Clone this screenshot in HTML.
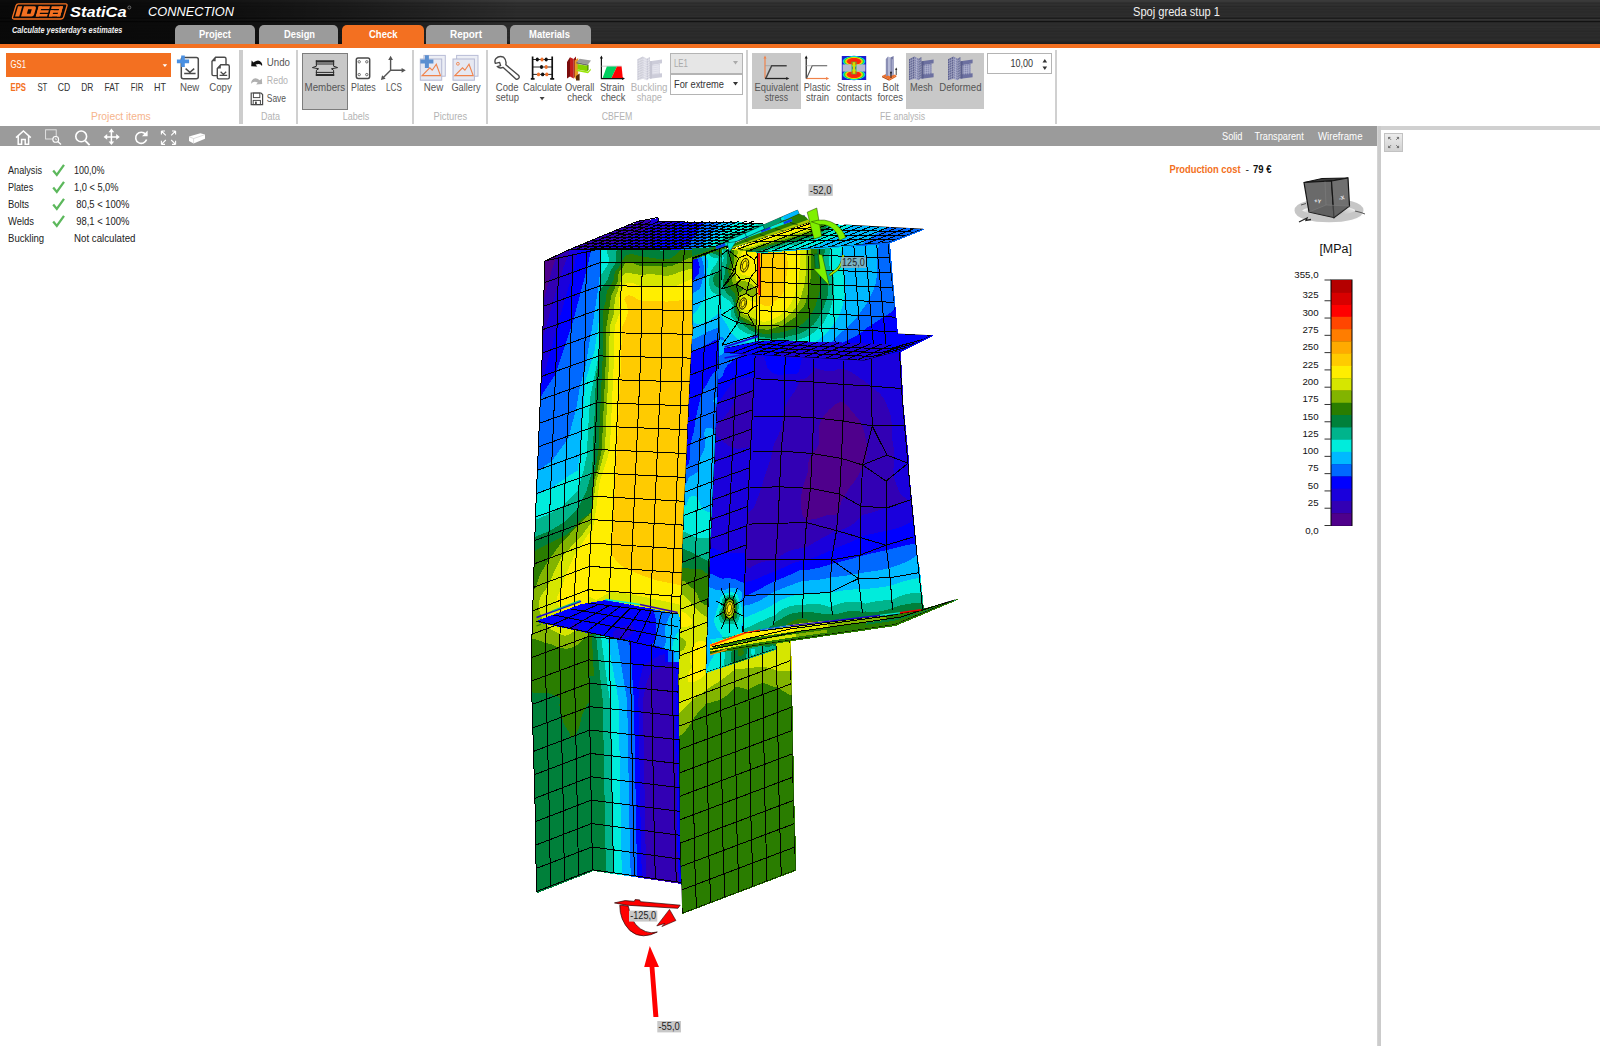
<!DOCTYPE html>
<html><head><meta charset="utf-8"><title>IDEA StatiCa Connection</title>
<style>
*{margin:0;padding:0;box-sizing:border-box}
html,body{width:1600px;height:1046px;overflow:hidden;background:#fff;font-family:"Liberation Sans",sans-serif;}
#app{position:relative;width:1600px;height:1046px;overflow:hidden;background:#fff}
.abs{position:absolute}
#hdr{left:0;top:0;width:1600px;height:44px;background:#161616;overflow:hidden}
#obar{left:0;top:44px;width:1600px;height:4px;background:#f37021}
.tab{position:absolute;top:25px;height:19px;background:#9b9b9b;border-radius:5px 5px 0 0;}
.tab.on{background:#f37021;height:23px}
#ribbon{left:0;top:48px;width:1600px;height:78px;background:#fff}
.sep{position:absolute;top:49.5px;height:74.5px;width:1.8px;background:#d0d0d0}
.sepw{position:absolute;top:49.5px;height:74.5px;width:3.8px;background:#cdcdcd}
.btnon{position:absolute;background:#c8c8c8}
#tbar{left:0;top:126px;width:1376.5px;height:20px;background:#9b9b9b}
#split{left:1376.5px;top:126px;width:4.5px;height:920px;background:linear-gradient(90deg,#d8d8d8,#cbcbcb 40%,#cbcbcb)}
#rtop{left:1381px;top:126px;width:219px;height:4px;background:#d0d0d0}
svg{position:absolute;left:0;top:0;overflow:visible}
text{font-family:"Liberation Sans",sans-serif}
</style></head><body><div id="app">
<div id="hdr" class="abs" style="background:linear-gradient(180deg,#3a3a3a 0px,#3a3a3a 1px,#383838 1px,#383838 2px,#303030 2px,#303030 3px,#2c2c2c 3px,#2c2c2c 4px,#303030 4px,#303030 5px,#2e2e2e 5px,#2e2e2e 6px,#282828 6px,#282828 7px,#2e2e2e 7px,#2e2e2e 8px,#2c2c2c 8px,#2c2c2c 9px,#2a2a2a 9px,#2a2a2a 10px,#2c2c2c 10px,#2c2c2c 11px,#2a2a2a 11px,#2a2a2a 12px,#2a2a2a 12px,#2a2a2a 13px,#2c2c2c 13px,#2c2c2c 14px,#2c2c2c 14px,#2c2c2c 15px,#2a2a2a 15px,#2a2a2a 16px,#2e2e2e 16px,#2e2e2e 17px,#242424 17px,#242424 18px,#1c1c1c 18px,#1c1c1c 19px,#343434 19px,#343434 20px,#2c2c2c 20px,#2c2c2c 21px,#121212 21px,#121212 22px,#262626 22px,#262626 23px,#2c2c2c 23px,#2c2c2c 24px,#2c2c2c 24px,#2c2c2c 25px,#2a2a2a 25px,#2a2a2a 26px,#2c2c2c 26px,#2c2c2c 27px,#2e2e2e 27px,#2e2e2e 28px,#2a2a2a 28px,#2a2a2a 29px,#2c2c2c 29px,#2c2c2c 30px,#2a2a2a 30px,#2a2a2a 31px,#282828 31px,#282828 32px,#2c2c2c 32px,#2c2c2c 33px,#2a2a2a 33px,#2a2a2a 34px,#2a2a2a 34px,#2a2a2a 35px,#2c2c2c 35px,#2c2c2c 36px,#2a2a2a 36px,#2a2a2a 37px,#282828 37px,#282828 38px,#2a2a2a 38px,#2a2a2a 39px,#2c2c2c 39px,#2c2c2c 40px,#2a2a2a 40px,#2a2a2a 41px,#262626 41px,#262626 42px,#222222 42px,#222222 43px,#202020 43px,#202020 44px)"></div>
<div class="abs" style="left:0;top:0;width:520px;height:44px;background:linear-gradient(90deg,rgba(0,0,0,.8) 0,rgba(0,0,0,.75) 35%,rgba(0,0,0,.45) 65%,rgba(0,0,0,0) 100%)"></div>
<div id="obar" class="abs"></div>
<div class="tab" style="left:175px;width:80px"></div>
<div class="tab" style="left:259px;width:79px"></div>
<div class="tab on" style="left:342px;width:82px"></div>
<div class="tab" style="left:426px;width:81px"></div>
<div class="tab" style="left:510px;width:80.5px"></div>
<div id="ribbon" class="abs"></div>
<div id="tbar" class="abs"></div>
<div id="split" class="abs"></div>
<div id="rtop" class="abs"></div>
<div class="sepw" style="left:239.3px"></div>
<div class="sep" style="left:296px"></div>
<div class="sep" style="left:412px"></div>
<div class="sep" style="left:486px"></div>
<div class="sep" style="left:746px"></div>
<div class="sep" style="left:1055.2px"></div>
<div class="btnon" style="left:302px;top:53px;width:46px;height:57px;border:1px solid #7d7d7d"></div>
<div class="btnon" style="left:752px;top:53px;width:49px;height:56px"></div>
<div class="btnon" style="left:906px;top:53px;width:78px;height:56px"></div>
<div class="abs" style="left:6px;top:53px;width:165px;height:24px;background:#f37021"></div>
<div class="abs" style="left:670px;top:53px;width:73px;height:21px;background:#e6e6e6;border:1px solid #b4b4b4"></div>
<div class="abs" style="left:670px;top:74px;width:73px;height:21px;background:#fff;border:1px solid #b4b4b4"></div>
<div class="abs" style="left:987px;top:53px;width:65px;height:21px;background:#fff;border:1px solid #b4b4b4"></div>
<div class="abs" style="left:1384px;top:133px;width:19px;height:19px;background:linear-gradient(180deg,#ececec,#d2d2d2);border:1px solid #c2c2c2"></div>
<svg width="1600" height="1046" viewBox="0 0 1600 1046">
<g id="logo">
<path d="M18.5 3.8 H65.5 Q67.5 3.8 67 5.8 L63.6 17 Q63 19 61 19 H14 Q12 19 12.6 17 L16 5.8 Q16.6 3.8 18.5 3.8Z" fill="none" stroke="#f37021" stroke-width="1.3"/>
<g transform="translate(0,0) skewX(-16)" fill="#f37021">
<rect x="19.80" y="6.3" width="4.2" height="10.3"/>
<path d="M25.80 6.3 h10.5 q2 0 2 2 v6.3 q0 2 -2 2 h-10.5z M30.80 9.2 v4.5 h3.6 v-4.5z" fill-rule="evenodd"/>
<rect x="40.50" y="6.3" width="11.3" height="2.6"/>
<rect x="40.50" y="10.2" width="11.3" height="2.5"/>
<rect x="40.50" y="14.0" width="11.3" height="2.6"/>
<rect x="40.50" y="6.3" width="3.2" height="10.3"/>
<rect x="53.60" y="6.3" width="11.3" height="2.6"/>
<rect x="53.60" y="10.2" width="11.3" height="2.5"/>
<rect x="53.60" y="14.0" width="11.3" height="2.6"/>
<rect x="61.70" y="6.3" width="3.2" height="10.3"/>
<rect x="53.60" y="10.2" width="3.2" height="6.4"/>
</g></g>
<text x="70.0" y="17.4" font-size="15.5" fill="#fff" font-weight="bold" font-style="italic" textLength="56.5" lengthAdjust="spacingAndGlyphs" >StatiCa</text>
<circle cx="129.3" cy="7.5" r="1.5" fill="none" stroke="#bbb" stroke-width=".5"/>
<text x="148.0" y="16.2" font-size="13.2" fill="#fff" font-weight="normal" font-style="italic" textLength="86.0" lengthAdjust="spacingAndGlyphs" >CONNECTION</text>
<text x="12.0" y="32.6" font-size="8.3" fill="#f2f2f2" font-weight="bold" font-style="italic" textLength="110.4" lengthAdjust="spacingAndGlyphs" >Calculate yesterday's estimates</text>
<text x="1133.0" y="16.0" font-size="12" fill="#f0f0f0" font-weight="normal" font-style="normal" textLength="87.0" lengthAdjust="spacingAndGlyphs" >Spoj greda stup 1</text>
<text x="199.0" y="38.3" font-size="11.3" fill="#fff" font-weight="bold" font-style="normal" textLength="32.0" lengthAdjust="spacingAndGlyphs" >Project</text>
<text x="284.0" y="38.3" font-size="11.3" fill="#fff" font-weight="bold" font-style="normal" textLength="31.0" lengthAdjust="spacingAndGlyphs" >Design</text>
<text x="369.0" y="38.3" font-size="11.3" fill="#fff" font-weight="bold" font-style="normal" textLength="28.5" lengthAdjust="spacingAndGlyphs" >Check</text>
<text x="450.0" y="38.3" font-size="11.3" fill="#fff" font-weight="bold" font-style="normal" textLength="32.0" lengthAdjust="spacingAndGlyphs" >Report</text>
<text x="529.0" y="38.3" font-size="11.3" fill="#fff" font-weight="bold" font-style="normal" textLength="41.0" lengthAdjust="spacingAndGlyphs" >Materials</text>
<text x="10.6" y="68.2" font-size="11.5" fill="#fff" font-weight="normal" font-style="normal" textLength="15.4" lengthAdjust="spacingAndGlyphs" >GS1</text>
<path d="M162.6 64.3 h4.6 l-2.3 2.6z" fill="#fff"/>
<text x="10.6" y="90.6" font-size="11.5" fill="#f37021" font-weight="bold" font-style="normal" textLength="15.4" lengthAdjust="spacingAndGlyphs" >EPS</text>
<text x="37.4" y="90.6" font-size="11.5" fill="#333" font-weight="normal" font-style="normal" textLength="10.0" lengthAdjust="spacingAndGlyphs" >ST</text>
<text x="57.7" y="90.6" font-size="11.5" fill="#333" font-weight="normal" font-style="normal" textLength="12.5" lengthAdjust="spacingAndGlyphs" >CD</text>
<text x="81.2" y="90.6" font-size="11.5" fill="#333" font-weight="normal" font-style="normal" textLength="12.2" lengthAdjust="spacingAndGlyphs" >DR</text>
<text x="104.5" y="90.6" font-size="11.5" fill="#333" font-weight="normal" font-style="normal" textLength="14.9" lengthAdjust="spacingAndGlyphs" >FAT</text>
<text x="130.8" y="90.6" font-size="11.5" fill="#333" font-weight="normal" font-style="normal" textLength="12.5" lengthAdjust="spacingAndGlyphs" >FIR</text>
<text x="154.0" y="90.6" font-size="11.5" fill="#333" font-weight="normal" font-style="normal" textLength="12.0" lengthAdjust="spacingAndGlyphs" >HT</text>
<text x="91.0" y="119.5" font-size="11.5" fill="#f6b48c" font-weight="normal" font-style="normal" textLength="59.8" lengthAdjust="spacingAndGlyphs" >Project items</text>
<text x="180.0" y="90.6" font-size="11.5" fill="#555" font-weight="normal" font-style="normal" textLength="19.3" lengthAdjust="spacingAndGlyphs" >New</text>
<text x="209.3" y="90.6" font-size="11.5" fill="#555" font-weight="normal" font-style="normal" textLength="22.5" lengthAdjust="spacingAndGlyphs" >Copy</text>
<text x="266.8" y="66.3" font-size="11.5" fill="#555" font-weight="normal" font-style="normal" textLength="23.2" lengthAdjust="spacingAndGlyphs" >Undo</text>
<text x="266.8" y="84.0" font-size="11.5" fill="#b3b3b3" font-weight="normal" font-style="normal" textLength="21.2" lengthAdjust="spacingAndGlyphs" >Redo</text>
<text x="266.8" y="101.7" font-size="11.5" fill="#555" font-weight="normal" font-style="normal" textLength="19.2" lengthAdjust="spacingAndGlyphs" >Save</text>
<text x="261.0" y="119.5" font-size="11.5" fill="#b3b3b3" font-weight="normal" font-style="normal" textLength="19.0" lengthAdjust="spacingAndGlyphs" >Data</text>
<text x="304.6" y="90.6" font-size="11.5" fill="#555" font-weight="normal" font-style="normal" textLength="40.6" lengthAdjust="spacingAndGlyphs" >Members</text>
<text x="351.0" y="90.6" font-size="11.5" fill="#555" font-weight="normal" font-style="normal" textLength="24.8" lengthAdjust="spacingAndGlyphs" >Plates</text>
<text x="386.0" y="90.6" font-size="11.5" fill="#555" font-weight="normal" font-style="normal" textLength="15.8" lengthAdjust="spacingAndGlyphs" >LCS</text>
<text x="342.8" y="119.5" font-size="11.5" fill="#b3b3b3" font-weight="normal" font-style="normal" textLength="26.5" lengthAdjust="spacingAndGlyphs" >Labels</text>
<text x="423.8" y="90.6" font-size="11.5" fill="#555" font-weight="normal" font-style="normal" textLength="19.5" lengthAdjust="spacingAndGlyphs" >New</text>
<text x="451.4" y="90.6" font-size="11.5" fill="#555" font-weight="normal" font-style="normal" textLength="29.3" lengthAdjust="spacingAndGlyphs" >Gallery</text>
<text x="433.6" y="119.5" font-size="11.5" fill="#b3b3b3" font-weight="normal" font-style="normal" textLength="33.6" lengthAdjust="spacingAndGlyphs" >Pictures</text>
<text x="495.8" y="90.6" font-size="11.5" fill="#555" font-weight="normal" font-style="normal" textLength="22.7" lengthAdjust="spacingAndGlyphs" >Code</text>
<text x="495.8" y="100.9" font-size="11.5" fill="#555" font-weight="normal" font-style="normal" textLength="23.2" lengthAdjust="spacingAndGlyphs" >setup</text>
<text x="523.0" y="90.6" font-size="11.5" fill="#555" font-weight="normal" font-style="normal" textLength="39.0" lengthAdjust="spacingAndGlyphs" >Calculate</text>
<path d="M539.6 97 h5 l-2.5 3.2z" fill="#444"/>
<text x="565.0" y="90.6" font-size="11.5" fill="#555" font-weight="normal" font-style="normal" textLength="29.4" lengthAdjust="spacingAndGlyphs" >Overall</text>
<text x="567.3" y="100.9" font-size="11.5" fill="#555" font-weight="normal" font-style="normal" textLength="24.7" lengthAdjust="spacingAndGlyphs" >check</text>
<text x="600.0" y="90.6" font-size="11.5" fill="#555" font-weight="normal" font-style="normal" textLength="24.5" lengthAdjust="spacingAndGlyphs" >Strain</text>
<text x="601.0" y="100.9" font-size="11.5" fill="#555" font-weight="normal" font-style="normal" textLength="24.3" lengthAdjust="spacingAndGlyphs" >check</text>
<text x="630.7" y="90.6" font-size="11.5" fill="#b3b3b3" font-weight="normal" font-style="normal" textLength="36.8" lengthAdjust="spacingAndGlyphs" >Buckling</text>
<text x="636.7" y="100.9" font-size="11.5" fill="#b3b3b3" font-weight="normal" font-style="normal" textLength="25.3" lengthAdjust="spacingAndGlyphs" >shape</text>
<text x="601.7" y="119.5" font-size="11.5" fill="#b3b3b3" font-weight="normal" font-style="normal" textLength="30.6" lengthAdjust="spacingAndGlyphs" >CBFEM</text>
<text x="674.0" y="67.3" font-size="11.5" fill="#aaa" font-weight="normal" font-style="normal" textLength="14.0" lengthAdjust="spacingAndGlyphs" >LE1</text>
<path d="M733 61 h5 l-2.5 3.4z" fill="#aaa"/>
<text x="674.0" y="88.3" font-size="11.5" fill="#333" font-weight="normal" font-style="normal" textLength="50.0" lengthAdjust="spacingAndGlyphs" >For extreme</text>
<path d="M733 82 h5 l-2.5 3.4z" fill="#333"/>
<text x="754.6" y="90.6" font-size="11.5" fill="#555" font-weight="normal" font-style="normal" textLength="43.8" lengthAdjust="spacingAndGlyphs" >Equivalent</text>
<text x="764.8" y="100.9" font-size="11.5" fill="#555" font-weight="normal" font-style="normal" textLength="23.2" lengthAdjust="spacingAndGlyphs" >stress</text>
<text x="803.8" y="90.6" font-size="11.5" fill="#555" font-weight="normal" font-style="normal" textLength="26.8" lengthAdjust="spacingAndGlyphs" >Plastic</text>
<text x="806.0" y="100.9" font-size="11.5" fill="#555" font-weight="normal" font-style="normal" textLength="23.0" lengthAdjust="spacingAndGlyphs" >strain</text>
<text x="837.0" y="90.6" font-size="11.5" fill="#555" font-weight="normal" font-style="normal" textLength="34.2" lengthAdjust="spacingAndGlyphs" >Stress in</text>
<text x="836.3" y="100.9" font-size="11.5" fill="#555" font-weight="normal" font-style="normal" textLength="35.7" lengthAdjust="spacingAndGlyphs" >contacts</text>
<text x="882.6" y="90.6" font-size="11.5" fill="#555" font-weight="normal" font-style="normal" textLength="16.3" lengthAdjust="spacingAndGlyphs" >Bolt</text>
<text x="877.4" y="100.9" font-size="11.5" fill="#555" font-weight="normal" font-style="normal" textLength="25.6" lengthAdjust="spacingAndGlyphs" >forces</text>
<text x="910.0" y="90.6" font-size="11.5" fill="#555" font-weight="normal" font-style="normal" textLength="22.8" lengthAdjust="spacingAndGlyphs" >Mesh</text>
<text x="939.3" y="90.6" font-size="11.5" fill="#555" font-weight="normal" font-style="normal" textLength="42.2" lengthAdjust="spacingAndGlyphs" >Deformed</text>
<text x="880.0" y="119.5" font-size="11.5" fill="#b3b3b3" font-weight="normal" font-style="normal" textLength="45.0" lengthAdjust="spacingAndGlyphs" >FE analysis</text>
<text x="1010.5" y="67.3" font-size="11.5" fill="#333" font-weight="normal" font-style="normal" textLength="22.5" lengthAdjust="spacingAndGlyphs" >10,00</text>
<path d="M1042.5 62.5 h4.6 l-2.3 -3.4z M1042.5 66.5 h4.6 l-2.3 3.4z" fill="#333"/>
<text x="1222.0" y="139.8" font-size="10.8" fill="#fff" font-weight="normal" font-style="normal" textLength="20.5" lengthAdjust="spacingAndGlyphs" >Solid</text>
<text x="1254.5" y="139.8" font-size="10.8" fill="#fff" font-weight="normal" font-style="normal" textLength="49.3" lengthAdjust="spacingAndGlyphs" >Transparent</text>
<text x="1318.0" y="139.8" font-size="10.8" fill="#fff" font-weight="normal" font-style="normal" textLength="44.5" lengthAdjust="spacingAndGlyphs" >Wireframe</text>
<text x="8.0" y="173.8" font-size="10.6" fill="#222" font-weight="normal" font-style="normal" textLength="34.0" lengthAdjust="spacingAndGlyphs" >Analysis</text>
<text x="74.0" y="173.8" font-size="10.6" fill="#222" font-weight="normal" font-style="normal" textLength="30.5" lengthAdjust="spacingAndGlyphs" >100,0%</text>
<path d="M53.2 170.6 l3.6 4.3 l7.2 -10" fill="none" stroke="#5cb85c" stroke-width="2.3"/>
<text x="8.0" y="190.8" font-size="10.6" fill="#222" font-weight="normal" font-style="normal" textLength="25.2" lengthAdjust="spacingAndGlyphs" >Plates</text>
<text x="74.0" y="190.8" font-size="10.6" fill="#222" font-weight="normal" font-style="normal" textLength="44.5" lengthAdjust="spacingAndGlyphs" >1,0 &lt; 5,0%</text>
<path d="M53.2 187.6 l3.6 4.3 l7.2 -10" fill="none" stroke="#5cb85c" stroke-width="2.3"/>
<text x="8.0" y="207.8" font-size="10.6" fill="#222" font-weight="normal" font-style="normal" textLength="21.0" lengthAdjust="spacingAndGlyphs" >Bolts</text>
<text x="76.2" y="207.8" font-size="10.6" fill="#222" font-weight="normal" font-style="normal" textLength="53.3" lengthAdjust="spacingAndGlyphs" >80,5 &lt; 100%</text>
<path d="M53.2 204.6 l3.6 4.3 l7.2 -10" fill="none" stroke="#5cb85c" stroke-width="2.3"/>
<text x="8.0" y="224.8" font-size="10.6" fill="#222" font-weight="normal" font-style="normal" textLength="26.0" lengthAdjust="spacingAndGlyphs" >Welds</text>
<text x="76.2" y="224.8" font-size="10.6" fill="#222" font-weight="normal" font-style="normal" textLength="53.3" lengthAdjust="spacingAndGlyphs" >98,1 &lt; 100%</text>
<path d="M53.2 221.6 l3.6 4.3 l7.2 -10" fill="none" stroke="#5cb85c" stroke-width="2.3"/>
<text x="8.0" y="241.8" font-size="10.6" fill="#222" font-weight="normal" font-style="normal" textLength="36.2" lengthAdjust="spacingAndGlyphs" >Buckling</text>
<text x="74.0" y="241.8" font-size="10.6" fill="#222" font-weight="normal" font-style="normal" textLength="61.5" lengthAdjust="spacingAndGlyphs" >Not calculated</text>
<text x="1169.4" y="173.0" font-size="10.8" fill="#f37021" font-weight="bold" font-style="normal" textLength="71.2" lengthAdjust="spacingAndGlyphs" >Production cost</text>
<text x="1245.5" y="173.0" font-size="10.8" fill="#222" font-weight="normal" font-style="normal" textLength="3.5" lengthAdjust="spacingAndGlyphs" >-</text>
<text x="1253.0" y="173.0" font-size="10.8" fill="#111" font-weight="bold" font-style="normal" textLength="18.5" lengthAdjust="spacingAndGlyphs" >79 €</text>
<rect x="181.3" y="57.6" width="17" height="21.2" rx="2" fill="#fff" stroke="#4a4a4a" stroke-width="1.5"/>
<path d="M184.2 73.4H195.6M185.6 68.6L189.9 72.3L194.2 68.6" stroke="#4a4a4a" stroke-width="1.5" fill="none"/>
<path d="M176.9 61.4H189.1M183 55.6V67.1" stroke="#4a90e2" stroke-width="3.6" fill="none"/>
<path d="M215.6 57.2H224.4Q226 57.2 226 58.8V74.2Q226 75.6 224.4 75.6H213.4Q212 75.6 212 74.2V61.2Z" fill="#fff" stroke="#4a4a4a" stroke-width="1.4"/><path d="M215.6 57.2V61.2H212Z" fill="#4a4a4a"/>
<path d="M220.8 64.8H227.8Q229.3 64.8 229.3 66.3V77.5Q229.3 78.9 227.8 78.9H218.7Q217.3 78.9 217.3 77.5V68.5Z" fill="#fff" stroke="#4a4a4a" stroke-width="1.4"/><path d="M220.8 64.8V68.5H217.3Z" fill="#4a4a4a"/>
<path d="M219.6 75.4H227.2M220.6 71.8L223.4 74.4L226.2 71.8" stroke="#4a4a4a" stroke-width="1.3" fill="none"/>
<path d="M251.2 66.2L251.6 60.6L253.6 62.4Q258.5 58.6 261.4 62.4Q262.6 64.2 262 66Q260.4 62.8 255.6 64.6L257.3 66.6Z" fill="#111"/>
<path d="M262.2 84L261.8 78.4L259.8 80.2Q254.9 76.4 252 80.2Q250.8 82 251.4 83.8Q253 80.6 257.8 82.4L256.1 84.4Z" fill="#b0b0b0"/>
<path d="M251.2 93H261L262.6 94.6V104.6H251.2Z" fill="#fff" stroke="#4a4a4a" stroke-width="1.2"/><rect x="253.4" y="93" width="6.4" height="4.6" fill="none" stroke="#4a4a4a" stroke-width="1"/><rect x="253.2" y="100.4" width="7.2" height="4.2" fill="none" stroke="#4a4a4a" stroke-width="1"/><rect x="255" y="101.6" width="1.8" height="3" fill="#4a4a4a"/>
<path d="M315.8 61.3H334.2M315.8 75H334.2" stroke="#2a2a2a" stroke-width="2.2"/><path d="M315.8 64H334.2M315.8 72.4H334.2" stroke="#2a2a2a" stroke-width="1"/>
<path d="M316.4 60.4V66.2L312.4 67.6L318.6 68.8L316.4 70.2V76M333.6 60.4V66.2L337.6 67.6L331.4 68.8L333.6 70.2V76" stroke="#2a2a2a" stroke-width="1" fill="none"/>
<rect x="356.3" y="58" width="13.4" height="20.4" rx="1.8" fill="none" stroke="#4a4a4a" stroke-width="1.5"/>
<circle cx="359.2" cy="61.8" r="1.2" fill="none" stroke="#4a4a4a" stroke-width=".8"/>
<circle cx="366.8" cy="61.8" r="1.2" fill="none" stroke="#4a4a4a" stroke-width=".8"/>
<circle cx="359.2" cy="74.6" r="1.2" fill="none" stroke="#4a4a4a" stroke-width=".8"/>
<circle cx="366.8" cy="74.6" r="1.2" fill="none" stroke="#4a4a4a" stroke-width=".8"/>
<path d="M390.6 70.2V58.5M390.6 70.2H403M390.6 70.2L382.6 78.2" stroke="#555" stroke-width="1.4" fill="none"/><path d="M390.6 55.8L388.2 60H393ZM405.8 70.3L401.6 67.9V72.7ZM380.9 79.9L382.1 75.2L385.6 78.7Z" fill="#555"/>
<rect x="423.90000000000003" y="55.4" width="21.4" height="20.8" fill="#eceef5" stroke="#b9bdd6" stroke-width="1"/>
<rect x="420.3" y="59" width="21.4" height="21.2" fill="#e6e8f2" stroke="#b4b8d2" stroke-width="1"/>
<path d="M422.1 75.6L429.8 67.8L432.2 70.2L436.3 64.2L440.5 75.6Z" fill="none" stroke="#f0824a" stroke-width="1.1"/>
<rect x="456.6" y="55.4" width="21.4" height="20.8" fill="#eceef5" stroke="#b9bdd6" stroke-width="1"/>
<rect x="453" y="59" width="21.4" height="21.2" fill="#e6e8f2" stroke="#b4b8d2" stroke-width="1"/>
<path d="M454.8 75.6L462.5 67.8L464.9 70.2L469 64.2L473.2 75.6Z" fill="none" stroke="#f0824a" stroke-width="1.1"/>
<circle cx="457.9" cy="63.8" r="1.4" fill="none" stroke="#f0824a" stroke-width=".9"/>
<path d="M420.4 61.6H433.4M426.9 55.2V68" stroke="#5b8fd0" stroke-width="4" fill="none"/>
<path d="M503.6 57.2Q499 55.4 496 58.4Q494.2 60.6 495.4 63.4L499.6 62.4L500.6 65.6L497.2 66.6Q499.6 68.8 503.2 67.4L515.6 78.8Q517.6 80 518.8 78.2Q519.8 76.6 518.4 75.2L505.8 64.8Q506.8 60 503.6 57.2Z" fill="#fff" stroke="#4a4a4a" stroke-width="1.4" stroke-linejoin="round"/>
<path d="M532.6 56.4V78.8M552.2 56.4V78.8M530.8 78.9H534.6M550.2 78.9H554.2" stroke="#111" stroke-width="1.7" fill="none"/><path d="M532.6 59.5H552.2M532.6 67H552.2M532.6 74.4H552.2" stroke="#111" stroke-width=".9"/>
<ellipse cx="537.3" cy="59.5" rx="1.6" ry="1.9" fill="#111"/>
<ellipse cx="542" cy="59.5" rx="1.6" ry="1.9" fill="#f0702a"/>
<ellipse cx="546.2" cy="59.5" rx="1.6" ry="1.9" fill="#111"/>
<ellipse cx="541.5" cy="67" rx="1.6" ry="1.9" fill="#111"/>
<ellipse cx="546.2" cy="67" rx="1.6" ry="1.9" fill="#f0702a"/>
<ellipse cx="538.5" cy="74.4" rx="1.6" ry="1.9" fill="#f0702a"/>
<ellipse cx="542.6" cy="74.4" rx="1.6" ry="1.9" fill="#111"/>
<ellipse cx="546.8" cy="74.4" rx="1.6" ry="1.9" fill="#f0702a"/>
<polygon points="567,62 570,57.2 570,76.6 567,78.6" fill="#7a0c0c"/><polygon points="570,57.2 573.6,59 573.6,78.4 570,76.6" fill="#c41c1c"/><polygon points="573.6,59 576,56.6 576,75.6 573.6,78.4" fill="#8e1010"/>
<polygon points="574.6,60.4 578.2,58 578.2,80 574.6,78.2" fill="#e89a28"/><polygon points="576,76 579.6,73.6 579.6,80.6 576,80.6" fill="#5a2a08"/>
<polygon points="576.4,62 579.6,58.8 591,60.6 588,64.4" fill="#9c9c9c"/><polygon points="576.4,62 588,64.4 588,66 576.4,63.6" fill="#6e6e6e"/><polygon points="577.6,64 587,65.8 587,71.2 577.6,69.4" fill="#86d200"/><polygon points="576.4,69.4 588,71.6 591,68.6 590.6,70.4 588,73.2 576.4,71" fill="#9ae60a"/><polygon points="587,65.8 588.6,64.4 588.6,70 587,71.2" fill="#5ea000"/>
<path d="M601.4 57V78.6H623.6" stroke="#111" stroke-width="1.2" fill="none"/><path d="M601.4 55.4L599.9 58.4H602.9ZM625 78.6L622 77.1V80.1Z" fill="#111"/><path d="M601.4 66.2H621.6" stroke="#bbb" stroke-width=".8"/>
<polygon points="602.6,78 606.8,66.6 616.9,66.6 611.5,78" fill="#00d060"/><polygon points="611.5,78 616.9,66.6 621.6,66.6 622.8,78" fill="#ff0000"/>
<g opacity="0.95"><polygon points="637.4,59.2 642.8,56.6 642.8,78.80000000000001 637.4,80.2" fill="#c2c2d0"/><polygon points="642.8,56.6 647.0,58.800000000000004 647.0,80.2 642.8,78.80000000000001" fill="#d4d4e0"/><polygon points="647.0,58.800000000000004 649.8,57.0 649.8,77.80000000000001 647.0,80.2" fill="#c2c2d0"/><polygon points="649.8,61.2 662.0,59.400000000000006 662.0,63.2 649.8,65.4" fill="#cacad8"/><polygon points="652.0,65.0 660.0,63.800000000000004 660.0,74.0 652.0,74.80000000000001" fill="#d4d4e0"/><polygon points="649.8,74.6 662.0,73.2 662.0,77.2 649.8,78.80000000000001" fill="#cacad8"/><polygon points="649.8,61.2 652.0,61.2 652.0,78.2 649.8,78.80000000000001" fill="#c2c2d0"/><path d="M637.4 61.4L642.8 59.0L647.0 61.0L649.8 59.4M637.4 63.8L642.8 61.4L647.0 63.4L649.8 61.8M637.4 66.2L642.8 63.8L647.0 65.8L649.8 64.2M637.4 68.60000000000001L642.8 66.2L647.0 68.2L649.8 66.60000000000001M637.4 71.0L642.8 68.6L647.0 70.6L649.8 69.0M637.4 73.4L642.8 71.0L647.0 73.0L649.8 71.4M637.4 75.80000000000001L642.8 73.4L647.0 75.4L649.8 73.80000000000001M637.4 78.2L642.8 75.8L647.0 77.8L649.8 76.2M637.4 80.60000000000001L642.8 78.2L647.0 80.2L649.8 78.60000000000001M654.0 64.64999999999999V74.5M656.0 64.5V74.39999999999999M658.0 64.35V74.3M652.0 67.0L660.0 65.80000000000001M652.0 69.0L660.0 67.80000000000001M652.0 71.0L660.0 69.80000000000001M652.0 73.0L660.0 71.80000000000001M639.1999999999999 58.400000000000006V79.80000000000001M641.0 57.5V79.30000000000001M644.9 57.7V79.5M648.4 57.900000000000006V79.0" stroke="#f4f4f8" stroke-width=".45" fill="none"/></g>
<g opacity="1"><polygon points="909,59.2 914.4,56.6 914.4,78.80000000000001 909,80.2" fill="#5a5e8c"/><polygon points="914.4,56.6 918.6,58.800000000000004 918.6,80.2 914.4,78.80000000000001" fill="#8286b0"/><polygon points="918.6,58.800000000000004 921.4,57.0 921.4,77.80000000000001 918.6,80.2" fill="#5a5e8c"/><polygon points="921.4,61.2 933.6,59.400000000000006 933.6,63.2 921.4,65.4" fill="#6c70a0"/><polygon points="923.6,65.0 931.6,63.800000000000004 931.6,74.0 923.6,74.80000000000001" fill="#8286b0"/><polygon points="921.4,74.6 933.6,73.2 933.6,77.2 921.4,78.80000000000001" fill="#6c70a0"/><polygon points="921.4,61.2 923.6,61.2 923.6,78.2 921.4,78.80000000000001" fill="#5a5e8c"/><path d="M909 61.4L914.4 59.0L918.6 61.0L921.4 59.4M909 63.8L914.4 61.4L918.6 63.4L921.4 61.8M909 66.2L914.4 63.8L918.6 65.8L921.4 64.2M909 68.60000000000001L914.4 66.2L918.6 68.2L921.4 66.60000000000001M909 71.0L914.4 68.6L918.6 70.6L921.4 69.0M909 73.4L914.4 71.0L918.6 73.0L921.4 71.4M909 75.80000000000001L914.4 73.4L918.6 75.4L921.4 73.80000000000001M909 78.2L914.4 75.8L918.6 77.8L921.4 76.2M909 80.60000000000001L914.4 78.2L918.6 80.2L921.4 78.60000000000001M925.6 64.64999999999999V74.5M927.6 64.5V74.39999999999999M929.6 64.35V74.3M923.6 67.0L931.6 65.80000000000001M923.6 69.0L931.6 67.80000000000001M923.6 71.0L931.6 69.80000000000001M923.6 73.0L931.6 71.80000000000001M910.8 58.400000000000006V79.80000000000001M912.6 57.5V79.30000000000001M916.5 57.7V79.5M920 57.900000000000006V79.0" stroke="#c8cae0" stroke-width=".45" fill="none"/></g>
<g opacity="1"><polygon points="948,59.2 953.4,56.6 953.4,78.80000000000001 948,80.2" fill="#5a5e8c"/><polygon points="953.4,56.6 957.6,58.800000000000004 957.6,80.2 953.4,78.80000000000001" fill="#8286b0"/><polygon points="957.6,58.800000000000004 960.4,57.0 960.4,77.80000000000001 957.6,80.2" fill="#5a5e8c"/><polygon points="960.4,61.2 972.6,59.400000000000006 972.6,63.2 960.4,65.4" fill="#6c70a0"/><polygon points="962.6,65.0 970.6,63.800000000000004 970.6,74.0 962.6,74.80000000000001" fill="#8286b0"/><polygon points="960.4,74.6 972.6,73.2 972.6,77.2 960.4,78.80000000000001" fill="#6c70a0"/><polygon points="960.4,61.2 962.6,61.2 962.6,78.2 960.4,78.80000000000001" fill="#5a5e8c"/><path d="M948 61.4L953.4 59.0L957.6 61.0L960.4 59.4M948 63.8L953.4 61.4L957.6 63.4L960.4 61.8M948 66.2L953.4 63.8L957.6 65.8L960.4 64.2M948 68.60000000000001L953.4 66.2L957.6 68.2L960.4 66.60000000000001M948 71.0L953.4 68.6L957.6 70.6L960.4 69.0M948 73.4L953.4 71.0L957.6 73.0L960.4 71.4M948 75.80000000000001L953.4 73.4L957.6 75.4L960.4 73.80000000000001M948 78.2L953.4 75.8L957.6 77.8L960.4 76.2M948 80.60000000000001L953.4 78.2L957.6 80.2L960.4 78.60000000000001M964.6 64.64999999999999V74.5M966.6 64.5V74.39999999999999M968.6 64.35V74.3M962.6 67.0L970.6 65.80000000000001M962.6 69.0L970.6 67.80000000000001M962.6 71.0L970.6 69.80000000000001M962.6 73.0L970.6 71.80000000000001M949.8 58.400000000000006V79.80000000000001M951.6 57.5V79.30000000000001M955.5 57.7V79.5M959 57.900000000000006V79.0" stroke="#c8cae0" stroke-width=".45" fill="none"/></g>
<path d="M765 78.5V57.4" stroke="#f0824a" stroke-width="1.2"/><path d="M765 55.6L763.5 58.6H766.5Z" fill="#f0824a"/><path d="M765 78.5H787.6" stroke="#222" stroke-width="1.3"/><path d="M789.4 78.5L786.2 76.9V80.1Z" fill="#222"/><path d="M765 65.7H771" stroke="#999" stroke-width=".7"/><path d="M765.7 78.5L771.7 65.7H786.7" stroke="#444" stroke-width="1.5" fill="none"/>
<path d="M806.2 78.5V57.4" stroke="#111" stroke-width="1.1"/><path d="M806.2 55.6L804.7 58.6H807.7Z" fill="#111"/><path d="M806.2 78.5H827.4" stroke="#f0824a" stroke-width="1.2"/><path d="M829.2 78.5L826 76.9V80.1Z" fill="#f0824a"/><path d="M806.2 65.7H812" stroke="#aaa" stroke-width=".7"/><path d="M806.5 78.5L812.2 65.7H827.2" stroke="#555" stroke-width="1.1" fill="none"/>
<defs><radialGradient id="blob"><stop offset="0" stop-color="#ff1a0a"/><stop offset=".55" stop-color="#ff2a0a"/><stop offset=".68" stop-color="#ffe000"/><stop offset=".8" stop-color="#30d830"/><stop offset=".9" stop-color="#00d8e8"/><stop offset="1" stop-color="#1c1cd0"/></radialGradient></defs>
<rect x="841.8" y="56" width="24.4" height="24" fill="#1c1cd0"/><ellipse cx="854" cy="61.4" rx="11.8" ry="5.6" fill="url(#blob)"/><ellipse cx="854" cy="74.6" rx="11.8" ry="5.6" fill="url(#blob)"/>
<rect x="842.6" y="64.4" width="9.4" height="7.2" fill="#b4b8d0"/><rect x="856" y="64.4" width="9.4" height="7.2" fill="#b4b8d0"/><rect x="852.6" y="62" width="2.8" height="12" fill="#d2e000"/><rect x="851.8" y="62" width="4.4" height="12" fill="none" stroke="#40c840" stroke-width=".6"/>
<polygon points="882,76 889.2,72.4 896.4,75.6 889.2,79.6" fill="#f0702a"/><polygon points="882,76 889.2,79.6 889.2,80.8 882,77.2" fill="#b84a10"/><polygon points="889.2,79.6 896.4,75.6 896.4,76.8 889.2,80.8" fill="#d85c18"/>
<polygon points="885.8,59 888,56.4 888,75.6 885.8,76.4" fill="#8a8eb4"/><polygon points="888,56.4 890.4,57.6 890.4,76.4 888,75.6" fill="#b6bad6"/><polygon points="890.4,57.6 893.6,56 893.6,74.6 890.4,76.4" fill="#7478a4"/><polygon points="891.6,58.8 894,60 894,75 891.6,75.6" fill="#a4a8c8"/>
<path d="M891 78V72.4M896.2 75V69" stroke="#111" stroke-width=".8"/><path d="M891 71L889.9 73.2H892.1ZM896.2 67.6L895.1 69.8H897.3Z" fill="#111"/>
<path d="M16 137.6L23.4 131L30.8 137.6M18.2 136V144.2H21.6V139.4H25.2V144.2H28.6V136" fill="none" stroke="#fff" stroke-width="1.5" stroke-linejoin="miter"/>
<rect x="45.6" y="129.8" width="10.6" height="9.2" fill="none" stroke="#e8e8e8" stroke-width=".9"/><circle cx="55.7" cy="139.4" r="2.9" fill="#9a9a9a" stroke="#fff" stroke-width="1.1"/><path d="M57.8 141.6L61 144.4" stroke="#fff" stroke-width="1.3"/><path d="M55.7 137.8V139.6H57.2" stroke="#fff" stroke-width=".6" fill="none"/>
<circle cx="81.2" cy="136.4" r="5.4" fill="none" stroke="#fff" stroke-width="1.6"/><path d="M85.2 140.6L89.6 145.2" stroke="#fff" stroke-width="1.8"/>
<path d="M111.4 130.6V143.2M105.4 136.9H117.8" stroke="#fff" stroke-width="1.5"/><path d="M111.4 128.6L108.6 132.2H114.2ZM111.4 145L108.6 141.6H114.2ZM103.6 136.9L107.2 134.1V139.7ZM119.8 136.9L116.2 134.1V139.7Z" fill="#fff"/>
<path d="M145.6 134.2A5.6 5.6 0 1 0 146.6 139.6" fill="none" stroke="#fff" stroke-width="1.6"/><path d="M147.6 130.6V136.2H142Z" fill="#fff"/>
<path d="M161.4 131H165M161.4 131V134.6M161.4 131L165.8 135.4M175.6 131H172M175.6 131V134.6M175.6 131L171.2 135.4M161.4 144.4H165M161.4 144.4V140.8M161.4 144.4L165.8 140M175.6 144.4H172M175.6 144.4V140.8M175.6 144.4L171.2 140" stroke="#fff" stroke-width="1.1" fill="none"/>
<polygon points="189,136.6 200.4,133.2 205,134.6 205,138.8 193.6,143.4 189,141" fill="#fff"/><path d="M189 136.6L193.6 138.6V143.4M193.6 138.6L205 134.6" stroke="#c4c4c4" stroke-width=".6" fill="none"/>
<path d="M1388.6 137.4H1390.4M1388.6 137.4V139.2M1388.6 137.4L1391 139.8M1398.6 137.4H1396.8M1398.6 137.4V139.2M1398.6 137.4L1396.2 139.8M1388.6 147.6H1390.4M1388.6 147.6V145.8M1388.6 147.6L1391 145.2M1398.6 147.6H1396.8M1398.6 147.6V145.8M1398.6 147.6L1396.2 145.2" stroke="#555" stroke-width=".8" fill="none"/>
<g shape-rendering="crispEdges">
<path fill="#4f008c" d="M544 293h1v4h-1zM544 290h2v3h-2zM544 286h3v4h-3zM544 282h4v4h-4zM544 279h5v3h-5zM544 275h6v4h-6zM544 272h7v3h-7zM545 271h6v1h-6zM545 268h7v3h-7zM545 265h8v3h-8zM545 262h9v3h-9zM545 261h10v1h-10zM547 260h8v1h-8zM549 259h6v1h-6zM551 258h5v1h-5zM553 257h3v1h-3zM555 256h1v1h-1z"/>
<path fill="#3200b4" d="M543 332h1v3h-1zM543 328h2v4h-2zM543 325h3v3h-3zM543 321h4v4h-4zM543 318h5v3h-5zM544 314h5v4h-5zM544 311h6v3h-6zM544 307h7v4h-7zM544 304h8v3h-8zM544 300h9v4h-9zM544 297h10v3h-10zM545 293h10v4h-10zM546 290h10v3h-10zM547 287h10v3h-10zM547 286h11v1h-11zM548 283h10v3h-10zM548 282h11v1h-11zM549 280h10v2h-10zM549 279h11v1h-11zM550 277h10v2h-10zM550 275h11v2h-11zM551 273h10v2h-10zM551 271h11v2h-11zM552 270h10v1h-10zM552 268h11v2h-11zM553 267h10v1h-10zM553 265h11v2h-11zM554 262h11v3h-11zM555 260h11v2h-11zM555 259h12v1h-12zM556 257h11v2h-11zM556 256h12v1h-12zM557 255h11v1h-11zM559 254h10v1h-10zM561 253h8v1h-8zM563 252h6v1h-6zM565 251h5v1h-5zM567 250h3v1h-3zM569 249h16v1h-16zM572 248h16v1h-16zM574 247h16v1h-16zM577 246h16v1h-16zM579 245h17v1h-17zM582 244h18v1h-18zM584 243h32v1h-32zM587 242h33v1h-33zM589 241h33v1h-33zM592 240h32v1h-32zM594 239h32v1h-32zM597 238h30v1h-30zM599 237h30v1h-30zM602 236h29v1h-29zM604 235h29v1h-29zM606 234h29v1h-29zM609 233h29v1h-29zM611 232h29v1h-29zM614 231h28v1h-28zM616 230h28v1h-28zM619 229h26v1h-26zM621 228h25v1h-25zM624 227h23v1h-23zM626 226h22v1h-22zM629 225h19v1h-19zM631 224h18v1h-18zM634 223h16v1h-16zM636 222h14v1h-14zM640 221h11v1h-11zM643 697h30v35h-30zM643 732h31v3h-31zM644 692h29v5h-29zM644 735h30v25h-30zM644 760h33v29h-33zM645 220h6v1h-6zM645 686h28v6h-28zM645 789h32v55h-32zM646 683h27v3h-27zM646 844h31v8h-31zM646 852h32v21h-32zM646 873h33v6h-33zM647 680h26v3h-26zM648 678h25v2h-25zM649 675h24v3h-24zM650 674h23v1h-23zM651 673h22v1h-22zM651 879h28v1h-28zM652 672h21v1h-21zM653 670h20v2h-20zM656 669h17v1h-17zM658 880h21v1h-21zM659 668h14v1h-14zM661 667h12v1h-12zM664 666h9v1h-9zM665 881h14v1h-14zM667 665h6v1h-6zM671 882h8v1h-8zM678 883h1v1h-1z"/>
<path fill="#1a00dc" d="M541 380h1v4h-1zM541 377h2v3h-2zM541 373h3v4h-3zM541 369h4v4h-4zM541 366h5v3h-5zM541 365h6v1h-6zM542 362h5v3h-5zM542 358h6v4h-6zM542 355h7v3h-7zM542 351h8v4h-8zM542 348h9v3h-9zM542 344h10v4h-10zM542 342h11v2h-11zM543 340h10v2h-10zM543 337h11v3h-11zM543 335h12v2h-12zM544 333h11v2h-11zM544 332h12v1h-12zM545 329h11v3h-11zM545 328h12v1h-12zM546 326h11v2h-11zM546 325h12v1h-12zM547 322h11v3h-11zM547 321h12v1h-12zM548 319h11v2h-11zM548 318h12v1h-12zM549 315h11v3h-11zM549 314h12v1h-12zM550 312h11v2h-11zM550 311h12v1h-12zM551 308h11v3h-11zM551 307h12v1h-12zM552 305h11v2h-11zM552 304h12v1h-12zM553 301h11v3h-11zM553 300h12v1h-12zM554 298h11v2h-11zM554 297h12v1h-12zM555 294h11v3h-11zM555 293h12v1h-12zM556 291h11v2h-11zM556 290h12v1h-12zM557 287h11v3h-11zM558 284h11v3h-11zM558 283h12v1h-12zM559 280h11v3h-11zM560 277h11v3h-11zM561 273h11v4h-11zM562 270h11v3h-11zM563 269h10v1h-10zM563 267h11v2h-11zM564 265h10v2h-10zM565 264h9v1h-9zM565 262h10v2h-10zM566 260h9v2h-9zM567 259h8v1h-8zM567 257h9v2h-9zM568 256h8v1h-8zM568 255h9v1h-9zM569 252h8v3h-8zM570 250h8v2h-8zM585 249h62v1h-62zM588 248h60v1h-60zM590 247h60v1h-60zM593 246h58v1h-58zM596 245h56v1h-56zM600 244h53v1h-53zM616 243h38v1h-38zM620 242h35v1h-35zM622 241h35v1h-35zM624 240h34v1h-34zM626 239h33v1h-33zM627 238h33v1h-33zM629 237h32v1h-32zM631 236h31v1h-31zM633 235h30v1h-30zM635 234h30v1h-30zM638 698h5v9h-5zM638 233h28v1h-28zM639 697h4v1h-4zM639 707h4v28h-4zM639 692h5v5h-5zM639 735h5v27h-5zM639 686h6v6h-6zM639 683h7v3h-7zM639 681h8v2h-8zM640 762h4v27h-4zM640 789h5v28h-5zM640 680h7v1h-7zM640 678h8v2h-8zM640 677h9v1h-9zM640 232h27v1h-27zM641 817h4v27h-4zM641 844h5v20h-5zM641 675h8v2h-8zM641 674h9v1h-9zM641 673h10v1h-10zM642 864h4v14h-4zM642 672h10v1h-10zM642 670h11v2h-11zM642 669h14v1h-14zM642 231h26v1h-26zM643 668h16v1h-16zM643 667h18v1h-18zM643 666h21v1h-21zM643 665h24v1h-24zM644 878h2v1h-2zM644 230h25v1h-25zM645 229h25v1h-25zM645 664h31v1h-31zM646 228h25v1h-25zM646 663h30v1h-30zM647 227h25v1h-25zM648 226h25v1h-25zM648 225h26v1h-26zM648 662h28v1h-28zM649 224h26v1h-26zM650 661h15v1h-15zM650 223h26v1h-26zM650 222h27v1h-27zM651 219h8v2h-8zM651 221h9v1h-9zM651 660h14v1h-14zM653 659h12v1h-12zM654 658h11v1h-11zM656 218h3v1h-3zM656 657h9v1h-9zM658 656h7v1h-7zM659 655h6v1h-6zM663 654h2v1h-2zM673 665h3v67h-3zM674 732h2v20h-2zM674 752h3v8h-3z"/>
<path fill="#0000ff" d="M540 396h1v2h-1zM540 394h2v2h-2zM540 392h3v2h-3zM540 391h4v1h-4zM540 389h5v2h-5zM541 388h5v1h-5zM541 386h6v2h-6zM541 385h7v1h-7zM541 384h8v1h-8zM542 383h7v1h-7zM542 382h8v1h-8zM542 380h9v2h-9zM543 379h9v1h-9zM543 377h10v2h-10zM544 376h10v1h-10zM544 374h11v2h-11zM544 373h12v1h-12zM545 371h11v2h-11zM545 369h12v2h-12zM546 368h11v1h-11zM546 366h12v2h-12zM547 365h11v1h-11zM547 362h12v3h-12zM548 359h12v3h-12zM548 358h13v1h-13zM549 356h12v2h-12zM549 355h13v1h-13zM550 353h12v2h-12zM550 351h13v2h-13zM551 350h12v1h-12zM551 348h13v2h-13zM552 347h12v1h-12zM552 344h13v3h-13zM553 341h13v3h-13zM553 340h14v1h-14zM554 338h13v2h-13zM554 337h14v1h-14zM555 335h13v2h-13zM555 333h14v2h-14zM556 332h13v1h-13zM556 329h14v3h-14zM557 326h14v3h-14zM558 323h14v3h-14zM558 322h15v1h-15zM559 320h14v2h-14zM559 319h15v1h-15zM560 316h14v3h-14zM560 315h15v1h-15zM561 312h14v3h-14zM562 308h14v4h-14zM563 305h14v3h-14zM564 304h13v1h-13zM564 301h14v3h-14zM565 298h14v3h-14zM566 297h13v1h-13zM566 294h14v3h-14zM567 293h13v1h-13zM567 291h14v2h-14zM568 289h13v2h-13zM568 287h14v2h-14zM569 285h13v2h-13zM569 284h14v1h-14zM570 282h13v2h-13zM570 280h14v2h-14zM571 278h13v2h-13zM571 277h14v1h-14zM572 274h13v3h-13zM572 273h14v1h-14zM573 270h13v3h-13zM573 269h14v1h-14zM574 266h13v3h-13zM574 264h14v2h-14zM575 262h13v2h-13zM575 259h14v3h-14zM576 257h13v2h-13zM576 256h14v1h-14zM577 253h13v3h-13zM577 252h14v1h-14zM578 250h13v2h-13zM623 613h30v1h-30zM623 614h38v1h-38zM624 615h44v1h-44zM624 616h45v3h-45zM625 619h44v5h-44zM626 624h43v5h-43zM627 629h42v4h-42zM628 633h41v5h-41zM629 638h40v7h-40zM630 648h38v6h-38zM630 645h39v3h-39zM631 663h15v1h-15zM631 662h17v1h-17zM631 661h19v1h-19zM631 660h20v1h-20zM631 659h22v1h-22zM631 658h23v1h-23zM631 657h25v1h-25zM631 656h27v1h-27zM631 655h28v1h-28zM631 654h32v1h-32zM632 677h8v3h-8zM632 673h9v4h-9zM632 669h10v4h-10zM632 665h11v4h-11zM632 664h13v1h-13zM633 681h6v14h-6zM633 680h7v1h-7zM634 698h4v9h-4zM634 695h5v3h-5zM634 707h5v28h-5zM635 735h4v27h-4zM635 762h5v27h-5zM636 789h4v28h-4zM636 817h5v27h-5zM637 844h4v20h-4zM637 864h5v13h-5zM638 877h4v1h-4zM647 249h34v1h-34zM648 248h35v1h-35zM650 247h34v1h-34zM651 246h35v1h-35zM652 245h36v1h-36zM653 244h36v1h-36zM654 243h36v1h-36zM655 242h36v1h-36zM657 241h34v1h-34zM658 240h34v1h-34zM659 239h33v1h-33zM660 238h33v1h-33zM661 237h32v1h-32zM662 236h32v1h-32zM663 235h32v1h-32zM665 654h3v8h-3zM665 234h30v1h-30zM666 233h30v1h-30zM667 232h30v1h-30zM668 231h29v1h-29zM669 230h29v1h-29zM670 229h29v1h-29zM671 228h28v1h-28zM672 227h28v1h-28zM673 226h28v1h-28zM674 225h27v1h-27zM675 224h27v1h-27zM676 662h4v90h-4zM676 223h27v1h-27zM677 752h3v25h-3zM677 777h4v75h-4zM677 222h26v1h-26zM678 852h3v20h-3zM678 872h4v1h-4zM679 873h3v11h-3z"/>
<path fill="#0069ff" d="M537 470h2v1h-2zM537 469h3v1h-3zM537 468h4v1h-4zM537 467h6v1h-6zM537 466h7v1h-7zM537 465h8v1h-8zM537 464h10v1h-10zM537 463h11v1h-11zM537 462h13v1h-13zM537 461h14v1h-14zM537 460h15v1h-15zM537 459h16v1h-16zM538 457h16v2h-16zM538 456h17v1h-17zM538 455h18v1h-18zM538 453h19v2h-19zM538 452h20v1h-20zM538 450h21v2h-21zM538 449h22v1h-22zM538 448h23v1h-23zM538 446h24v2h-24zM538 445h25v1h-25zM538 444h26v1h-26zM538 442h27v2h-27zM538 441h28v1h-28zM538 439h29v2h-29zM538 438h30v1h-30zM538 435h31v3h-31zM539 434h30v1h-30zM539 430h31v4h-31zM539 426h32v4h-32zM539 422h33v4h-33zM539 419h34v3h-34zM539 415h35v4h-35zM539 412h36v3h-36zM540 411h35v1h-35zM540 407h36v4h-36zM540 401h37v6h-37zM540 398h38v3h-38zM541 396h37v2h-37zM542 395h36v1h-36zM542 394h37v1h-37zM543 392h36v2h-36zM544 391h35v1h-35zM545 389h34v2h-34zM546 388h34v1h-34zM547 386h33v2h-33zM548 385h32v1h-32zM549 384h31v1h-31zM549 383h32v1h-32zM550 382h31v1h-31zM551 381h30v1h-30zM551 380h31v1h-31zM552 379h30v1h-30zM553 377h29v2h-29zM554 376h29v1h-29zM555 374h28v2h-28zM556 373h27v1h-27zM556 371h28v2h-28zM557 369h27v2h-27zM557 368h28v1h-28zM558 366h27v2h-27zM558 365h28v1h-28zM559 362h27v3h-27zM560 360h26v2h-26zM560 359h27v1h-27zM561 356h26v3h-26zM562 354h25v2h-25zM562 353h26v1h-26zM563 350h25v3h-25zM564 348h24v2h-24zM564 347h25v1h-25zM565 344h24v3h-24zM566 342h23v2h-23zM566 341h24v1h-24zM567 338h23v3h-23zM568 336h22v2h-22zM568 335h23v1h-23zM569 332h22v3h-22zM570 331h21v1h-21zM570 329h22v2h-22zM571 326h21v3h-21zM572 325h20v1h-20zM572 323h21v2h-21zM573 320h20v3h-20zM574 319h19v1h-19zM574 316h20v3h-20zM575 312h19v4h-19zM576 308h19v4h-19zM577 306h18v2h-18zM577 304h19v2h-19zM578 301h18v3h-18zM579 299h17v2h-17zM579 297h18v2h-18zM580 293h17v4h-17zM581 289h17v4h-17zM582 287h16v2h-16zM582 285h17v2h-17zM583 282h16v3h-16zM584 278h15v4h-15zM585 277h14v1h-14zM585 274h15v3h-15zM586 270h14v4h-14zM587 266h13v4h-13zM588 262h12v4h-12zM589 257h11v5h-11zM590 256h10v1h-10zM590 253h11v3h-11zM591 250h10v3h-10zM611 613h12v2h-12zM612 615h12v4h-12zM613 619h12v5h-12zM614 624h12v5h-12zM615 629h12v4h-12zM616 633h12v5h-12zM617 638h12v5h-12zM618 643h11v2h-11zM618 645h12v4h-12zM619 649h11v5h-11zM619 654h12v1h-12zM620 655h11v6h-11zM621 661h10v3h-10zM621 664h11v3h-11zM622 667h10v6h-10zM623 673h9v6h-9zM624 679h8v1h-8zM624 680h9v5h-9zM625 685h8v6h-8zM626 691h7v4h-7zM626 695h8v2h-8zM627 697h7v21h-7zM628 718h6v17h-6zM628 735h7v38h-7zM629 773h6v16h-6zM629 789h7v39h-7zM630 828h6v16h-6zM630 844h7v24h-7zM631 868h6v9h-6zM668 653h6v9h-6zM668 648h7v5h-7zM669 620h6v28h-6zM669 616h7v4h-7zM681 249h17v1h-17zM683 248h16v1h-16zM684 247h16v1h-16zM686 246h15v1h-15zM688 245h14v1h-14zM689 244h13v1h-13zM690 243h13v1h-13zM691 241h13v2h-13zM692 240h13v1h-13zM692 239h14v1h-14zM693 238h14v1h-14zM693 237h15v1h-15zM694 236h14v1h-14zM695 235h14v1h-14zM695 234h15v1h-15zM696 233h15v1h-15zM697 232h15v1h-15zM697 231h16v1h-16zM698 230h16v1h-16zM699 229h16v1h-16zM699 228h17v1h-17zM700 227h17v1h-17zM701 226h16v1h-16zM701 225h17v1h-17zM702 224h17v1h-17zM703 223h17v1h-17zM703 222h18v1h-18z"/>
<path fill="#00b9ff" d="M536 494h2v1h-2zM536 493h4v1h-4zM536 492h6v1h-6zM536 491h8v1h-8zM536 490h10v1h-10zM536 489h12v1h-12zM536 488h14v1h-14zM536 487h16v1h-16zM536 486h18v1h-18zM536 485h19v1h-19zM536 484h20v1h-20zM536 483h22v1h-22zM536 482h23v1h-23zM537 481h24v1h-24zM537 480h25v1h-25zM537 479h27v1h-27zM537 478h28v1h-28zM537 477h29v1h-29zM537 476h31v1h-31zM537 475h32v1h-32zM537 474h34v1h-34zM537 473h36v1h-36zM537 472h37v1h-37zM537 471h39v1h-39zM539 470h39v1h-39zM540 469h38v1h-38zM541 468h37v1h-37zM543 467h35v1h-35zM544 466h34v1h-34zM545 465h33v1h-33zM547 464h31v1h-31zM548 463h31v1h-31zM550 462h29v1h-29zM551 461h28v1h-28zM552 460h27v1h-27zM553 459h26v1h-26zM554 458h25v1h-25zM554 457h26v1h-26zM555 456h25v1h-25zM556 455h24v1h-24zM557 453h23v2h-23zM558 452h22v1h-22zM559 450h21v2h-21zM560 449h20v1h-20zM561 448h19v1h-19zM562 446h18v2h-18zM563 445h17v1h-17zM564 444h16v1h-16zM565 443h15v1h-15zM565 442h16v1h-16zM566 441h15v1h-15zM567 439h14v2h-14zM568 438h13v1h-13zM569 434h12v4h-12zM570 430h11v4h-11zM571 427h10v3h-10zM571 426h11v1h-11zM572 422h10v4h-10zM573 419h9v3h-9zM574 415h8v4h-8zM575 411h8v4h-8zM576 407h7v4h-7zM577 404h6v3h-6zM577 401h7v3h-7zM578 395h6v6h-6zM579 392h5v3h-5zM579 389h6v3h-6zM580 384h5v5h-5zM581 381h4v3h-4zM582 377h4v4h-4zM583 374h4v3h-4zM583 373h5v1h-5zM584 371h4v2h-4zM584 369h5v2h-5zM585 367h4v2h-4zM585 366h5v1h-5zM586 364h4v2h-4zM586 361h5v3h-5zM586 360h6v1h-6zM587 357h5v3h-5zM587 354h6v3h-6zM588 351h6v3h-6zM588 348h7v3h-7zM589 344h6v4h-6zM589 342h7v2h-7zM590 337h6v5h-6zM590 336h7v1h-7zM591 331h6v5h-6zM592 330h5v1h-5zM592 325h6v5h-6zM593 323h5v2h-5zM593 319h6v4h-6zM594 316h5v3h-5zM594 312h6v4h-6zM595 306h5v6h-5zM596 299h4v7h-4zM597 293h3v6h-3zM598 287h2v6h-2zM599 277h1v10h-1zM603 613h8v2h-8zM604 615h8v4h-8zM604 619h9v2h-9zM605 621h8v3h-8zM605 624h9v3h-9zM606 627h8v2h-8zM606 629h9v3h-9zM607 632h8v1h-8zM607 633h9v5h-9zM608 638h9v5h-9zM609 643h9v6h-9zM610 649h9v6h-9zM611 655h9v6h-9zM612 661h9v5h-9zM613 666h8v1h-8zM613 667h9v5h-9zM614 672h8v1h-8zM614 673h9v5h-9zM615 678h8v1h-8zM615 679h9v4h-9zM616 683h8v2h-8zM616 685h9v4h-9zM617 689h8v2h-8zM617 691h9v4h-9zM618 695h8v2h-8zM618 697h9v3h-9zM619 700h8v18h-8zM619 718h9v33h-9zM620 751h8v22h-8zM620 773h9v33h-9zM621 806h8v22h-8zM621 828h9v32h-9zM622 860h8v8h-8zM622 868h9v7h-9zM624 875h7v1h-7zM674 656h6v6h-6zM674 653h7v3h-7zM675 620h6v33h-6zM676 617h5v3h-5zM680 613h1v4h-1zM698 249h9v1h-9zM699 248h9v1h-9zM700 247h8v1h-8zM701 246h8v1h-8zM702 245h8v1h-8zM702 244h9v1h-9zM703 243h8v1h-8zM704 242h8v1h-8zM704 241h9v1h-9zM705 240h9v1h-9zM706 239h10v1h-10zM707 238h10v1h-10zM708 237h10v1h-10zM708 236h11v1h-11zM709 235h11v1h-11zM710 234h10v1h-10zM711 233h10v1h-10zM712 232h10v1h-10zM713 231h10v1h-10zM714 230h11v1h-11zM715 229h11v1h-11zM716 228h11v1h-11zM717 227h11v1h-11zM717 226h13v1h-13zM718 225h13v1h-13zM719 224h14v1h-14zM720 223h16v1h-16zM721 222h17v1h-17z"/>
<path fill="#00ecdc" d="M535 519h1v1h-1zM535 518h4v1h-4zM535 517h6v1h-6zM535 516h8v1h-8zM535 515h11v1h-11zM535 514h13v1h-13zM535 513h15v1h-15zM535 512h17v1h-17zM535 511h18v1h-18zM535 510h20v1h-20zM535 509h22v1h-22zM535 508h23v1h-23zM535 507h25v1h-25zM535 506h27v1h-27zM536 505h27v1h-27zM536 504h28v1h-28zM536 503h29v1h-29zM536 502h30v1h-30zM536 501h31v1h-31zM536 500h32v1h-32zM536 499h33v1h-33zM536 498h34v1h-34zM536 497h35v1h-35zM536 496h36v1h-36zM536 495h37v1h-37zM538 494h36v1h-36zM540 493h35v1h-35zM542 492h34v1h-34zM544 491h33v1h-33zM546 490h32v1h-32zM548 489h30v1h-30zM550 488h29v1h-29zM552 487h27v1h-27zM554 486h25v1h-25zM555 485h24v1h-24zM556 484h24v1h-24zM558 483h22v1h-22zM559 482h21v1h-21zM561 481h19v1h-19zM562 480h19v1h-19zM564 479h17v1h-17zM565 478h16v1h-16zM566 477h16v1h-16zM568 476h14v1h-14zM569 475h13v1h-13zM571 474h11v1h-11zM573 473h10v1h-10zM574 472h9v1h-9zM576 471h7v1h-7zM578 466h6v5h-6zM578 464h7v2h-7zM579 461h6v3h-6zM579 458h7v3h-7zM580 457h6v1h-6zM580 443h7v14h-7zM581 441h6v2h-6zM581 427h7v14h-7zM582 423h6v4h-6zM582 415h7v8h-7zM583 408h6v7h-6zM583 404h7v4h-7zM584 396h6v8h-6zM584 392h7v4h-7zM585 391h6v1h-6zM585 386h7v5h-7zM585 381h8v5h-8zM586 377h8v4h-8zM587 376h7v1h-7zM587 374h8v2h-8zM588 371h7v3h-7zM589 367h7v4h-7zM590 366h6v1h-6zM590 364h7v2h-7zM591 361h6v3h-6zM592 357h6v4h-6zM593 356h5v1h-5zM593 354h6v2h-6zM594 351h5v3h-5zM595 344h4v7h-4zM596 337h3v7h-3zM597 330h2v7h-2zM598 323h1v7h-1zM598 613h5v2h-5zM598 615h6v2h-6zM599 316h1v5h-1zM599 617h5v4h-5zM599 621h6v4h-6zM600 274h1v2h-1zM600 273h2v1h-2zM600 271h3v2h-3zM600 270h4v1h-4zM600 268h5v2h-5zM600 625h5v2h-5zM600 267h6v1h-6zM600 627h6v5h-6zM600 265h7v2h-7zM600 632h7v1h-7zM600 256h8v1h-8zM600 262h8v3h-8zM600 257h9v5h-9zM601 250h6v4h-6zM601 633h6v5h-6zM601 254h7v2h-7zM601 638h7v2h-7zM602 640h6v3h-6zM602 643h7v5h-7zM603 648h6v1h-6zM603 649h7v6h-7zM604 655h7v6h-7zM604 661h8v1h-8zM605 662h7v4h-7zM605 666h8v4h-8zM606 670h7v2h-7zM606 672h8v5h-8zM607 677h7v1h-7zM607 678h8v5h-8zM607 683h9v1h-9zM608 684h8v5h-8zM608 689h9v2h-9zM609 691h8v4h-8zM609 695h9v3h-9zM610 698h8v2h-8zM610 700h9v35h-9zM611 735h8v16h-8zM611 751h9v38h-9zM612 789h8v17h-8zM612 806h9v38h-9zM613 844h8v16h-8zM613 860h9v14h-9zM617 874h5v1h-5zM707 249h7v1h-7zM708 248h6v1h-6zM708 247h7v1h-7zM709 246h6v1h-6zM710 245h6v1h-6zM711 244h6v1h-6zM711 243h7v1h-7zM712 242h7v1h-7zM713 241h7v1h-7zM714 240h7v1h-7zM716 239h6v1h-6zM717 238h6v1h-6zM718 237h6v1h-6zM719 236h6v1h-6zM720 235h6v1h-6zM720 234h8v1h-8zM721 233h8v1h-8zM722 232h10v1h-10zM723 231h18v1h-18zM725 230h20v1h-20zM726 229h21v1h-21zM727 228h22v1h-22zM728 227h23v1h-23zM730 226h24v1h-24zM731 225h25v1h-25zM733 224h25v1h-25zM736 223h21v1h-21zM738 222h5v1h-5z"/>
<path fill="#00b48c" d="M535 536h1v1h-1zM535 535h3v1h-3zM535 534h6v1h-6zM535 533h8v1h-8zM535 532h11v1h-11zM535 531h13v1h-13zM535 530h15v1h-15zM535 529h17v1h-17zM535 528h19v1h-19zM535 527h20v1h-20zM535 526h22v1h-22zM535 525h24v1h-24zM535 524h25v1h-25zM535 523h27v1h-27zM535 522h29v1h-29zM535 521h30v1h-30zM535 520h31v1h-31zM536 519h31v1h-31zM539 518h29v1h-29zM541 517h28v1h-28zM543 516h27v1h-27zM546 515h25v1h-25zM548 514h24v1h-24zM550 513h23v1h-23zM552 512h22v1h-22zM553 511h22v1h-22zM555 510h21v1h-21zM557 509h20v1h-20zM558 508h20v1h-20zM560 507h18v1h-18zM562 506h17v1h-17zM563 505h16v1h-16zM564 504h16v1h-16zM565 503h15v1h-15zM566 502h15v1h-15zM567 501h14v1h-14zM568 500h14v1h-14zM569 499h13v1h-13zM570 498h13v1h-13zM571 497h12v1h-12zM572 496h12v1h-12zM573 495h11v1h-11zM574 494h11v1h-11zM575 493h10v1h-10zM576 492h10v1h-10zM577 491h9v1h-9zM578 489h9v2h-9zM579 487h8v2h-8zM579 485h9v2h-9zM580 484h8v1h-8zM580 481h9v3h-9zM581 480h8v1h-8zM581 478h9v2h-9zM582 477h8v1h-8zM582 474h9v3h-9zM583 473h8v1h-8zM583 471h9v2h-9zM584 466h8v5h-8zM585 462h7v4h-7zM585 461h8v1h-8zM586 457h7v4h-7zM587 441h6v16h-6zM588 436h5v5h-5zM588 423h6v13h-6zM589 416h5v7h-5zM589 408h6v8h-6zM590 396h5v12h-5zM591 391h4v5h-4zM592 388h3v3h-3zM592 386h4v2h-4zM593 381h3v5h-3zM594 461h1v5h-1zM594 376h2v5h-2zM594 613h4v4h-4zM594 617h5v3h-5zM595 373h1v3h-1zM595 438h1v6h-1zM595 371h2v2h-2zM595 620h4v5h-4zM595 625h5v5h-5zM596 369h1v2h-1zM596 415h1v7h-1zM596 366h2v2h-2zM596 368h3v1h-3zM596 630h4v3h-4zM596 633h5v7h-5zM597 365h1v1h-1zM597 391h1v9h-1zM597 361h2v4h-2zM597 640h5v8h-5zM597 648h6v2h-6zM598 356h1v5h-1zM598 369h1v9h-1zM598 650h5v5h-5zM598 655h6v5h-6zM599 323h1v27h-1zM599 660h5v2h-5zM599 662h6v8h-6zM600 288h1v2h-1zM600 287h2v1h-2zM600 285h3v2h-3zM600 284h4v1h-4zM600 283h5v1h-5zM600 281h6v2h-6zM600 670h6v7h-6zM600 280h7v1h-7zM600 677h7v3h-7zM600 277h8v3h-8zM600 276h9v1h-9zM601 680h6v4h-6zM601 684h7v5h-7zM601 274h8v2h-8zM602 689h6v2h-6zM602 691h7v7h-7zM602 273h8v1h-8zM603 271h7v2h-7zM603 698h7v37h-7zM603 735h8v5h-8zM604 270h7v1h-7zM604 740h7v49h-7zM604 789h8v6h-8zM605 269h6v1h-6zM605 268h7v1h-7zM605 795h7v49h-7zM605 844h8v6h-8zM606 267h7v1h-7zM606 850h7v23h-7zM607 266h6v1h-6zM607 265h7v1h-7zM607 251h9v3h-9zM607 250h10v1h-10zM608 263h7v2h-7zM608 254h8v3h-8zM608 262h8v1h-8zM609 257h7v5h-7zM610 873h3v1h-3zM660 250h4v1h-4zM714 248h5v2h-5zM715 246h5v2h-5zM716 245h5v1h-5zM717 244h5v1h-5zM718 243h5v1h-5zM719 242h5v1h-5zM720 241h5v1h-5zM721 240h5v1h-5zM722 239h6v1h-6zM723 238h6v1h-6zM724 237h8v1h-8zM725 236h19v1h-19zM726 235h20v1h-20zM728 234h19v1h-19zM729 233h20v1h-20zM732 232h19v1h-19zM738 237h4v1h-4zM741 231h12v1h-12zM745 230h9v1h-9zM747 229h9v1h-9zM749 228h9v1h-9zM751 227h8v1h-8zM754 226h7v1h-7zM756 225h7v1h-7zM758 224h6v1h-6z"/>
<path fill="#00803a" d="M531 692h2v1h-2zM531 693h18v1h-18zM532 694h20v1h-20zM532 695h22v1h-22zM532 696h25v1h-25zM532 697h27v1h-27zM532 704h27v2h-27zM532 700h28v4h-28zM532 706h28v6h-28zM532 698h29v2h-29zM532 712h29v4h-29zM532 716h30v1h-30zM533 717h29v2h-29zM533 719h30v4h-30zM533 723h31v2h-31zM533 725h32v2h-32zM533 727h33v1h-33zM533 728h34v2h-34zM533 730h35v1h-35zM533 731h36v2h-36zM533 733h37v4h-37zM533 737h70v3h-70zM534 740h70v47h-70zM535 550h1v1h-1zM535 549h2v1h-2zM535 548h4v1h-4zM535 547h6v1h-6zM535 546h8v1h-8zM535 545h10v1h-10zM535 544h12v1h-12zM535 543h14v1h-14zM535 542h16v1h-16zM535 541h18v1h-18zM535 540h20v1h-20zM535 539h22v1h-22zM535 538h24v1h-24zM535 537h26v1h-26zM535 787h69v8h-69zM535 795h70v39h-70zM536 536h27v1h-27zM536 880h33v1h-33zM536 879h36v1h-36zM536 878h38v1h-38zM536 877h41v1h-41zM536 876h44v1h-44zM536 875h46v1h-46zM536 874h49v1h-49zM536 873h51v1h-51zM536 872h54v1h-54zM536 871h56v1h-56zM536 834h69v16h-69zM536 850h70v21h-70zM537 892h2v1h-2zM537 891h4v1h-4zM537 890h7v1h-7zM537 889h9v1h-9zM537 888h12v1h-12zM537 887h15v1h-15zM537 886h17v1h-17zM537 885h20v1h-20zM537 884h22v1h-22zM537 883h25v1h-25zM537 882h27v1h-27zM537 881h30v1h-30zM538 535h27v1h-27zM541 534h26v1h-26zM543 533h25v1h-25zM546 532h23v1h-23zM548 531h22v1h-22zM550 530h21v1h-21zM552 529h20v1h-20zM554 528h19v1h-19zM555 527h19v1h-19zM557 526h18v1h-18zM559 525h16v1h-16zM560 524h16v1h-16zM562 523h15v1h-15zM564 522h14v1h-14zM565 521h14v1h-14zM566 520h14v1h-14zM567 519h14v1h-14zM568 518h14v1h-14zM569 517h15v1h-15zM570 516h15v1h-15zM571 515h16v1h-16zM572 514h16v1h-16zM573 513h16v1h-16zM573 736h30v1h-30zM574 512h17v1h-17zM575 511h16v1h-16zM575 735h28v1h-28zM576 510h15v1h-15zM576 733h27v2h-27zM577 509h14v1h-14zM577 731h26v2h-26zM578 507h13v2h-13zM578 729h25v2h-25zM579 506h12v1h-12zM579 505h13v1h-13zM579 726h24v3h-24zM580 503h12v2h-12zM580 722h23v4h-23zM581 501h11v2h-11zM581 717h22v5h-22zM582 499h10v2h-10zM582 714h21v3h-21zM583 497h9v2h-9zM583 712h20v2h-20zM584 496h8v1h-8zM584 495h9v1h-9zM584 710h19v2h-19zM585 493h8v2h-8zM585 708h18v2h-18zM586 491h7v2h-7zM586 706h17v2h-17zM587 487h6v4h-6zM587 704h16v2h-16zM588 484h5v3h-5zM588 703h15v1h-15zM589 481h4v3h-4zM589 480h5v1h-5zM589 676h11v4h-11zM589 680h12v9h-12zM589 689h13v7h-13zM589 701h14v2h-14zM590 477h4v3h-4zM590 696h12v2h-12zM590 698h13v3h-13zM591 473h3v4h-3zM591 613h3v7h-3zM591 620h4v10h-4zM592 462h2v4h-2zM592 469h3v4h-3zM592 466h4v3h-4zM592 630h4v10h-4zM592 640h5v9h-5zM593 461h1v1h-1zM593 438h2v6h-2zM593 456h4v5h-4zM593 649h4v1h-4zM593 448h5v8h-5zM593 650h5v10h-5zM593 436h6v2h-6zM593 444h6v4h-6zM593 660h6v7h-6zM594 416h2v6h-2zM594 426h5v10h-5zM594 667h5v3h-5zM594 422h6v4h-6zM594 670h6v6h-6zM595 415h1v1h-1zM595 463h1v3h-1zM595 391h2v9h-2zM595 461h2v2h-2zM595 404h5v11h-5zM595 388h6v3h-6zM595 400h6v4h-6zM596 373h2v5h-2zM596 438h3v6h-3zM596 382h5v6h-5zM596 378h6v4h-6zM597 369h1v4h-1zM597 415h3v7h-3zM597 871h9v1h-9zM598 391h3v9h-3zM598 365h4v3h-4zM599 361h3v4h-3zM599 368h3v10h-3zM599 321h4v2h-4zM599 350h4v11h-4zM600 310h3v11h-3zM600 323h3v27h-3zM600 305h4v5h-4zM600 302h5v3h-5zM600 294h6v8h-6zM600 290h7v4h-7zM601 289h7v1h-7zM601 288h8v1h-8zM602 287h7v1h-7zM603 286h7v1h-7zM603 285h8v1h-8zM604 872h2v1h-2zM604 284h7v1h-7zM605 283h7v1h-7zM606 282h6v1h-6zM606 281h7v1h-7zM607 280h6v1h-6zM608 277h6v3h-6zM609 274h5v3h-5zM610 271h5v3h-5zM611 270h5v1h-5zM611 269h6v1h-6zM612 268h6v1h-6zM613 266h6v2h-6zM614 265h6v1h-6zM615 264h5v1h-5zM615 263h6v1h-6zM616 262h5v1h-5zM616 260h6v2h-6zM616 259h7v1h-7zM616 257h8v2h-8zM616 256h9v1h-9zM616 255h10v1h-10zM616 254h13v1h-13zM616 253h61v1h-61zM616 252h62v1h-62zM616 251h63v1h-63zM617 250h43v1h-43zM634 254h42v1h-42zM638 255h37v1h-37zM642 256h31v1h-31zM649 257h23v1h-23zM656 258h14v1h-14zM664 250h16v1h-16zM719 248h5v2h-5zM720 247h4v1h-4zM720 246h6v1h-6zM721 245h7v1h-7zM722 244h8v1h-8zM723 243h9v1h-9zM724 242h11v1h-11zM725 241h11v1h-11zM726 240h11v1h-11zM728 239h11v1h-11zM729 238h12v1h-12zM732 237h6v1h-6z"/>
<path fill="#2a7d00" d="M531 646h25v1h-25zM531 647h28v1h-28zM531 648h33v1h-33zM531 676h58v16h-58zM531 649h62v18h-62zM531 667h63v9h-63zM532 639h4v1h-4zM532 640h7v1h-7zM532 641h10v1h-10zM532 642h12v1h-12zM532 643h16v1h-16zM532 644h20v1h-20zM532 645h22v1h-22zM533 588h2v1h-2zM533 585h3v3h-3zM533 582h4v3h-4zM533 579h5v3h-5zM533 576h6v3h-6zM533 692h56v1h-56zM534 574h6v2h-6zM534 572h7v2h-7zM534 570h8v2h-8zM534 569h9v1h-9zM534 567h10v2h-10zM534 565h11v2h-11zM534 564h12v1h-12zM534 562h13v2h-13zM534 561h14v1h-14zM534 559h15v2h-15zM534 558h16v1h-16zM534 556h17v2h-17zM534 555h18v1h-18zM534 554h19v1h-19zM534 553h20v1h-20zM535 552h19v1h-19zM535 551h20v1h-20zM536 550h20v1h-20zM537 549h19v1h-19zM539 548h18v1h-18zM541 547h17v1h-17zM543 546h16v1h-16zM545 545h14v1h-14zM547 544h13v1h-13zM549 543h12v1h-12zM549 693h40v1h-40zM551 542h11v1h-11zM552 694h37v1h-37zM553 541h10v1h-10zM554 695h35v1h-35zM555 540h9v1h-9zM557 539h8v1h-8zM557 696h33v1h-33zM559 538h7v1h-7zM559 704h28v2h-28zM559 697h31v1h-31zM560 710h24v2h-24zM560 708h25v2h-25zM560 706h26v2h-26zM560 703h28v1h-28zM560 701h29v2h-29zM560 700h30v1h-30zM561 537h6v1h-6zM561 714h21v2h-21zM561 712h22v2h-22zM561 698h29v2h-29zM562 717h19v2h-19zM562 716h20v1h-20zM563 536h5v1h-5zM563 722h17v1h-17zM563 719h18v3h-18zM564 723h16v2h-16zM565 535h4v1h-4zM565 726h14v1h-14zM565 725h15v1h-15zM566 727h13v1h-13zM567 534h3v1h-3zM567 729h11v1h-11zM567 728h12v1h-12zM568 533h2v1h-2zM568 730h10v1h-10zM568 648h24v1h-24zM569 532h2v1h-2zM569 731h8v2h-8zM570 531h2v1h-2zM570 736h3v1h-3zM570 735h5v1h-5zM570 733h6v2h-6zM571 530h2v1h-2zM572 529h2v1h-2zM572 647h20v1h-20zM573 528h2v1h-2zM574 527h2v1h-2zM575 526h2v1h-2zM575 525h3v1h-3zM575 646h17v1h-17zM576 524h3v1h-3zM576 645h16v1h-16zM577 523h3v1h-3zM578 522h3v1h-3zM578 644h14v1h-14zM579 521h3v1h-3zM579 643h13v1h-13zM580 520h3v1h-3zM580 642h12v1h-12zM581 519h3v1h-3zM581 641h11v1h-11zM582 518h3v1h-3zM582 640h10v1h-10zM583 639h9v1h-9zM584 517h2v1h-2zM585 516h2v1h-2zM585 638h7v1h-7zM587 515h2v1h-2zM587 637h5v1h-5zM588 514h1v1h-1zM588 613h3v17h-3zM588 630h4v7h-4zM589 513h1v1h-1zM591 508h1v2h-1zM591 506h2v2h-2zM592 496h1v10h-1zM593 481h1v4h-1zM594 476h1v3h-1zM594 473h2v3h-2zM595 470h2v3h-2zM595 469h3v1h-3zM596 465h2v4h-2zM596 463h3v2h-3zM597 460h2v3h-2zM597 456h3v4h-3zM598 451h3v5h-3zM598 448h4v3h-4zM599 433h3v15h-3zM599 426h4v7h-4zM600 411h3v15h-3zM600 404h4v7h-4zM601 389h3v15h-3zM601 382h4v7h-4zM602 367h3v15h-3zM602 361h4v6h-4zM603 326h3v35h-3zM603 320h4v6h-4zM603 314h5v6h-5zM603 310h6v4h-6zM604 307h5v3h-5zM604 305h6v2h-6zM605 302h5v3h-5zM606 300h4v2h-4zM606 295h5v5h-5zM606 294h6v1h-6zM607 293h5v1h-5zM607 291h6v2h-6zM607 290h7v1h-7zM608 289h6v1h-6zM609 287h6v2h-6zM610 286h5v1h-5zM611 284h5v2h-5zM612 282h5v2h-5zM613 280h5v2h-5zM614 274h4v6h-4zM615 271h4v3h-4zM616 270h4v1h-4zM617 269h4v1h-4zM618 268h4v1h-4zM619 266h4v2h-4zM620 264h4v2h-4zM621 263h4v1h-4zM621 262h7v1h-7zM622 261h60v1h-60zM622 260h62v1h-62zM623 259h63v1h-63zM624 257h25v1h-25zM624 258h32v1h-32zM625 256h17v1h-17zM626 255h12v1h-12zM629 254h5v1h-5zM631 262h49v1h-49zM634 263h44v1h-44zM636 264h39v1h-39zM639 265h34v1h-34zM663 266h4v1h-4zM670 258h18v1h-18zM672 257h19v1h-19zM673 256h20v1h-20zM675 255h18v1h-18zM676 254h17v1h-17zM677 253h16v1h-16zM678 252h15v1h-15zM679 251h14v1h-14zM680 250h13v1h-13zM724 249h1v1h-1zM724 248h3v1h-3zM724 247h4v1h-4zM726 246h3v1h-3zM728 245h3v1h-3zM730 244h2v1h-2zM732 243h1v1h-1z"/>
<path fill="#82b400" d="M532 623h13v1h-13zM532 624h14v1h-14zM532 625h15v1h-15zM532 626h16v1h-16zM532 627h17v1h-17zM532 628h18v1h-18zM532 629h19v1h-19zM532 630h21v1h-21zM532 631h23v1h-23zM532 632h25v1h-25zM532 633h27v1h-27zM532 634h29v1h-29zM532 635h32v1h-32zM532 638h53v1h-53zM532 637h55v1h-55zM532 636h56v1h-56zM533 600h6v11h-6zM533 597h7v3h-7zM533 611h7v3h-7zM533 595h8v2h-8zM533 614h8v3h-8zM533 594h9v1h-9zM533 617h9v2h-9zM533 592h10v2h-10zM533 619h10v2h-10zM533 591h11v1h-11zM533 621h11v2h-11zM533 590h12v1h-12zM533 589h13v1h-13zM535 588h11v1h-11zM536 586h11v2h-11zM536 585h12v1h-12zM536 639h47v1h-47zM537 584h11v1h-11zM537 582h12v2h-12zM538 580h12v2h-12zM538 579h13v1h-13zM539 578h12v1h-12zM539 576h13v2h-13zM539 640h43v1h-43zM540 574h13v2h-13zM541 573h12v1h-12zM541 572h13v1h-13zM542 571h12v1h-12zM542 570h13v1h-13zM542 641h39v1h-39zM543 569h12v1h-12zM544 567h12v2h-12zM544 642h36v1h-36zM545 565h12v2h-12zM546 564h12v1h-12zM547 563h11v1h-11zM547 562h12v1h-12zM548 561h11v1h-11zM548 643h31v1h-31zM549 559h11v2h-11zM550 558h11v1h-11zM551 557h10v1h-10zM551 556h11v1h-11zM552 555h11v1h-11zM552 644h26v1h-26zM553 554h11v1h-11zM554 553h11v1h-11zM554 552h12v1h-12zM554 645h22v1h-22zM555 551h12v1h-12zM556 550h12v1h-12zM556 549h13v1h-13zM556 646h19v1h-19zM557 548h13v1h-13zM558 547h12v1h-12zM559 546h12v1h-12zM559 545h13v1h-13zM559 647h13v1h-13zM560 544h13v1h-13zM561 543h13v1h-13zM562 542h13v1h-13zM563 541h13v1h-13zM564 648h4v1h-4zM564 540h13v1h-13zM565 539h13v1h-13zM566 538h13v1h-13zM566 635h22v1h-22zM567 537h13v1h-13zM568 536h13v1h-13zM569 535h13v1h-13zM569 634h19v1h-19zM570 533h13v2h-13zM571 532h13v1h-13zM571 633h17v1h-17zM572 531h13v1h-13zM572 632h16v1h-16zM573 530h12v1h-12zM574 529h12v1h-12zM574 631h14v1h-14zM575 528h12v1h-12zM576 527h12v1h-12zM576 630h12v1h-12zM577 526h11v1h-11zM577 629h11v1h-11zM578 628h10v1h-10zM578 525h11v1h-11zM579 524h11v1h-11zM580 627h8v1h-8zM580 523h11v1h-11zM581 522h10v1h-10zM582 626h6v1h-6zM582 521h10v1h-10zM583 520h9v1h-9zM584 625h4v1h-4zM584 519h8v1h-8zM585 518h7v1h-7zM586 517h6v1h-6zM587 624h1v1h-1zM587 516h5v1h-5zM589 514h3v2h-3zM590 513h2v1h-2zM591 510h1v3h-1zM593 493h1v7h-1zM593 486h2v7h-2zM593 485h3v1h-3zM594 480h2v5h-2zM594 479h3v1h-3zM595 477h2v2h-2zM595 476h3v1h-3zM596 473h2v3h-2zM597 470h2v3h-2zM598 466h2v4h-2zM598 465h3v1h-3zM599 463h2v2h-2zM599 460h3v3h-3zM600 459h2v1h-2zM600 456h3v3h-3zM601 455h2v1h-2zM601 452h3v3h-3zM601 451h4v1h-4zM602 437h3v14h-3zM602 433h4v4h-4zM603 415h3v18h-3zM603 411h4v4h-4zM604 393h3v18h-3zM604 389h4v4h-4zM605 372h3v17h-3zM605 367h4v5h-4zM606 336h3v31h-3zM606 326h4v10h-4zM607 324h3v2h-3zM607 321h4v3h-4zM607 320h5v1h-5zM608 318h4v2h-4zM608 315h5v3h-5zM608 314h6v1h-6zM609 307h5v7h-5zM610 304h4v3h-4zM610 300h5v4h-5zM611 297h4v3h-4zM611 295h5v2h-5zM612 294h4v1h-4zM612 293h5v1h-5zM613 292h4v1h-4zM613 291h5v1h-5zM614 289h4v2h-4zM615 288h3v1h-3zM615 286h4v2h-4zM616 285h3v1h-3zM616 284h4v1h-4zM617 282h3v2h-3zM618 278h3v4h-3zM618 276h4v2h-4zM618 275h5v1h-5zM618 274h6v1h-6zM619 273h6v1h-6zM619 272h59v1h-59zM619 271h62v1h-62zM620 270h65v1h-65zM621 269h67v1h-67zM622 268h70v1h-70zM623 266h40v1h-40zM623 267h70v1h-70zM624 264h12v1h-12zM624 265h15v1h-15zM625 263h9v1h-9zM628 262h3v1h-3zM632 273h44v1h-44zM638 274h8v1h-8zM655 274h18v1h-18zM662 275h7v1h-7zM667 266h26v1h-26zM673 265h20v1h-20zM675 264h18v1h-18zM678 263h15v1h-15zM680 262h13v1h-13zM682 261h11v1h-11zM684 260h9v1h-9zM686 259h7v1h-7zM688 258h5v1h-5zM691 257h2v1h-2z"/>
<path fill="#d6e600" d="M539 600h17v1h-17zM539 601h18v2h-18zM539 603h19v2h-19zM539 605h20v2h-20zM539 607h21v2h-21zM539 609h22v1h-22zM539 610h23v1h-23zM540 597h17v3h-17zM540 611h23v1h-23zM540 612h25v1h-25zM540 613h27v1h-27zM541 596h16v1h-16zM541 595h17v1h-17zM541 614h30v1h-30zM541 615h47v2h-47zM542 594h16v1h-16zM542 617h46v2h-46zM543 592h16v2h-16zM543 619h45v2h-45zM544 591h16v1h-16zM544 621h44v2h-44zM545 590h15v1h-15zM545 623h43v1h-43zM546 588h15v2h-15zM546 624h41v1h-41zM547 586h15v2h-15zM547 625h37v1h-37zM548 585h14v1h-14zM548 584h15v1h-15zM548 626h34v1h-34zM549 582h14v2h-14zM549 627h31v1h-31zM550 580h14v2h-14zM550 628h28v1h-28zM551 579h13v1h-13zM551 578h14v1h-14zM551 629h26v1h-26zM552 576h13v2h-13zM553 573h13v3h-13zM553 630h23v1h-23zM554 571h13v2h-13zM555 569h13v2h-13zM555 631h19v1h-19zM556 567h13v2h-13zM557 566h12v1h-12zM557 565h13v1h-13zM557 632h15v1h-15zM558 564h12v1h-12zM558 563h13v1h-13zM559 562h12v1h-12zM559 633h12v1h-12zM559 561h13v1h-13zM560 560h12v1h-12zM560 559h13v1h-13zM561 634h8v1h-8zM561 557h12v2h-12zM562 556h12v1h-12zM563 555h11v1h-11zM564 635h2v1h-2zM564 554h11v1h-11zM565 553h11v1h-11zM566 552h10v1h-10zM567 551h10v1h-10zM568 550h10v1h-10zM569 549h9v1h-9zM570 548h9v1h-9zM570 547h10v1h-10zM571 546h9v1h-9zM572 545h9v1h-9zM573 544h8v1h-8zM574 543h8v1h-8zM574 614h14v1h-14zM575 542h8v1h-8zM576 541h7v1h-7zM577 540h7v1h-7zM578 539h7v1h-7zM579 538h6v1h-6zM580 537h6v1h-6zM580 613h8v1h-8zM581 536h6v1h-6zM582 535h5v1h-5zM583 534h5v1h-5zM583 533h6v1h-6zM584 612h4v1h-4zM584 532h6v1h-6zM585 530h6v2h-6zM586 529h7v1h-7zM587 611h1v1h-1zM587 528h6v1h-6zM588 526h5v2h-5zM589 597h2v1h-2zM589 525h4v1h-4zM589 598h4v1h-4zM589 599h6v1h-6zM589 600h72v1h-72zM589 601h77v1h-77zM589 602h81v1h-81zM589 603h86v1h-86zM589 604h90v1h-90zM590 524h4v1h-4zM591 532h1v3h-1zM591 522h3v2h-3zM592 521h2v1h-2zM592 513h3v8h-3zM592 508h4v5h-4zM593 506h3v2h-3zM593 500h4v6h-4zM593 605h87v1h-87zM594 498h3v2h-3zM594 493h4v5h-4zM595 490h3v3h-3zM595 486h4v4h-4zM596 483h3v3h-3zM596 480h4v3h-4zM597 479h3v1h-3zM597 477h4v2h-4zM597 599h59v1h-59zM598 476h3v1h-3zM598 473h4v3h-4zM599 470h4v3h-4zM599 598h52v1h-52zM600 467h4v3h-4zM600 466h5v1h-5zM601 464h4v2h-4zM601 463h5v1h-5zM601 597h46v1h-46zM601 606h79v1h-79zM602 461h4v2h-4zM602 459h5v2h-5zM603 458h4v1h-4zM603 455h5v3h-5zM603 596h39v1h-39zM604 454h4v1h-4zM604 452h5v2h-5zM604 595h33v1h-33zM605 451h4v1h-4zM605 437h5v14h-5zM606 435h4v2h-4zM606 415h5v20h-5zM606 594h27v1h-27zM607 413h4v2h-4zM607 393h5v20h-5zM608 391h4v2h-4zM608 372h5v19h-5zM608 593h18v1h-18zM608 607h72v1h-72zM609 369h4v3h-4zM609 336h5v33h-5zM610 331h4v5h-4zM610 324h5v7h-5zM610 592h6v1h-6zM611 322h5v2h-5zM611 321h6v1h-6zM612 319h5v2h-5zM612 318h6v1h-6zM613 316h5v2h-5zM613 315h6v1h-6zM614 304h5v3h-5zM614 314h5v1h-5zM614 307h6v7h-6zM615 297h4v7h-4zM616 294h4v3h-4zM616 608h64v1h-64zM617 293h3v1h-3zM617 292h4v1h-4zM618 289h3v3h-3zM618 288h4v1h-4zM619 286h4v2h-4zM619 285h5v1h-5zM620 284h5v1h-5zM620 283h6v1h-6zM620 282h64v1h-64zM621 281h65v1h-65zM621 280h67v1h-67zM621 279h69v1h-69zM621 278h72v1h-72zM622 276h71v2h-71zM623 275h39v1h-39zM623 609h57v1h-57zM624 274h14v1h-14zM625 273h7v1h-7zM631 610h49v1h-49zM634 283h48v1h-48zM636 284h43v1h-43zM638 611h42v1h-42zM639 285h38v1h-38zM646 274h9v1h-9zM646 612h34v1h-34zM653 613h27v1h-27zM661 286h12v1h-12zM661 614h19v1h-19zM668 615h12v1h-12zM669 275h24v1h-24zM673 274h20v1h-20zM676 616h4v1h-4zM676 273h17v1h-17zM678 272h15v1h-15zM681 271h12v1h-12zM685 270h8v1h-8zM688 269h5v1h-5zM692 268h1v1h-1z"/>
<path fill="#ffee00" d="M556 600h33v1h-33zM557 597h32v3h-32zM557 601h32v2h-32zM557 596h46v1h-46zM558 603h31v2h-31zM558 595h46v1h-46zM558 594h48v1h-48zM559 605h34v1h-34zM559 606h42v1h-42zM559 593h49v1h-49zM559 592h51v1h-51zM560 607h48v1h-48zM560 608h56v1h-56zM560 590h122v2h-122zM561 609h62v1h-62zM561 588h121v2h-121zM562 610h69v1h-69zM562 585h120v3h-120zM563 611h24v1h-24zM563 582h104v1h-104zM563 583h109v1h-109zM563 584h114v1h-114zM564 579h90v1h-90zM564 580h93v1h-93zM564 581h98v1h-98zM565 612h19v1h-19zM565 576h80v1h-80zM565 577h83v1h-83zM565 578h86v1h-86zM566 573h71v1h-71zM566 574h74v1h-74zM566 575h76v1h-76zM567 613h13v1h-13zM567 571h66v1h-66zM567 572h68v1h-68zM568 569h60v1h-60zM568 570h62v1h-62zM569 566h54v1h-54zM569 567h55v1h-55zM569 568h57v1h-57zM570 564h50v1h-50zM570 565h51v1h-51zM571 614h3v1h-3zM571 562h47v1h-47zM571 563h48v1h-48zM572 560h44v1h-44zM572 561h45v1h-45zM573 557h41v1h-41zM573 558h42v2h-42zM574 555h38v1h-38zM574 556h39v1h-39zM575 554h37v1h-37zM576 552h36v2h-36zM577 551h34v1h-34zM578 549h33v2h-33zM579 548h32v1h-32zM580 546h32v2h-32zM581 544h31v2h-31zM582 543h30v1h-30zM583 541h29v2h-29zM584 540h28v1h-28zM585 538h27v2h-27zM586 537h26v1h-26zM587 535h25v2h-25zM588 534h3v1h-3zM588 611h50v1h-50zM588 612h58v1h-58zM589 533h2v1h-2zM590 532h1v1h-1zM591 597h10v1h-10zM591 530h21v2h-21zM592 532h20v3h-20zM593 598h6v1h-6zM593 525h20v5h-20zM594 521h19v4h-19zM595 599h2v1h-2zM595 513h18v8h-18zM596 512h17v1h-17zM596 506h18v6h-18zM597 498h17v8h-17zM598 495h16v3h-16zM598 490h17v5h-17zM599 483h16v7h-16zM600 479h15v4h-15zM601 477h14v2h-14zM601 476h15v1h-15zM602 473h14v3h-14zM603 470h13v3h-13zM604 467h12v3h-12zM605 464h11v3h-11zM606 461h10v3h-10zM607 458h9v3h-9zM608 456h8v2h-8zM608 454h9v2h-9zM609 451h8v3h-8zM610 436h7v15h-7zM610 435h8v1h-8zM611 415h7v20h-7zM611 413h8v2h-8zM612 394h7v19h-7zM612 391h8v3h-8zM613 374h7v17h-7zM613 369h8v5h-8zM614 345h7v24h-7zM614 331h8v14h-8zM615 326h7v5h-7zM615 324h8v2h-8zM616 322h8v2h-8zM616 592h66v1h-66zM617 320h8v2h-8zM617 319h9v1h-9zM618 317h8v2h-8zM618 316h9v1h-9zM619 299h5v1h-5zM619 297h6v2h-6zM619 300h6v2h-6zM619 302h7v2h-7zM619 304h8v3h-8zM619 314h8v2h-8zM620 296h6v1h-6zM620 307h7v1h-7zM620 295h8v1h-8zM620 308h8v6h-8zM620 293h73v2h-73zM621 289h72v4h-72zM622 288h71v1h-71zM623 286h38v1h-38zM623 287h70v1h-70zM624 285h15v1h-15zM625 284h11v1h-11zM626 283h8v1h-8zM626 593h56v1h-56zM630 295h63v1h-63zM633 594h49v1h-49zM633 296h60v1h-60zM635 297h58v1h-58zM636 298h57v1h-57zM637 595h45v1h-45zM638 299h55v1h-55zM641 300h38v1h-38zM642 596h40v1h-40zM647 597h35v1h-35zM651 598h31v1h-31zM656 599h26v1h-26zM661 600h21v1h-21zM665 301h3v1h-3zM666 601h16v1h-16zM670 602h12v1h-12zM673 286h20v1h-20zM675 603h7v1h-7zM677 285h16v1h-16zM679 604h3v1h-3zM679 284h14v1h-14zM680 609h1v4h-1zM680 605h2v4h-2zM682 283h11v1h-11zM684 282h9v1h-9zM686 281h7v1h-7zM688 280h5v1h-5zM690 279h3v1h-3z"/>
<path fill="#ffcb00" d="M611 548h72v4h-72zM612 537h71v11h-71zM612 552h71v4h-71zM612 530h72v7h-72zM613 556h70v1h-70zM613 513h71v17h-71zM613 512h72v1h-72zM614 557h69v1h-69zM614 495h71v17h-71zM615 558h68v2h-68zM615 489h70v6h-70zM615 477h71v12h-71zM616 560h67v1h-67zM616 466h70v11h-70zM616 456h71v10h-71zM617 561h66v1h-66zM617 442h70v14h-70zM617 436h71v6h-71zM618 562h65v1h-65zM618 424h70v12h-70zM618 415h71v9h-71zM619 563h64v1h-64zM619 412h70v3h-70zM619 394h71v18h-71zM620 564h63v1h-63zM620 374h71v20h-71zM621 565h62v1h-62zM621 370h70v4h-70zM621 346h71v24h-71zM621 345h72v1h-72zM622 326h71v19h-71zM623 566h60v1h-60zM623 324h70v2h-70zM624 299h14v1h-14zM624 567h59v1h-59zM624 322h69v2h-69zM625 297h10v1h-10zM625 298h11v1h-11zM625 300h16v1h-16zM625 301h40v1h-40zM625 320h68v2h-68zM626 296h7v1h-7zM626 568h57v1h-57zM626 302h67v2h-67zM626 317h67v3h-67zM627 304h66v4h-66zM627 314h66v3h-66zM628 295h2v1h-2zM628 569h55v1h-55zM628 308h65v6h-65zM630 570h53v1h-53zM633 571h50v1h-50zM635 572h48v1h-48zM637 573h46v1h-46zM640 574h43v1h-43zM642 575h41v1h-41zM645 576h38v1h-38zM648 577h35v1h-35zM651 578h32v1h-32zM654 579h29v1h-29zM657 580h26v1h-26zM662 581h21v1h-21zM667 582h16v1h-16zM668 301h25v1h-25zM672 583h11v1h-11zM677 584h6v1h-6zM679 300h14v1h-14z"/>
</g>
<path fill="none" stroke="#000" stroke-width="1.0" stroke-linejoin="round" shape-rendering="crispEdges" d="M577.2 246.3L728.3 246M584.7 243.2L732.7 243.2M592.1 240.1L737 240.5M599.6 237L741.3 237.8M607.1 233.9L745.7 235M614.5 230.8L750 232.2M622 227.7L754.3 229.5M629.4 224.6L758.7 226.8M577 249L644.2 221.5M584.4 249L651.5 221.5M591.6 249L658.8 221.5M599 249L666.1 221.5M606.2 249L673.4 221.5M613.5 249L680.7 221.5M620.9 249L688 221.5M628.1 249L695.3 221.5M635.5 249L702.6 221.5M642.8 249L709.9 221.5M650 249L717.2 221.5M657.4 249L724.5 221.5M664.6 249L731.8 221.5M672 249L739.1 221.1M679.2 249L746.4 221.1M686.5 249L753.7 221.1M693.9 249L755.4 223.4M701.1 249L755.9 226.3M708.5 249L756.4 229.1M715.8 249L756.9 231.9M723 249L757.4 234.7"/>
<path fill="none" stroke="#000" stroke-width="1.0" stroke-linejoin="round" shape-rendering="crispEdges" d="M569.8 249.4L636.9 221.5L658 217.5L658.5 221.5L763 223.5M569.8 249.4L724 248.8M544.8 261L600.6 248.8M544.2 282.8L600.4 262.4M543.6 306.2L600.1 285.8M542.9 329.6L599.7 309.2M542.3 353L599.3 332.5M541.3 376.5L598.9 355.9M540.3 399.9L597.9 379.3M539.3 423.3L596.9 402.7M538.4 446.8L595.8 426.1M537.4 470.2L594.7 449.4M536.4 493.6L593.7 472.8M535.4 517.1L592.6 496.2M534.8 540.5L591.5 519.6M534.1 563.9L590.5 543M533.4 587.4L589.5 566.3M532.7 610.8L588.4 589.7M532 634.2L588.2 613.1M531.4 657.7L588.5 636.5M531.3 681.1L588.7 659.9M532.1 704.5L589.1 683.2M532.8 728L589.5 706.6M533.5 751.4L589.9 730M534.2 774.8L590.3 753.4M534.9 798.3L590.8 776.8M535.4 821.7L591.2 800.1M535.7 845.1L591.6 823.5M536.1 868.5L592.1 846.9M536.5 891.5L592.8 869.8M544.8 261L544.2 282.8L543.6 306.2L542.9 329.6L542.3 353L541.3 376.5L540.3 399.9L539.3 423.3L538.4 446.8L537.4 470.2L536.4 493.6L535.4 517.1L534.8 540.5L534.1 563.9L533.4 587.4L532.7 610.8L532 634.2L531.4 657.7L531.3 681.1L532.1 704.5L532.8 728L533.5 751.4L534.2 774.8L534.9 798.3L535.4 821.7L535.7 845.1L536.1 868.5L536.5 891.5M558.7 257.9L558.2 277.7L557.7 301.1L557.1 324.5L556.5 347.9L555.7 371.3L554.7 394.8L553.7 418.2L552.7 441.6L551.7 465L550.7 488.4L549.7 511.9L548.9 535.3L548.2 558.7L547.4 582.1L546.7 605.5L546.1 628.9L545.6 652.4L545.7 675.8L546.3 699.2L547 722.6L547.6 746L548.3 769.5L548.9 792.9L549.3 816.3L549.7 839.7L550.1 863.1L550.6 886.1M572.7 254.9L572.3 272.6L571.8 296L571.3 319.4L570.8 342.8L570.1 366.2L569.1 389.6L568.1 413L567.1 436.4L566 459.8L565 483.2L564 506.6L563.1 530L562.3 553.4L561.4 576.9L560.6 600.3L560.1 623.7L559.9 647.1L560 670.5L560.6 693.9L561.1 717.3L561.7 740.7L562.3 764.1L562.9 787.5L563.3 810.9L563.7 834.3L564.1 857.7L564.6 880.6M586.6 251.8L586.3 267.5L585.9 290.9L585.5 314.3L585.1 337.7L584.5 361.1L583.5 384.5L582.5 407.8L581.4 431.2L580.4 454.6L579.3 478L578.3 501.4L577.3 524.8L576.4 548.2L575.5 571.6L574.5 595L574.1 618.4L574.2 641.8L574.4 665.2L574.8 688.6L575.3 712L575.8 735.3L576.3 758.7L576.8 782.1L577.2 805.5L577.7 828.9L578.1 852.3L578.7 875.2M600.6 248.8L600.4 262.4L600.1 285.8L599.7 309.2L599.3 332.5L598.9 355.9L597.9 379.3L596.9 402.7L595.8 426.1L594.7 449.4L593.7 472.8L592.6 496.2L591.5 519.6L590.5 543L589.5 566.3L588.4 589.7L588.2 613.1L588.5 636.5L588.7 659.9L589.1 683.2L589.5 706.6L589.9 730L590.3 753.4L590.8 776.8L591.2 800.1L591.6 823.5L592.1 846.9L592.8 869.8M544.8 261L569.8 249.4L600.6 248.8M600.6 248.8L692.1 248.8M600.4 262.4L692.2 262.7M600.1 285.8L692.3 286.5M599.7 309.2L692.4 310.4M599.3 332.5L692.2 334.3M598.9 355.9L690.7 358.1M597.9 379.3L689.6 382M596.9 402.7L688.5 405.8M595.8 426.1L687.4 429.7M594.7 449.4L686.3 453.5M593.7 472.8L685.2 477.4M592.6 496.2L684.2 501.3M591.5 519.6L683.1 525.1M590.5 543L682.4 549M589.5 566.3L681.7 572.8M588.4 589.7L681 596.7M588.2 613.1L680.2 620.6M588.5 636.5L679.5 644.4M588.7 659.9L678.8 668.3M589.1 683.2L678.5 692.1M589.5 706.6L678.8 716M589.9 730L679 739.8M590.3 753.4L679.2 763.7M590.8 776.8L679.5 787.6M591.2 800.1L679.7 811.4M591.6 823.5L680 835.3M592.1 846.9L680.2 859.1M592.8 869.8L681.3 882.5M621.6 248.8L621.4 262.5L621.1 286L620.7 309.4L620.3 332.9L619.9 356.4L618.9 379.9L617.9 403.4L616.8 426.9L615.7 450.4L614.7 473.9L613.6 497.4L612.5 520.8L611.5 544.3L610.5 567.8L609.4 591.3L609.2 614.8L609.5 638.3L609.7 661.8L610.1 685.3L610.5 708.8L610.9 732.3L611.3 755.8L611.8 779.3L612.2 802.8L612.6 826.3L613.1 849.8L613.8 872.8M642.4 248.8L642.2 262.5L641.9 286.1L641.5 309.7L641.1 333.3L640.7 356.9L639.7 380.5L638.7 404.1L637.6 427.7L636.5 451.3L635.5 474.9L634.4 498.5L633.3 522.1L632.3 545.7L631.3 569.3L630.2 592.9L630 616.5L630.3 640.1L630.5 663.8L630.9 687.4L631.3 711L631.7 734.6L632.1 758.2L632.6 781.8L633 805.5L633.4 829.1L633.9 852.7L634.6 875.8M663.2 248.8L663 262.6L662.7 286.3L662.3 310L661.9 333.7L661.5 357.4L660.5 381.1L659.5 404.8L658.4 428.5L657.3 452.2L656.3 476L655.2 499.7L654.1 523.4L653.1 547.1L652.1 570.7L651 594.4L650.8 618.2L651.1 641.9L651.3 665.7L651.7 689.5L652.1 713.2L652.5 736.9L652.9 760.6L653.4 784.4L653.8 808.1L654.2 831.9L654.7 855.6L655.4 878.8M684.1 248.8L683.9 262.7L683.6 286.5L683.2 310.3L682.8 334.1L682.4 357.9L681.4 381.7L680.4 405.5L679.3 429.4L678.2 453.2L677.2 477L676.1 500.8L675 524.6L674 548.4L673 572.2L671.9 596L671.7 619.9L672 643.8L672.2 667.7L672.6 691.5L673 715.4L673.4 739.2L673.8 763.1L674.3 786.9L674.7 810.8L675.1 834.6L675.6 858.5L676.3 881.8"/>
<g shape-rendering="crispEdges">
<path fill="#1a00dc" d="M571 625h8v3h-8zM572 623h6v2h-6zM572 628h6v2h-6zM574 622h2v1h-2zM613 637h14v1h-14zM613 636h16v1h-16zM613 635h17v1h-17zM613 634h18v1h-18zM613 633h19v1h-19zM613 632h20v1h-20zM614 631h20v1h-20zM615 630h19v1h-19zM616 629h18v1h-18zM618 628h16v1h-16zM619 638h6v1h-6zM620 627h14v1h-14zM623 626h10v1h-10zM626 625h6v1h-6z"/>
<path fill="#0000ff" d="M536 621h120v1h-120zM538 620h118v1h-118zM539 622h35v1h-35zM540 619h116v1h-116zM543 623h29v1h-29zM543 618h113v1h-113zM546 617h109v1h-109zM548 624h24v1h-24zM548 616h107v1h-107zM551 615h104v1h-104zM553 625h18v1h-18zM554 614h101v1h-101zM556 613h98v1h-98zM557 626h14v1h-14zM559 612h95v1h-95zM562 627h9v1h-9zM562 611h92v1h-92zM564 610h90v1h-90zM567 628h5v1h-5zM567 609h86v1h-86zM570 608h80v1h-80zM571 629h1v1h-1zM572 607h73v1h-73zM575 606h64v1h-64zM576 630h39v1h-39zM576 622h80v1h-80zM578 629h38v1h-38zM578 628h40v1h-40zM578 605h56v1h-56zM578 623h78v2h-78zM579 627h41v1h-41zM579 626h44v1h-44zM579 625h47v1h-47zM580 604h49v1h-49zM581 631h33v1h-33zM585 632h28v1h-28zM585 603h39v1h-39zM590 633h23v1h-23zM591 602h28v1h-28zM596 634h17v1h-17zM597 601h16v1h-16zM602 635h11v1h-11zM603 600h5v1h-5zM608 636h5v1h-5zM625 639h30v1h-30zM625 638h31v1h-31zM627 637h29v1h-29zM629 636h27v1h-27zM630 640h25v1h-25zM630 635h26v1h-26zM631 634h25v1h-25zM632 625h24v1h-24zM632 633h24v1h-24zM633 626h23v1h-23zM633 632h23v1h-23zM634 627h22v5h-22zM636 641h18v1h-18zM642 642h12v1h-12zM648 643h5v1h-5zM686 465h1v1h-1zM686 464h2v1h-2zM686 460h3v4h-3zM686 454h4v6h-4zM687 445h3v9h-3zM687 440h4v5h-4zM687 436h5v4h-5zM687 433h6v3h-6zM687 427h7v6h-7zM687 424h8v3h-8zM688 420h7v4h-7zM688 415h8v5h-8zM688 410h9v5h-9zM688 406h10v4h-10zM688 404h11v2h-11zM689 402h10v2h-10zM689 397h11v5h-11zM689 393h12v4h-12zM689 391h13v2h-13zM689 389h14v2h-14zM689 388h15v1h-15zM689 386h16v2h-16zM689 385h17v1h-17zM689 384h18v1h-18zM690 383h17v1h-17zM690 381h18v2h-18zM690 379h19v2h-19zM690 377h20v2h-20zM690 376h21v1h-21zM690 374h22v2h-22zM690 373h23v1h-23zM690 372h24v1h-24zM690 371h25v1h-25zM690 370h26v1h-26zM690 369h27v1h-27zM690 368h28v1h-28zM690 367h29v1h-29zM690 366h30v1h-30zM690 365h31v1h-31zM690 364h32v1h-32zM691 355h31v9h-31zM691 352h32v3h-32zM692 280h1v1h-1zM692 279h2v1h-2zM692 277h3v2h-3zM692 276h4v1h-4zM692 275h5v1h-5zM692 260h6v2h-6zM692 274h6v1h-6zM692 262h7v4h-7zM692 268h7v6h-7zM692 266h8v2h-8zM693 351h30v1h-30zM694 259h4v1h-4zM696 350h27v1h-27zM697 349h26v1h-26zM699 348h24v1h-24zM701 347h22v1h-22zM703 346h20v1h-20zM705 345h18v1h-18zM707 344h16v1h-16zM709 343h14v1h-14zM711 342h12v1h-12zM712 341h10v1h-10zM714 340h7v1h-7zM715 428h2v1h-2zM716 427h1v1h-1zM717 339h2v1h-2z"/>
<path fill="#0069ff" d="M652 644h13v1h-13zM653 609h2v1h-2zM653 643h12v1h-12zM654 610h6v1h-6zM654 611h11v1h-11zM654 641h12v2h-12zM654 613h16v1h-16zM654 612h17v1h-17zM655 645h10v1h-10zM655 639h11v2h-11zM655 616h14v2h-14zM655 614h15v2h-15zM656 626h9v11h-9zM656 623h10v3h-10zM656 637h10v2h-10zM656 621h11v2h-11zM656 618h12v3h-12zM659 646h5v1h-5zM662 647h2v1h-2zM685 483h1v2h-1zM685 481h2v2h-2zM685 478h3v3h-3zM685 477h4v1h-4zM685 476h5v1h-5zM685 475h7v1h-7zM685 474h9v1h-9zM686 473h9v1h-9zM686 472h11v1h-11zM686 470h12v2h-12zM686 466h13v4h-13zM687 465h12v1h-12zM688 464h11v1h-11zM689 460h10v4h-10zM690 459h9v1h-9zM690 457h10v2h-10zM690 455h11v2h-11zM690 453h12v2h-12zM690 451h13v2h-13zM690 448h14v3h-14zM690 445h15v3h-15zM691 351h2v1h-2zM691 350h5v1h-5zM691 349h6v1h-6zM691 348h8v1h-8zM691 347h10v1h-10zM691 346h12v1h-12zM691 345h14v1h-14zM691 440h14v5h-14zM691 344h16v1h-16zM692 293h1v1h-1zM692 292h2v1h-2zM692 291h4v1h-4zM692 290h5v1h-5zM692 289h7v1h-7zM692 287h8v2h-8zM692 284h9v3h-9zM692 281h10v3h-10zM692 436h13v4h-13zM692 343h17v1h-17zM692 342h19v1h-19zM692 341h20v1h-20zM692 340h22v1h-22zM692 339h25v1h-25zM693 280h9v1h-9zM693 433h11v3h-11zM694 279h9v1h-9zM694 432h10v1h-10zM694 429h11v3h-11zM694 428h12v1h-12zM694 427h22v1h-22zM695 278h8v1h-8zM695 277h9v1h-9zM695 420h25v7h-25zM695 338h28v1h-28zM696 276h8v1h-8zM696 415h24v5h-24zM697 258h5v1h-5zM697 275h8v1h-8zM697 410h24v5h-24zM697 337h26v1h-26zM698 259h4v2h-4zM698 261h5v1h-5zM698 274h7v1h-7zM698 406h23v4h-23zM699 257h2v1h-2zM699 262h4v3h-4zM699 265h5v1h-5zM699 268h5v6h-5zM699 402h15v1h-15zM699 403h17v1h-17zM699 404h22v2h-22zM699 336h24v1h-24zM700 266h4v2h-4zM700 400h13v2h-13zM700 398h14v2h-14zM700 397h16v1h-16zM701 396h19v1h-19zM701 393h20v3h-20zM701 335h22v1h-22zM702 391h19v2h-19zM703 389h18v2h-18zM703 334h20v1h-20zM704 388h17v1h-17zM705 386h16v2h-16zM705 333h18v1h-18zM706 385h15v1h-15zM706 332h17v1h-17zM707 383h15v2h-15zM708 381h14v2h-14zM708 331h15v1h-15zM709 379h13v2h-13zM710 377h12v2h-12zM711 376h11v1h-11zM711 330h12v1h-12zM712 428h3v1h-3zM712 374h10v2h-10zM713 429h7v3h-7zM713 373h9v1h-9zM713 329h10v1h-10zM714 432h6v3h-6zM714 372h8v1h-8zM715 435h4v2h-4zM715 371h7v1h-7zM716 437h3v1h-3zM716 370h6v1h-6zM716 328h7v1h-7zM717 438h2v1h-2zM717 427h3v2h-3zM717 369h5v1h-5zM718 439h1v1h-1zM718 368h4v1h-4zM719 367h3v1h-3zM719 339h4v1h-4zM720 403h1v1h-1zM720 366h2v1h-2zM721 365h1v1h-1zM721 340h2v1h-2zM722 341h1v1h-1z"/>
<path fill="#00b9ff" d="M664 646h8v2h-8zM665 648h7v1h-7zM665 643h8v3h-8zM665 636h10v1h-10zM665 634h11v2h-11zM665 633h12v1h-12zM665 632h13v1h-13zM665 626h14v6h-14zM666 641h7v2h-7zM666 638h8v3h-8zM666 637h9v1h-9zM666 623h13v3h-13zM667 621h12v2h-12zM668 618h11v3h-11zM669 649h3v1h-3zM669 616h10v2h-10zM670 613h6v1h-6zM670 614h9v2h-9zM684 506h1v1h-1zM684 505h2v1h-2zM684 502h3v3h-3zM684 499h4v3h-4zM684 497h5v2h-5zM684 496h7v1h-7zM684 495h32v1h-32zM684 494h33v1h-33zM685 485h32v9h-32zM686 483h31v2h-31zM687 481h30v2h-30zM688 478h29v3h-29zM689 477h28v1h-28zM690 476h27v1h-27zM692 314h1v7h-1zM692 313h2v1h-2zM692 321h2v2h-2zM692 312h3v1h-3zM692 338h3v1h-3zM692 311h4v1h-4zM692 323h4v1h-4zM692 310h5v1h-5zM692 337h5v1h-5zM692 308h6v2h-6zM692 306h7v2h-7zM692 336h7v1h-7zM692 305h8v1h-8zM692 303h9v2h-9zM692 335h9v1h-9zM692 302h10v1h-10zM692 300h11v2h-11zM692 334h11v1h-11zM692 297h12v3h-12zM692 294h13v3h-13zM692 475h25v1h-25zM692 324h32v1h-32zM693 293h12v1h-12zM693 333h12v1h-12zM693 332h13v1h-13zM693 331h15v1h-15zM693 330h18v1h-18zM693 329h20v1h-20zM693 328h23v1h-23zM693 325h30v3h-30zM694 292h11v1h-11zM694 474h24v1h-24zM695 473h23v1h-23zM696 291h9v1h-9zM696 496h20v1h-20zM697 290h8v1h-8zM697 497h19v1h-19zM697 472h21v1h-21zM698 498h18v2h-18zM698 470h20v2h-20zM699 289h6v1h-6zM699 500h17v2h-17zM699 459h19v11h-19zM700 287h5v2h-5zM700 502h16v3h-16zM700 457h18v2h-18zM701 284h4v3h-4zM701 257h5v1h-5zM701 505h15v2h-15zM701 455h17v2h-17zM702 283h3v1h-3zM702 256h4v1h-4zM702 280h4v3h-4zM702 258h5v2h-5zM702 260h6v1h-6zM702 507h14v2h-14zM702 453h17v2h-17zM702 323h22v1h-22zM703 278h3v2h-3zM703 261h5v4h-5zM703 509h13v1h-13zM703 451h16v2h-16zM704 268h3v6h-3zM704 276h3v2h-3zM704 265h4v3h-4zM704 432h10v3h-10zM704 435h11v1h-11zM704 448h15v3h-15zM704 322h20v1h-20zM705 274h2v2h-2zM705 429h8v3h-8zM705 436h10v1h-10zM705 437h11v1h-11zM705 510h11v1h-11zM705 438h12v1h-12zM705 439h13v1h-13zM705 440h14v8h-14zM706 428h6v1h-6zM707 511h9v1h-9zM707 321h17v1h-17zM709 320h15v1h-15zM710 512h4v1h-4zM711 319h13v1h-13zM712 318h12v1h-12zM713 400h8v2h-8zM713 317h11v1h-11zM714 398h7v2h-7zM714 402h7v1h-7zM715 316h9v1h-9zM716 403h4v1h-4zM716 397h5v1h-5zM716 315h8v1h-8zM717 314h6v1h-6zM720 396h1v1h-1z"/>
<path fill="#00ecdc" d="M672 646h7v5h-7zM673 644h6v2h-6zM673 641h7v3h-7zM674 638h6v3h-6zM675 651h4v1h-4zM675 636h5v2h-5zM676 634h4v2h-4zM677 633h2v1h-2zM678 632h1v1h-1zM678 652h1v1h-1zM683 515h32v17h-32zM683 514h33v1h-33zM684 507h18v2h-18zM684 509h19v1h-19zM684 510h21v1h-21zM684 511h23v1h-23zM684 512h26v1h-26zM684 513h32v1h-32zM685 506h16v1h-16zM686 505h15v1h-15zM686 532h29v1h-29zM687 502h13v3h-13zM688 499h10v1h-10zM688 500h11v2h-11zM688 533h27v1h-27zM689 497h8v1h-8zM689 498h9v1h-9zM690 534h25v1h-25zM691 496h5v1h-5zM692 535h22v1h-22zM693 320h16v1h-16zM693 319h18v1h-18zM693 318h19v1h-19zM693 317h20v1h-20zM693 316h22v1h-22zM693 315h23v1h-23zM693 314h24v1h-24zM694 322h10v1h-10zM694 321h13v1h-13zM694 536h20v1h-20zM694 313h30v1h-30zM695 312h29v1h-29zM696 323h6v1h-6zM696 537h18v1h-18zM696 311h28v1h-28zM697 310h27v1h-27zM698 308h26v2h-26zM699 306h25v2h-25zM700 305h24v1h-24zM701 303h23v2h-23zM702 302h22v1h-22zM703 300h21v2h-21zM704 297h18v1h-18zM704 298h19v1h-19zM704 299h20v1h-20zM705 283h4v3h-4zM705 255h5v1h-5zM705 286h5v3h-5zM705 289h6v2h-6zM705 291h7v1h-7zM705 292h8v1h-8zM705 293h10v1h-10zM705 294h12v1h-12zM705 295h14v1h-14zM705 296h16v1h-16zM706 278h3v5h-3zM706 256h5v1h-5zM706 257h7v1h-7zM707 254h2v1h-2zM707 273h3v5h-3zM707 270h4v3h-4zM707 269h5v1h-5zM707 268h6v1h-6zM707 258h11v2h-11zM708 267h5v1h-5zM708 266h6v1h-6zM708 265h7v1h-7zM708 263h8v2h-8zM708 261h9v2h-9zM708 260h10v1h-10zM714 512h2v1h-2zM723 314h1v1h-1z"/>
<path fill="#00b48c" d="M682 544h32v5h-32zM683 532h3v1h-3zM683 533h5v1h-5zM683 534h7v1h-7zM683 535h9v1h-9zM683 536h11v1h-11zM683 537h13v1h-13zM683 538h31v6h-31zM685 549h29v1h-29zM687 550h27v1h-27zM690 551h24v1h-24zM692 552h22v1h-22zM694 553h20v1h-20zM696 554h18v1h-18zM698 555h16v1h-16zM700 556h14v1h-14zM701 557h13v1h-13zM703 558h11v1h-11zM705 559h9v1h-9zM707 560h7v1h-7zM709 278h4v4h-4zM709 282h5v3h-5zM709 285h6v1h-6zM709 254h7v1h-7zM710 253h3v1h-3zM710 277h3v1h-3zM710 275h4v2h-4zM710 274h5v1h-5zM710 273h6v1h-6zM710 286h6v1h-6zM710 255h8v1h-8zM710 287h8v1h-8zM710 288h11v1h-11zM711 272h6v1h-6zM711 271h7v1h-7zM711 270h8v1h-8zM711 256h9v1h-9zM711 289h14v2h-14zM712 269h8v1h-8zM712 291h13v1h-13zM713 257h8v1h-8zM713 267h8v2h-8zM713 292h12v1h-12zM714 266h8v1h-8zM715 265h7v1h-7zM715 293h10v1h-10zM716 263h6v2h-6zM717 261h5v1h-5zM717 262h6v1h-6zM717 294h8v1h-8zM718 258h4v3h-4zM719 295h5v1h-5zM721 296h3v1h-3zM722 297h2v1h-2zM723 298h1v1h-1z"/>
<path fill="#00803a" d="M682 549h3v1h-3zM682 550h5v1h-5zM682 551h8v1h-8zM682 552h10v1h-10zM682 553h12v1h-12zM682 554h14v1h-14zM682 555h16v1h-16zM682 556h18v1h-18zM682 557h19v1h-19zM682 558h21v1h-21zM682 559h23v1h-23zM682 560h25v1h-25zM682 565h31v3h-31zM682 561h32v4h-32zM689 568h24v1h-24zM692 255h2v1h-2zM692 254h5v1h-5zM692 253h8v1h-8zM692 252h11v1h-11zM692 251h13v1h-13zM692 250h16v1h-16zM692 249h19v1h-19zM692 248h21v1h-21zM701 569h12v1h-12zM703 570h10v1h-10zM704 571h9v1h-9zM705 572h8v1h-8zM707 573h6v1h-6zM708 574h5v1h-5zM709 247h4v1h-4zM710 575h3v1h-3zM712 576h1v1h-1zM713 252h6v1h-6zM713 253h8v1h-8zM713 277h12v5h-12zM714 275h11v2h-11zM714 282h11v3h-11zM715 251h2v1h-2zM715 274h10v1h-10zM715 285h10v1h-10zM716 254h7v1h-7zM716 273h9v1h-9zM716 286h9v1h-9zM717 272h8v1h-8zM718 255h6v1h-6zM718 271h7v1h-7zM718 287h7v1h-7zM719 270h6v1h-6zM720 269h5v1h-5zM720 256h6v1h-6zM721 267h4v2h-4zM721 288h4v1h-4zM721 257h5v1h-5zM722 265h3v2h-3zM722 258h4v4h-4zM722 263h4v2h-4zM723 262h3v1h-3z"/>
<path fill="#2a7d00" d="M679 736h114v20h-114zM679 756h115v29h-115zM680 735h113v1h-113zM680 785h114v21h-114zM680 806h115v30h-115zM680 836h116v29h-116zM681 884h79v1h-79zM681 883h82v1h-82zM681 882h84v1h-84zM681 881h87v1h-87zM681 880h90v1h-90zM681 879h92v1h-92zM681 878h95v1h-95zM681 877h97v1h-97zM681 876h100v1h-100zM681 875h103v1h-103zM681 874h105v1h-105zM681 873h108v1h-108zM681 872h111v1h-111zM681 871h113v1h-113zM681 865h115v6h-115zM682 913h2v1h-2zM682 912h4v1h-4zM682 568h7v1h-7zM682 911h7v1h-7zM682 910h10v1h-10zM682 909h12v1h-12zM682 908h15v1h-15zM682 907h18v1h-18zM682 569h19v1h-19zM682 906h20v1h-20zM682 570h21v1h-21zM682 571h22v1h-22zM682 572h23v1h-23zM682 905h23v1h-23zM682 573h25v1h-25zM682 904h25v1h-25zM682 574h26v1h-26zM682 575h28v1h-28zM682 903h28v1h-28zM682 576h30v1h-30zM682 577h31v4h-31zM682 902h31v1h-31zM682 901h33v1h-33zM682 900h36v1h-36zM682 899h39v1h-39zM682 898h41v1h-41zM682 897h44v1h-44zM682 896h46v1h-46zM682 895h49v1h-49zM682 894h52v1h-52zM682 893h54v1h-54zM682 892h57v1h-57zM682 891h60v1h-60zM682 890h62v1h-62zM682 889h65v1h-65zM682 888h68v1h-68zM682 887h70v1h-70zM682 886h73v1h-73zM682 885h75v1h-75zM682 734h111v1h-111zM683 733h110v1h-110zM684 732h109v1h-109zM685 581h28v1h-28zM685 731h108v1h-108zM686 582h27v1h-27zM686 729h107v2h-107zM687 728h106v1h-106zM688 583h25v2h-25zM688 727h105v1h-105zM689 585h24v1h-24zM689 725h104v2h-104zM690 586h23v1h-23zM690 724h103v1h-103zM691 587h22v1h-22zM691 722h102v2h-102zM692 259h2v1h-2zM692 258h5v1h-5zM692 257h7v1h-7zM692 256h10v1h-10zM692 720h101v2h-101zM693 588h20v1h-20zM693 719h100v1h-100zM694 255h11v1h-11zM694 589h19v1h-19zM694 717h99v2h-99zM695 590h18v2h-18zM695 716h98v1h-98zM696 592h17v1h-17zM696 715h97v1h-97zM697 254h10v1h-10zM697 593h16v2h-16zM697 713h96v2h-96zM698 595h14v3h-14zM698 712h95v1h-95zM699 598h13v2h-13zM699 711h94v1h-94zM700 253h10v1h-10zM700 600h12v2h-12zM700 710h93v1h-93zM701 602h11v1h-11zM701 709h92v1h-92zM702 708h91v1h-91zM703 603h9v1h-9zM703 252h10v1h-10zM703 707h90v1h-90zM704 604h8v1h-8zM704 706h89v1h-89zM705 251h10v1h-10zM705 704h87v2h-87zM707 605h5v1h-5zM707 703h85v1h-85zM708 250h17v1h-17zM711 249h11v1h-11zM711 702h81v1h-81zM713 247h7v1h-7zM713 248h12v1h-12zM714 701h78v1h-78zM717 251h9v1h-9zM718 700h74v1h-74zM719 252h7v1h-7zM721 253h5v1h-5zM721 699h71v1h-71zM722 698h70v1h-70zM723 247h2v1h-2zM723 254h3v1h-3zM724 255h2v1h-2zM724 697h68v1h-68zM725 696h67v1h-67zM727 695h65v1h-65zM728 694h61v1h-61zM729 693h58v1h-58zM730 692h56v1h-56zM731 691h53v1h-53zM732 690h50v1h-50zM733 689h14v1h-14zM734 688h10v1h-10zM735 687h5v1h-5zM749 689h32v1h-32zM750 688h29v1h-29zM752 687h25v1h-25zM754 686h19v1h-19zM756 685h14v1h-14zM758 684h10v1h-10zM761 683h4v1h-4z"/>
<path fill="#82b400" d="M679 651h1v1h-1zM679 735h1v1h-1zM679 650h3v1h-3zM679 734h3v1h-3zM679 733h4v1h-4zM679 648h5v2h-5zM679 732h5v1h-5zM679 646h6v2h-6zM679 731h6v1h-6zM679 644h7v2h-7zM679 729h7v2h-7zM679 728h8v1h-8zM679 727h9v1h-9zM679 725h10v2h-10zM679 724h11v1h-11zM679 722h12v2h-12zM679 720h13v2h-13zM679 719h14v1h-14zM679 717h15v2h-15zM679 716h16v1h-16zM679 715h17v1h-17zM679 713h18v2h-18zM680 637h1v1h-1zM680 638h3v1h-3zM680 639h4v1h-4zM680 640h5v1h-5zM680 641h6v3h-6zM680 712h18v1h-18zM681 584h7v1h-7zM681 585h8v1h-8zM681 586h9v1h-9zM681 587h10v1h-10zM681 588h12v1h-12zM681 589h13v1h-13zM681 590h14v2h-14zM681 592h15v1h-15zM681 593h16v1h-16zM681 711h18v1h-18zM682 581h3v1h-3zM682 582h4v1h-4zM682 583h6v1h-6zM682 594h15v1h-15zM682 710h18v1h-18zM683 709h18v1h-18zM684 595h14v1h-14zM684 708h18v1h-18zM685 596h13v1h-13zM685 707h18v1h-18zM686 597h12v1h-12zM686 706h18v1h-18zM687 598h12v1h-12zM687 705h18v1h-18zM688 599h11v1h-11zM688 704h17v1h-17zM689 600h11v1h-11zM689 703h18v1h-18zM690 601h10v1h-10zM690 702h21v1h-21zM691 602h10v1h-10zM691 603h12v1h-12zM691 701h23v1h-23zM692 604h12v1h-12zM692 700h26v1h-26zM692 699h29v1h-29zM693 605h14v1h-14zM694 606h18v1h-18zM694 698h28v1h-28zM695 607h17v1h-17zM696 608h16v1h-16zM696 697h28v1h-28zM697 609h15v1h-15zM697 696h28v1h-28zM698 610h14v1h-14zM699 611h13v1h-13zM699 695h28v1h-28zM700 612h12v1h-12zM700 694h28v1h-28zM701 613h11v1h-11zM702 693h27v1h-27zM703 614h9v1h-9zM703 692h27v1h-27zM704 615h8v1h-8zM704 691h27v1h-27zM706 616h6v1h-6zM706 690h26v1h-26zM707 689h26v1h-26zM708 617h4v1h-4zM708 688h26v1h-26zM710 687h25v1h-25zM711 618h1v1h-1zM711 686h43v1h-43zM713 685h43v1h-43zM714 684h44v1h-44zM716 683h45v1h-45zM718 682h74v1h-74zM719 681h73v1h-73zM720 247h3v1h-3zM721 680h71v1h-71zM722 249h4v1h-4zM722 679h70v1h-70zM723 678h69v1h-69zM725 247h1v2h-1zM725 250h1v1h-1zM725 677h67v1h-67zM726 676h66v1h-66zM727 675h65v1h-65zM729 674h63v1h-63zM730 673h62v1h-62zM731 672h61v1h-61zM732 671h60v1h-60zM734 670h42v1h-42zM735 669h39v1h-39zM740 687h12v1h-12zM744 688h6v1h-6zM745 668h26v1h-26zM747 689h2v1h-2zM754 667h13v1h-13zM765 683h27v1h-27zM768 684h24v1h-24zM770 685h22v1h-22zM773 686h19v1h-19zM777 687h15v1h-15zM779 688h13v1h-13zM781 689h11v1h-11zM782 690h10v1h-10zM784 691h8v1h-8zM786 692h6v1h-6zM787 693h5v1h-5zM789 694h3v1h-3z"/>
<path fill="#d6e600" d="M678 674h10v8h-10zM678 684h36v1h-36zM678 683h38v1h-38zM678 682h40v1h-40zM679 712h1v1h-1zM679 711h2v1h-2zM679 710h3v1h-3zM679 709h4v1h-4zM679 708h5v1h-5zM679 707h6v1h-6zM679 706h7v1h-7zM679 705h8v1h-8zM679 704h9v1h-9zM679 671h10v3h-10zM679 703h10v1h-10zM679 655h11v8h-11zM679 669h11v2h-11zM679 702h11v1h-11zM679 652h12v3h-12zM679 663h12v2h-12zM679 668h12v1h-12zM679 701h12v1h-12zM679 665h13v3h-13zM679 699h13v2h-13zM679 698h15v1h-15zM679 697h17v1h-17zM679 696h18v1h-18zM679 695h20v1h-20zM679 694h21v1h-21zM679 693h23v1h-23zM679 692h24v1h-24zM679 691h25v1h-25zM679 690h27v1h-27zM679 689h28v1h-28zM679 688h29v1h-29zM679 687h31v1h-31zM679 686h32v1h-32zM679 685h34v1h-34zM680 626h1v1h-1zM680 651h11v1h-11zM680 627h31v10h-31zM681 594h1v1h-1zM681 595h3v1h-3zM681 596h4v1h-4zM681 597h5v1h-5zM681 598h6v1h-6zM681 599h7v1h-7zM681 600h8v1h-8zM681 601h9v1h-9zM681 602h10v2h-10zM681 604h11v1h-11zM681 605h12v1h-12zM681 606h13v1h-13zM681 607h14v1h-14zM681 608h15v1h-15zM681 609h16v1h-16zM681 610h17v1h-17zM681 637h30v1h-30zM682 650h10v1h-10zM682 611h17v1h-17zM683 638h28v1h-28zM684 648h8v2h-8zM684 612h16v1h-16zM684 639h27v1h-27zM685 647h7v1h-7zM685 646h8v1h-8zM685 640h106v1h-106zM686 645h7v1h-7zM686 644h8v1h-8zM686 643h9v1h-9zM686 642h10v1h-10zM686 641h12v1h-12zM686 613h15v1h-15zM687 614h16v1h-16zM688 615h16v1h-16zM688 626h23v1h-23zM689 616h17v1h-17zM690 617h18v1h-18zM690 625h21v1h-21zM691 618h20v1h-20zM691 624h21v1h-21zM692 619h20v5h-20zM695 681h24v1h-24zM697 680h24v1h-24zM699 679h23v1h-23zM701 678h22v1h-22zM702 677h23v1h-23zM703 676h23v1h-23zM704 675h23v1h-23zM704 641h87v1h-87zM705 674h24v1h-24zM705 673h25v1h-25zM706 672h25v1h-25zM707 671h25v1h-25zM709 670h25v1h-25zM709 642h82v1h-82zM710 669h25v1h-25zM711 668h34v1h-34zM713 667h41v1h-41zM713 643h78v1h-78zM714 666h78v1h-78zM715 665h77v1h-77zM716 644h75v1h-75zM716 664h76v1h-76zM717 645h74v1h-74zM717 662h75v2h-75zM718 661h74v1h-74zM719 646h72v1h-72zM719 660h73v1h-73zM720 647h71v1h-71zM720 658h72v2h-72zM721 648h70v2h-70zM721 655h70v1h-70zM721 656h71v2h-71zM722 650h69v5h-69zM726 639h65v1h-65zM728 638h63v1h-63zM730 637h61v1h-61zM732 636h59v1h-59zM733 635h58v1h-58zM735 634h56v1h-56zM737 633h54v1h-54zM739 632h52v1h-52zM740 631h51v1h-51zM742 630h49v1h-49zM744 629h47v1h-47zM746 628h45v1h-45zM747 627h44v1h-44zM749 626h42v1h-42zM751 625h40v1h-40zM753 624h38v1h-38zM754 623h37v1h-37zM756 622h35v1h-35zM758 621h33v1h-33zM760 620h31v1h-31zM767 667h25v1h-25zM771 668h21v1h-21zM774 669h18v1h-18zM776 670h16v1h-16z"/>
<path fill="#ffee00" d="M680 614h7v1h-7zM680 615h8v1h-8zM680 616h9v1h-9zM680 617h10v1h-10zM680 625h10v1h-10zM680 618h11v1h-11zM680 624h11v1h-11zM680 619h12v5h-12zM681 611h1v1h-1zM681 612h3v1h-3zM681 613h5v1h-5zM681 626h7v1h-7zM688 681h7v1h-7zM688 680h9v1h-9zM688 679h11v1h-11zM688 678h13v1h-13zM688 677h14v1h-14zM688 676h15v1h-15zM688 675h16v1h-16zM688 674h17v1h-17zM689 673h16v1h-16zM689 672h17v1h-17zM689 671h18v1h-18zM690 670h19v1h-19zM690 669h20v1h-20zM690 662h27v1h-27zM690 661h28v1h-28zM690 660h29v1h-29zM690 658h30v2h-30zM690 655h31v3h-31zM691 668h20v1h-20zM691 664h25v1h-25zM691 663h26v1h-26zM691 651h31v4h-31zM692 667h21v1h-21zM692 666h22v1h-22zM692 665h23v1h-23zM692 647h28v1h-28zM692 648h29v2h-29zM692 650h30v1h-30zM693 645h24v1h-24zM693 646h26v1h-26zM694 644h22v1h-22zM695 643h18v1h-18zM696 642h13v1h-13zM698 641h6v1h-6z"/>
</g>
<clipPath id="clp1"><polygon points="692.1,258.8 692.2,268.8 692.2,278.8 692.3,288.8 692.3,298.8 692.4,308.8 692.4,318.8 692.5,328.8 691.9,338.8 691.3,348.8 690.7,358.8 690.2,368.8 689.7,378.8 689.3,388.8 688.8,398.8 688.4,408.8 687.9,418.8 687.5,428.8 687,438.8 686.6,448.8 686.1,458.8 685.6,468.8 685.2,478.8 684.7,488.8 684.3,498.8 683.8,508.8 683.4,518.8 683,528.8 682.7,538.8 682.4,548.8 682.1,558.8 681.8,568.8 681.5,578.8 681.2,588.8 680.9,598.8 680.6,608.8 680.3,618.8 680,628.8 679.7,638.8 679.4,648.8 679.1,658.8 678.7,668.8 678.4,678.8 678.5,688.8 678.6,698.8 678.7,708.8 678.8,718.8 678.9,728.8 679,738.8 679.1,748.8 679.2,758.8 679.3,768.8 679.4,778.8 679.5,788.8 679.6,798.8 679.7,808.8 679.8,818.8 679.9,828.8 680,838.8 680.1,848.8 680.2,858.8 680.6,868.8 681.1,878.8 681.5,888.8 681.8,898.8 682.1,908.8 682.2,913.4 795.3,870.3 795.3,870 795.3,860 795,850 794.7,840 794.3,830 794,820 793.7,810 793.4,800 793.2,790 793,780 792.8,770 792.6,760 792.4,750 792.2,740 792,730 791.8,720 791.6,710 791.4,700 791.2,690 791,680 790.8,670 790.6,660 790.3,650 789.9,640 789.6,630 789.6,620 760,620 725,640 709.8,640 710.2,630 710.5,620 710.9,610 711.2,600 711.6,590 711.9,580 712.3,570 712.6,560 713,550 713.5,540 713.9,530 714.4,520 714.9,510 715.3,500 715.8,490 716.3,480 716.7,470 717.2,460 717.7,450 718.1,440 718.6,430 719.1,420 719.5,410 720,400 720.3,390 720.7,380 721,370 721.3,360 721.7,350 722,340 722.3,330 722.7,320 723,310 723.3,300 723.7,290 724,280 724.3,270 724.7,260 725,250 725,246.5 692.1,248"/><polygon points="530,595 530,655 685,655 685,595"/></clipPath>
<path fill="none" stroke="#000" stroke-width="1.0" stroke-linejoin="round" clip-path="url(#clp1)" shape-rendering="crispEdges" d="M536.2 621L678.5 652M553.5 615L678.2 639.3M570.8 609L677.9 626.7M588 603L677.6 614M553 624.6L598.5 604.3M569.7 628.3L609.1 605.6M586.5 631.9L619.6 606.9M603.2 635.6L630.2 608.2M619.9 639.2L640.7 609.5M636.7 642.9L651.2 610.8M653.4 646.5L661.8 612.1M670.1 650.2L672.3 613.4M682.2 913.4L795.3 870.3M681.5 890L794.9 847M680.5 866.6L794.2 823.7M680 843.2L793.4 800.4M679.8 819.8L792.9 777.1M679.6 796.4L792.5 753.8M679.3 773L792 730.5M679.1 749.6L791.5 707.2M678.9 726.2L791.1 683.8M678.6 702.8L790.6 660.5M678.4 679.4L789.8 637.2M679.1 656L789.7 613.9M679.9 632.6L789.9 590.6M680.6 609.2L790.2 567.3M681.3 585.8L790.4 544M682 562.4L790.7 520.7M682.7 539L790.9 497.4M683.5 515.6L791.2 474.1M684.6 492.2L791.4 450.8M685.6 468.8L791.7 427.5M686.7 445.4L792 404.2M687.8 422L793 380.9M688.8 398.6L794.3 357.6M689.9 375.2L795.5 334.3M691.1 351.8L796.7 310.9M692.5 328.4L798 287.6M692.4 305L799.2 264.3M692.3 281.6L800 241M692.1 258.2L800 217.7M682.2 913.4L681.5 890L680.5 866.6L680 843.2L679.8 819.8L679.6 796.4L679.3 773L679.1 749.6L678.9 726.2L678.6 702.8L678.4 679.4L679.1 656L679.9 632.6L680.6 609.2L681.3 585.8L682 562.4L682.7 539L683.5 515.6L684.6 492.2L685.6 468.8L686.7 445.4L687.8 422L688.8 398.6L689.9 375.2L691.1 351.8L692.5 328.4L692.4 305L692.3 281.6L692.1 258.2M696.3 908L695.7 884.6L694.7 861.2L694.2 837.8L693.9 814.5L693.7 791.1L693.4 767.7L693.2 744.3L692.9 720.9L692.6 697.5L692.3 674.1L692.9 650.7L693.6 627.4L694.3 604L694.9 580.6L695.6 557.2L696.2 533.8L697 510.4L697.9 487L698.9 463.6L699.9 440.2L700.9 416.9L702 393.5L703.1 370.1L704.3 346.7L705.7 323.3L705.7 299.9L705.7 276.5L705.6 253.1M710.5 902.6L709.9 879.2L708.9 855.9L708.4 832.5L708.1 809.1L707.8 785.7L707.5 762.4L707.2 739L706.9 715.6L706.6 692.2L706.3 668.9L706.8 645.5L707.4 622.1L708 598.7L708.6 575.4L709.2 552L709.8 528.6L710.4 505.2L711.3 481.8L712.2 458.5L713 435.1L714.1 411.7L715.2 388.3L716.3 365L717.5 341.6L718.9 318.2L719.1 294.8L719.2 271.5L719.1 248.1M724.6 897.2L724 873.9L723.1 850.5L722.5 827.1L722.2 803.8L721.9 780.4L721.6 757L721.3 733.7L720.9 710.3L720.6 687L720.2 663.6L720.6 640.2L721.1 616.9L721.7 593.5L722.2 570.1L722.8 546.8L723.3 523.4L723.9 500L724.6 476.7L725.4 453.3L726.2 429.9L727.2 406.6L728.4 383.2L729.5 359.8L730.7 336.5L732.1 313.1L732.4 289.8L732.7 266.4L732.6 243M738.8 891.8L738.2 868.5L737.3 845.1L736.7 821.8L736.4 798.4L736 775.1L735.7 751.7L735.3 728.4L735 705L734.6 681.7L734.1 658.3L734.4 635L734.9 611.6L735.4 588.3L735.9 564.9L736.3 541.6L736.8 518.2L737.3 494.8L738 471.5L738.7 448.1L739.3 424.8L740.4 401.4L741.6 378.1L742.7 354.7L743.9 331.4L745.2 308L745.8 284.7L746.1 261.3L746.1 238M752.9 886.5L752.4 863.1L751.5 839.8L750.9 816.4L750.5 793.1L750.1 769.8L749.8 746.4L749.4 723.1L749 699.7L748.6 676.4L748 653L748.2 629.7L748.6 606.4L749.1 583L749.5 559.7L749.9 536.3L750.4 513L750.8 489.7L751.4 466.3L751.9 443L752.5 419.6L753.6 396.3L754.7 372.9L755.9 349.6L757.1 326.3L758.4 302.9L759.2 279.6L759.6 256.2L759.6 232.9M767 881.1L766.5 857.7L765.7 834.4L765.1 811.1L764.7 787.8L764.2 764.4L763.8 741.1L763.4 717.8L763 694.4L762.6 671.1L762 647.8L762 624.4L762.4 601.1L762.8 577.8L763.1 554.5L763.5 531.1L763.9 507.8L764.3 484.5L764.7 461.1L765.2 437.8L765.6 414.5L766.7 391.1L767.9 367.8L769.1 344.5L770.3 321.2L771.6 297.8L772.5 274.5L773.1 251.2L773 227.8M781.2 875.7L780.7 852.4L779.9 829.1L779.2 805.7L778.8 782.4L778.4 759.1L777.9 735.8L777.5 712.5L777.1 689.1L776.6 665.8L775.9 642.5L775.8 619.2L776.2 595.9L776.5 572.6L776.8 549.2L777.1 525.9L777.4 502.6L777.7 479.3L778.1 456L778.4 432.6L778.8 409.3L779.9 386L781.1 362.7L782.3 339.4L783.5 316.1L784.8 292.7L785.9 269.4L786.5 246.1L786.5 222.8M795.3 870.3L794.9 847L794.2 823.7L793.4 800.4L792.9 777.1L792.5 753.8L792 730.5L791.5 707.2L791.1 683.8L790.6 660.5L789.8 637.2L789.7 613.9L789.9 590.6L790.2 567.3L790.4 544L790.7 520.7L790.9 497.4L791.2 474.1L791.4 450.8L791.7 427.5L792 404.2L793 380.9L794.3 357.6L795.5 334.3L796.7 310.9L798 287.6L799.2 264.3L800 241L800 217.7M692.1 258.8L725 246.5"/>
<path d="M536.5 617.6L581 601.3" stroke="#1a00dc" stroke-width="1.6" fill="none"/><path d="M552 611L580 600.6" stroke="#00b48c" stroke-width="1.2" fill="none"/>
<path d="M605.3 599.5L640 604.5" stroke="#00ecdc" stroke-width="1.6" fill="none"/><path d="M640 604.5L677.6 612.5" stroke="#3200b4" stroke-width="1.6" fill="none"/>
<path d="M536.5 626L541 624.3" stroke="#2a7d00" stroke-width="1.2" fill="none"/>
<g shape-rendering="crispEdges">
<path fill="#3200b4" d="M716 427h38v7h-38zM717 435h36v1h-36zM717 425h37v2h-37zM717 434h37v1h-37zM718 436h35v1h-35zM718 424h36v1h-36zM719 437h34v1h-34zM719 422h35v2h-35zM720 438h33v1h-33zM720 421h34v1h-34zM721 439h32v1h-32zM721 420h33v1h-33zM722 440h31v1h-31zM722 419h32v1h-32zM723 441h30v1h-30zM723 418h31v1h-31zM724 442h29v1h-29zM724 417h30v1h-30zM725 416h29v1h-29zM726 443h27v1h-27zM726 415h28v1h-28zM726 414h29v1h-29zM727 444h26v1h-26zM727 413h28v1h-28zM728 445h25v1h-25zM728 412h27v1h-27zM729 410h26v2h-26zM730 446h23v1h-23zM730 409h25v1h-25zM731 407h24v2h-24zM732 447h15v1h-15zM732 405h23v2h-23zM733 403h22v2h-22zM734 401h21v2h-21zM735 399h20v2h-20zM736 448h5v1h-5zM736 398h19v1h-19zM737 397h18v1h-18zM738 396h17v1h-17zM739 395h16v1h-16zM740 394h16v1h-16zM742 393h14v1h-14zM744 392h11v1h-11zM749 391h1v1h-1z"/>
<path fill="#1a00dc" d="M710 537h39v10h-39zM711 525h38v12h-38zM711 547h38v1h-38zM711 517h39v8h-39zM712 505h38v12h-38zM712 497h39v8h-39zM713 485h38v12h-38zM713 477h39v8h-39zM714 548h35v1h-35zM714 465h38v12h-38zM714 457h39v8h-39zM715 437h4v1h-4zM715 438h5v1h-5zM715 439h6v1h-6zM715 440h7v1h-7zM715 441h8v1h-8zM715 442h9v1h-9zM715 443h11v1h-11zM715 444h12v1h-12zM715 445h13v1h-13zM715 446h15v1h-15zM715 447h17v1h-17zM715 448h21v1h-21zM715 449h38v8h-38zM716 425h1v2h-1zM716 434h1v2h-1zM716 424h2v1h-2zM716 436h2v1h-2zM716 422h3v2h-3zM716 421h4v1h-4zM716 420h5v1h-5zM716 419h6v1h-6zM716 418h7v1h-7zM716 417h8v1h-8zM716 416h9v1h-9zM716 414h10v2h-10zM716 413h11v1h-11zM716 412h12v1h-12zM716 410h13v2h-13zM716 409h14v1h-14zM716 407h15v2h-15zM716 549h33v1h-33zM717 405h15v2h-15zM717 403h16v2h-16zM718 402h16v1h-16zM719 401h15v1h-15zM719 550h30v1h-30zM720 400h15v1h-15zM721 399h14v1h-14zM721 398h15v1h-15zM721 551h28v1h-28zM722 397h15v1h-15zM723 396h15v1h-15zM723 395h16v1h-16zM724 394h16v1h-16zM725 393h17v1h-17zM725 392h19v1h-19zM725 552h24v1h-24zM726 391h23v1h-23zM727 389h29v2h-29zM728 388h28v1h-28zM729 387h27v1h-27zM730 385h26v2h-26zM731 384h25v1h-25zM732 383h24v1h-24zM733 382h23v1h-23zM734 381h22v1h-22zM736 380h20v1h-20zM737 379h19v1h-19zM740 378h16v1h-16zM741 448h12v1h-12zM747 447h6v1h-6zM747 377h9v1h-9zM750 391h6v1h-6zM755 392h1v1h-1zM884 350h17v1h-17zM887 349h14v1h-14zM889 351h12v1h-12zM890 348h10v1h-10zM892 347h8v1h-8zM894 346h6v1h-6zM895 345h5v1h-5zM897 344h3v1h-3zM898 343h2v1h-2z"/>
<path fill="#0000ff" d="M709 567h39v6h-39zM710 547h1v1h-1zM710 548h4v1h-4zM710 549h6v1h-6zM710 550h9v1h-9zM710 551h11v1h-11zM710 552h15v1h-15zM710 555h38v12h-38zM710 573h38v1h-38zM710 553h39v2h-39zM713 574h35v1h-35zM715 575h32v1h-32zM717 402h1v1h-1zM717 401h2v1h-2zM717 400h3v1h-3zM717 398h4v2h-4zM717 397h5v1h-5zM717 395h6v2h-6zM717 394h7v1h-7zM717 392h8v2h-8zM717 391h9v1h-9zM717 389h10v2h-10zM717 388h11v1h-11zM717 387h12v1h-12zM717 576h30v1h-30zM718 385h12v2h-12zM718 384h13v1h-13zM718 383h14v1h-14zM718 382h15v1h-15zM718 381h16v1h-16zM718 380h18v1h-18zM718 379h19v1h-19zM719 577h28v1h-28zM720 378h20v1h-20zM721 377h26v1h-26zM722 578h2v1h-2zM722 376h34v1h-34zM723 375h33v1h-33zM723 373h34v2h-34zM724 370h33v3h-33zM725 368h32v2h-32zM726 367h31v1h-31zM727 365h30v2h-30zM728 364h29v1h-29zM730 363h27v1h-27zM731 578h16v1h-16zM731 362h26v1h-26zM732 361h25v1h-25zM733 360h24v1h-24zM734 359h23v1h-23zM735 358h22v1h-22zM736 579h11v1h-11zM737 357h20v1h-20zM738 580h9v1h-9zM739 356h18v1h-18zM740 581h7v1h-7zM741 355h16v1h-16zM743 582h4v1h-4zM743 354h14v1h-14zM745 583h2v1h-2zM745 353h12v1h-12zM746 352h10v1h-10zM748 351h6v1h-6zM749 350h3v1h-3zM837 348h53v1h-53zM838 347h54v1h-54zM839 346h55v1h-55zM840 345h55v1h-55zM841 349h46v1h-46zM841 344h56v1h-56zM842 343h56v1h-56zM843 342h56v1h-56zM845 341h54v1h-54zM847 340h52v1h-52zM849 339h50v1h-50zM851 338h48v1h-48zM853 337h46v1h-46zM855 336h43v1h-43zM857 335h41v1h-41zM858 334h40v1h-40zM860 333h38v1h-38zM861 332h37v1h-37zM863 331h35v1h-35zM864 330h34v1h-34zM865 350h19v1h-19zM865 329h33v1h-33zM866 328h31v1h-31zM867 327h30v1h-30zM869 326h28v1h-28zM871 325h26v1h-26zM872 324h25v1h-25zM874 323h23v1h-23zM875 322h22v1h-22zM877 321h20v1h-20zM878 320h19v1h-19zM880 319h17v1h-17zM881 318h16v1h-16zM883 317h13v1h-13zM884 316h12v1h-12zM886 315h10v1h-10zM888 314h8v1h-8zM889 313h7v1h-7zM891 312h5v1h-5zM892 311h4v1h-4zM893 310h3v1h-3zM894 308h2v2h-2zM895 307h1v1h-1z"/>
<path fill="#0069ff" d="M709 573h1v1h-1zM709 574h4v1h-4zM709 575h6v1h-6zM709 576h8v1h-8zM709 577h10v1h-10zM709 578h13v1h-13zM709 579h27v1h-27zM709 580h29v1h-29zM709 581h31v1h-31zM709 582h34v1h-34zM709 583h36v1h-36zM709 584h38v3h-38zM710 587h37v1h-37zM713 588h15v1h-15zM715 589h11v1h-11zM718 378h2v1h-2zM718 377h3v1h-3zM718 376h4v1h-4zM718 373h5v3h-5zM718 370h6v3h-6zM718 368h7v2h-7zM718 367h8v1h-8zM718 365h9v2h-9zM718 364h10v1h-10zM718 363h12v1h-12zM718 362h13v1h-13zM718 361h14v1h-14zM718 360h15v1h-15zM718 359h16v1h-16zM718 358h17v1h-17zM718 357h19v1h-19zM719 356h20v1h-20zM720 337h3v1h-3zM720 338h4v1h-4zM720 355h21v1h-21zM721 339h3v1h-3zM722 354h21v1h-21zM723 353h22v1h-22zM724 578h7v1h-7zM724 352h22v1h-22zM726 351h22v1h-22zM727 350h22v1h-22zM728 349h30v1h-30zM729 348h29v1h-29zM730 347h9v1h-9zM736 588h11v1h-11zM738 589h9v1h-9zM740 590h7v1h-7zM741 591h6v1h-6zM741 599h6v2h-6zM742 592h5v7h-5zM743 601h4v2h-4zM743 347h14v1h-14zM744 603h3v1h-3zM745 604h2v1h-2zM746 346h9v1h-9zM749 345h3v1h-3zM752 350h6v1h-6zM754 351h4v1h-4zM756 352h2v1h-2zM757 353h1v2h-1zM824 348h13v1h-13zM826 347h12v1h-12zM827 346h12v1h-12zM828 345h12v1h-12zM830 344h11v1h-11zM831 343h11v1h-11zM832 342h11v1h-11zM832 341h13v1h-13zM833 340h14v1h-14zM834 339h15v1h-15zM835 338h16v1h-16zM836 337h17v1h-17zM837 336h18v1h-18zM838 335h19v1h-19zM839 334h19v1h-19zM840 333h20v1h-20zM841 332h20v1h-20zM842 331h21v1h-21zM844 330h20v1h-20zM845 329h20v1h-20zM846 328h20v1h-20zM847 327h20v1h-20zM848 326h21v1h-21zM849 325h22v1h-22zM850 324h22v1h-22zM851 323h23v1h-23zM852 322h23v1h-23zM853 321h24v1h-24zM854 320h24v1h-24zM855 319h25v1h-25zM856 318h25v1h-25zM857 317h26v1h-26zM857 316h27v1h-27zM858 315h28v1h-28zM859 314h29v1h-29zM860 313h29v1h-29zM860 312h31v1h-31zM861 311h31v1h-31zM862 310h31v1h-31zM862 309h32v1h-32zM863 308h31v1h-31zM864 307h31v1h-31zM865 305h30v2h-30zM866 304h29v1h-29zM867 302h28v2h-28zM868 300h27v2h-27zM869 298h26v2h-26zM870 296h25v2h-25zM871 294h23v2h-23zM872 292h22v2h-22zM873 290h21v2h-21zM874 287h20v3h-20zM875 284h18v1h-18zM875 285h19v2h-19zM876 278h17v6h-17zM877 252h14v9h-14zM877 261h15v12h-15zM877 273h16v5h-16zM878 247h12v2h-12zM878 249h13v3h-13zM879 245h11v2h-11zM880 243h10v2h-10zM882 242h8v1h-8z"/>
<path fill="#00b9ff" d="M706 668h1v2h-1zM706 666h2v2h-2zM706 663h3v3h-3zM706 661h4v2h-4zM706 659h5v2h-5zM706 658h6v1h-6zM706 656h7v2h-7zM706 647h8v1h-8zM706 654h8v2h-8zM706 648h9v6h-9zM707 639h3v1h-3zM707 640h4v2h-4zM707 642h5v1h-5zM707 643h6v2h-6zM707 645h7v2h-7zM707 627h9v1h-9zM707 638h9v1h-9zM707 628h10v2h-10zM707 630h11v1h-11zM707 631h12v1h-12zM707 632h13v2h-13zM707 634h14v1h-14zM707 635h15v3h-15zM708 618h6v5h-6zM708 615h7v3h-7zM708 623h7v3h-7zM708 611h8v4h-8zM708 626h8v1h-8zM708 608h9v3h-9zM708 605h10v3h-10zM708 602h11v3h-11zM708 597h12v5h-12zM709 587h1v1h-1zM709 588h4v1h-4zM709 589h6v1h-6zM709 596h12v1h-12zM709 595h13v1h-13zM709 594h14v1h-14zM709 593h16v1h-16zM709 592h20v1h-20zM709 590h31v1h-31zM709 591h32v1h-32zM719 337h1v2h-1zM719 355h1v1h-1zM719 339h2v1h-2zM719 354h3v1h-3zM719 353h4v1h-4zM719 352h5v1h-5zM719 351h7v1h-7zM719 350h8v1h-8zM719 327h9v1h-9zM719 349h9v1h-9zM719 328h10v2h-10zM719 348h10v1h-10zM719 330h11v2h-11zM719 347h11v1h-11zM719 332h12v1h-12zM719 333h13v1h-13zM719 334h14v1h-14zM719 335h15v1h-15zM719 336h16v1h-16zM719 340h21v1h-21zM719 341h22v1h-22zM719 342h27v1h-27zM719 346h27v1h-27zM719 343h30v1h-30zM719 345h30v1h-30zM719 344h31v1h-31zM720 307h1v3h-1zM720 311h1v5h-1zM720 310h2v1h-2zM720 316h2v2h-2zM720 318h3v2h-3zM720 320h4v1h-4zM720 321h5v2h-5zM720 323h6v1h-6zM720 324h7v2h-7zM720 326h8v1h-8zM723 337h13v1h-13zM724 338h13v1h-13zM724 339h15v1h-15zM726 589h12v1h-12zM728 588h8v1h-8zM733 592h9v1h-9zM736 593h6v1h-6zM737 594h5v1h-5zM738 595h4v3h-4zM739 599h2v2h-2zM739 598h3v1h-3zM739 347h4v1h-4zM739 601h4v1h-4zM740 602h3v1h-3zM740 603h4v1h-4zM741 604h4v1h-4zM741 625h4v4h-4zM741 605h5v2h-5zM742 629h3v5h-3zM742 607h4v7h-4zM742 623h4v2h-4zM743 614h3v9h-3zM751 344h6v1h-6zM752 343h5v1h-5zM752 345h5v1h-5zM755 346h3v1h-3zM757 347h1v1h-1zM793 347h33v1h-33zM797 346h30v1h-30zM806 345h22v1h-22zM810 344h20v1h-20zM813 343h18v1h-18zM814 342h18v1h-18zM816 341h16v1h-16zM817 348h7v1h-7zM817 340h16v1h-16zM819 339h15v1h-15zM820 338h15v1h-15zM821 337h15v1h-15zM823 336h14v1h-14zM824 335h14v1h-14zM825 334h14v1h-14zM826 333h14v1h-14zM827 332h14v1h-14zM828 331h14v1h-14zM829 330h15v1h-15zM829 329h16v1h-16zM830 328h16v1h-16zM831 327h16v1h-16zM832 326h16v1h-16zM833 325h16v1h-16zM833 324h17v1h-17zM834 323h17v1h-17zM835 322h17v1h-17zM836 321h17v1h-17zM836 320h18v1h-18zM837 319h18v1h-18zM837 318h19v1h-19zM838 317h19v1h-19zM839 316h18v1h-18zM839 315h19v1h-19zM840 314h19v1h-19zM840 312h20v2h-20zM840 253h37v10h-37zM841 311h20v1h-20zM841 309h21v2h-21zM841 252h36v1h-36zM841 263h36v3h-36zM841 251h37v1h-37zM842 308h21v1h-21zM842 307h22v1h-22zM842 306h23v1h-23zM842 266h35v2h-35zM842 249h36v2h-36zM843 305h22v1h-22zM843 304h23v1h-23zM843 302h24v2h-24zM843 268h34v3h-34zM843 248h35v1h-35zM844 300h24v2h-24zM844 298h25v2h-25zM844 296h26v2h-26zM844 271h33v3h-33zM844 247h34v1h-34zM844 246h35v1h-35zM845 294h26v2h-26zM845 292h27v2h-27zM845 290h28v2h-28zM845 287h29v3h-29zM845 285h30v2h-30zM845 278h31v6h-31zM845 274h32v4h-32zM845 245h34v1h-34zM846 284h29v1h-29zM853 244h27v1h-27zM868 243h12v1h-12z"/>
<path fill="#00ecdc" d="M706 672h2v1h-2zM706 671h5v1h-5zM706 670h8v1h-8zM707 669h10v1h-10zM707 668h13v1h-13zM708 667h15v1h-15zM708 666h16v1h-16zM709 663h15v3h-15zM710 639h13v1h-13zM710 661h14v2h-14zM711 640h12v2h-12zM711 659h13v2h-13zM712 642h11v1h-11zM712 658h13v1h-13zM713 643h11v2h-11zM713 656h12v2h-12zM714 618h5v2h-5zM714 620h6v2h-6zM714 622h7v1h-7zM714 645h10v3h-10zM714 654h11v2h-11zM715 615h4v3h-4zM715 623h8v1h-8zM715 648h9v1h-9zM715 649h10v5h-10zM715 625h26v1h-26zM715 624h27v1h-27zM716 611h3v4h-3zM716 638h7v1h-7zM716 626h25v2h-25zM717 609h3v2h-3zM717 608h4v1h-4zM717 628h24v1h-24zM717 629h25v1h-25zM718 605h3v1h-3zM718 606h4v2h-4zM718 630h24v1h-24zM719 603h2v2h-2zM719 602h3v1h-3zM719 631h23v1h-23zM720 599h2v3h-2zM720 598h3v1h-3zM720 297h4v1h-4zM720 597h4v1h-4zM720 298h6v1h-6zM720 299h7v1h-7zM720 300h9v1h-9zM720 301h10v1h-10zM720 302h11v2h-11zM720 304h12v1h-12zM720 306h12v1h-12zM720 305h13v1h-13zM720 632h22v2h-22zM721 295h1v1h-1zM721 296h2v1h-2zM721 596h4v1h-4zM721 308h10v2h-10zM721 311h10v5h-10zM721 307h11v1h-11zM721 634h19v1h-19zM722 250h1v7h-1zM722 259h1v3h-1zM722 257h2v2h-2zM722 595h5v1h-5zM722 636h6v1h-6zM722 310h9v1h-9zM722 316h9v1h-9zM722 317h10v1h-10zM722 635h12v1h-12zM723 318h10v1h-10zM723 319h11v1h-11zM723 594h14v1h-14zM724 320h11v1h-11zM725 321h10v1h-10zM725 322h11v1h-11zM725 593h11v1h-11zM726 323h10v1h-10zM727 324h10v2h-10zM728 326h10v2h-10zM729 592h4v1h-4zM729 328h10v1h-10zM729 329h11v1h-11zM730 330h12v1h-12zM730 331h13v1h-13zM731 332h14v1h-14zM732 333h15v1h-15zM733 595h5v1h-5zM733 334h18v1h-18zM734 335h18v1h-18zM735 596h3v1h-3zM735 623h7v1h-7zM735 336h19v1h-19zM736 597h2v1h-2zM736 598h3v1h-3zM736 337h21v1h-21zM737 599h2v2h-2zM737 622h6v1h-6zM737 338h20v1h-20zM738 601h1v1h-1zM738 602h2v2h-2zM738 609h4v3h-4zM738 620h5v2h-5zM739 604h2v3h-2zM739 607h3v2h-3zM739 612h3v2h-3zM739 614h4v1h-4zM739 617h4v3h-4zM739 339h18v1h-18zM740 615h3v2h-3zM740 340h22v1h-22zM741 341h22v1h-22zM746 342h20v1h-20zM749 343h3v1h-3zM750 344h1v1h-1zM751 649h4v5h-4zM752 654h2v1h-2zM757 343h12v1h-12zM757 345h49v1h-49zM757 344h53v1h-53zM769 346h28v1h-28zM781 343h32v1h-32zM786 342h28v1h-28zM789 341h27v1h-27zM793 340h24v1h-24zM799 339h20v1h-20zM802 338h18v1h-18zM805 337h16v1h-16zM807 336h16v1h-16zM809 335h15v1h-15zM811 334h14v1h-14zM812 333h14v1h-14zM814 332h13v1h-13zM815 331h13v1h-13zM816 330h13v1h-13zM817 329h12v1h-12zM819 328h11v1h-11zM820 327h11v1h-11zM820 326h12v1h-12zM821 325h12v1h-12zM822 324h11v1h-11zM823 323h11v1h-11zM824 322h11v1h-11zM824 321h12v1h-12zM825 320h11v1h-11zM825 319h12v1h-12zM826 318h11v1h-11zM826 317h12v1h-12zM827 315h12v2h-12zM828 313h12v2h-12zM829 254h11v9h-11zM829 312h11v1h-11zM829 263h12v3h-12zM829 311h12v1h-12zM830 253h10v1h-10zM830 251h11v2h-11zM830 309h11v2h-11zM830 250h12v1h-12zM830 266h12v2h-12zM830 308h12v1h-12zM830 268h13v2h-13zM831 249h11v1h-11zM831 306h11v2h-11zM831 248h12v1h-12zM831 270h12v1h-12zM831 305h12v1h-12zM831 247h13v1h-13zM831 271h13v1h-13zM832 302h11v3h-11zM832 246h12v1h-12zM832 272h12v2h-12zM832 301h12v1h-12zM833 297h11v4h-11zM833 274h12v3h-12zM834 296h10v1h-10zM834 277h11v7h-11zM834 285h11v11h-11zM834 284h12v1h-12zM838 245h7v1h-7z"/>
<path fill="#00b48c" d="M719 611h2v6h-2zM719 617h3v2h-3zM719 619h4v1h-4zM720 609h2v2h-2zM720 620h4v1h-4zM720 621h18v1h-18zM721 279h2v8h-2zM721 603h2v3h-2zM721 608h2v1h-2zM721 275h3v4h-3zM721 287h3v2h-3zM721 268h4v7h-4zM721 289h4v2h-4zM721 267h5v1h-5zM721 291h5v2h-5zM721 293h6v1h-6zM721 294h7v1h-7zM721 622h16v1h-16zM722 602h1v1h-1zM722 606h1v2h-1zM722 600h2v2h-2zM722 599h3v1h-3zM722 264h4v3h-4zM722 249h5v1h-5zM722 262h5v2h-5zM722 295h7v1h-7zM722 637h12v1h-12zM723 598h3v1h-3zM723 250h4v7h-4zM723 259h4v3h-4zM723 296h8v1h-8zM723 639h10v4h-10zM723 638h11v1h-11zM723 623h12v1h-12zM724 666h2v1h-2zM724 257h3v2h-3zM724 597h3v1h-3zM724 665h5v1h-5zM724 659h7v3h-7zM724 297h8v1h-8zM724 643h8v6h-8zM724 662h8v3h-8zM725 652h6v7h-6zM725 649h7v3h-7zM725 596h10v1h-10zM726 298h6v1h-6zM727 299h6v1h-6zM727 595h6v1h-6zM728 636h6v1h-6zM729 300h4v1h-4zM730 301h3v1h-3zM731 302h3v2h-3zM731 308h3v5h-3zM731 313h4v3h-4zM731 316h5v1h-5zM732 304h2v1h-2zM732 306h2v2h-2zM732 317h4v1h-4zM733 305h1v1h-1zM733 597h3v1h-3zM733 318h4v1h-4zM734 598h2v1h-2zM734 319h4v1h-4zM734 620h4v1h-4zM735 599h2v1h-2zM735 320h4v1h-4zM735 619h4v1h-4zM735 321h5v1h-5zM736 600h1v1h-1zM736 601h2v1h-2zM736 618h3v1h-3zM736 322h5v1h-5zM736 323h6v1h-6zM737 602h1v2h-1zM737 609h1v3h-1zM737 604h2v5h-2zM737 612h2v3h-2zM737 617h2v1h-2zM737 615h3v2h-3zM737 324h6v1h-6zM737 325h7v1h-7zM738 326h7v1h-7zM738 327h9v1h-9zM739 328h9v1h-9zM740 329h9v1h-9zM742 330h9v1h-9zM743 331h10v1h-10zM745 332h10v1h-10zM746 659h1v1h-1zM746 658h4v1h-4zM746 654h6v1h-6zM746 657h7v1h-7zM746 656h10v1h-10zM746 655h13v1h-13zM747 649h4v5h-4zM747 333h10v1h-10zM748 647h28v2h-28zM749 646h16v1h-16zM750 645h13v1h-13zM751 334h6v1h-6zM752 335h5v1h-5zM752 644h9v1h-9zM754 336h6v1h-6zM754 654h8v1h-8zM755 643h4v1h-4zM755 653h10v1h-10zM755 652h13v1h-13zM755 651h16v1h-16zM755 650h19v1h-19zM755 649h21v1h-21zM757 337h8v1h-8zM757 338h14v1h-14zM757 339h42v1h-42zM762 340h31v1h-31zM763 341h26v1h-26zM766 342h20v1h-20zM769 343h12v1h-12zM770 646h6v1h-6zM772 645h1v1h-1zM777 338h25v1h-25zM784 337h21v1h-21zM788 336h19v1h-19zM792 335h17v1h-17zM796 334h15v1h-15zM800 333h12v1h-12zM802 332h12v1h-12zM804 331h11v1h-11zM806 330h10v1h-10zM807 329h10v1h-10zM809 328h10v1h-10zM810 327h10v1h-10zM811 326h9v1h-9zM812 325h9v1h-9zM814 324h8v1h-8zM814 323h9v1h-9zM815 322h9v1h-9zM816 321h8v1h-8zM817 319h8v2h-8zM818 318h8v1h-8zM819 317h7v1h-7zM819 316h8v1h-8zM820 315h7v1h-7zM820 314h8v1h-8zM821 313h7v1h-7zM821 312h8v1h-8zM822 311h7v1h-7zM822 310h8v1h-8zM823 257h6v9h-6zM823 266h7v4h-7zM823 308h7v2h-7zM824 254h5v3h-5zM824 253h6v1h-6zM824 270h7v2h-7zM824 305h7v3h-7zM825 250h5v3h-5zM825 247h6v3h-6zM825 246h7v1h-7zM825 272h7v2h-7zM825 302h7v3h-7zM826 301h6v1h-6zM826 274h7v2h-7zM826 300h7v1h-7zM827 276h6v1h-6zM827 297h6v3h-6zM827 277h7v1h-7zM827 296h7v1h-7zM828 278h6v3h-6zM828 282h6v14h-6zM829 281h5v1h-5z"/>
<path fill="#00803a" d="M721 611h2v5h-2zM721 616h3v1h-3zM722 610h1v1h-1zM722 609h2v1h-2zM722 617h2v1h-2zM722 618h3v1h-3zM723 604h1v5h-1zM723 602h2v2h-2zM723 281h4v4h-4zM723 279h5v2h-5zM723 285h5v1h-5zM723 286h6v1h-6zM723 619h12v1h-12zM724 601h1v1h-1zM724 600h2v1h-2zM724 278h4v1h-4zM724 275h5v3h-5zM724 287h6v2h-6zM724 620h10v1h-10zM725 599h2v1h-2zM725 268h3v5h-3zM725 273h4v2h-4zM725 289h6v1h-6zM725 290h7v1h-7zM726 265h3v3h-3zM726 264h4v1h-4zM726 291h7v1h-7zM726 292h8v1h-8zM726 598h8v1h-8zM727 252h3v5h-3zM727 262h3v2h-3zM727 249h4v3h-4zM727 257h4v5h-4zM727 597h6v1h-6zM727 293h8v1h-8zM728 294h7v1h-7zM729 295h6v1h-6zM731 296h5v1h-5zM731 652h7v4h-7zM731 661h10v1h-10zM731 660h13v1h-13zM731 656h15v4h-15zM732 663h3v1h-3zM732 297h4v2h-4zM732 650h6v2h-6zM732 662h6v1h-6zM732 649h7v1h-7zM732 647h16v2h-16zM732 646h17v1h-17zM732 645h18v1h-18zM732 644h20v1h-20zM732 643h23v1h-23zM733 299h2v3h-2zM733 599h2v1h-2zM733 618h3v1h-3zM733 639h43v4h-43zM734 302h2v9h-2zM734 600h2v1h-2zM734 311h3v2h-3zM734 617h3v1h-3zM734 635h42v4h-42zM735 601h1v1h-1zM735 313h2v1h-2zM735 602h2v2h-2zM735 615h2v2h-2zM735 314h3v2h-3zM736 604h1v11h-1zM736 316h3v2h-3zM737 318h3v1h-3zM738 319h3v1h-3zM739 320h4v1h-4zM740 321h4v1h-4zM740 634h36v1h-36zM741 322h5v1h-5zM742 655h4v1h-4zM742 323h6v1h-6zM743 654h3v1h-3zM743 649h4v2h-4zM743 324h6v1h-6zM744 651h3v3h-3zM744 325h6v1h-6zM745 326h6v1h-6zM747 327h6v1h-6zM747 633h29v1h-29zM748 328h6v1h-6zM749 329h7v1h-7zM751 330h6v1h-6zM753 331h4v1h-4zM755 332h3v1h-3zM755 632h21v1h-21zM757 333h5v1h-5zM757 335h35v1h-35zM757 334h39v1h-39zM759 643h17v1h-17zM760 336h28v1h-28zM761 644h15v1h-15zM763 645h9v1h-9zM763 631h13v1h-13zM765 646h5v1h-5zM765 337h19v1h-19zM771 630h5v1h-5zM771 338h6v1h-6zM772 333h28v1h-28zM773 645h3v1h-3zM780 332h22v1h-22zM785 331h19v1h-19zM788 330h18v1h-18zM791 329h16v1h-16zM794 328h15v1h-15zM797 327h13v1h-13zM798 326h13v1h-13zM800 325h12v1h-12zM801 324h13v1h-13zM803 323h11v1h-11zM804 322h11v1h-11zM805 321h11v1h-11zM806 320h11v1h-11zM807 319h10v1h-10zM808 318h10v1h-10zM809 317h10v1h-10zM810 316h9v1h-9zM810 315h10v1h-10zM811 314h9v1h-9zM812 312h9v2h-9zM813 310h9v2h-9zM814 308h9v2h-9zM815 306h9v2h-9zM816 257h7v12h-7zM816 254h8v3h-8zM816 305h8v1h-8zM816 302h9v3h-9zM817 269h6v1h-6zM817 253h7v1h-7zM817 270h7v2h-7zM817 248h8v5h-8zM817 272h8v1h-8zM817 300h9v2h-9zM817 299h10v1h-10zM818 247h7v1h-7zM818 273h7v1h-7zM818 274h8v2h-8zM818 296h9v3h-9zM819 276h8v2h-8zM819 292h9v4h-9zM820 278h8v3h-8zM820 285h8v7h-8zM821 282h7v3h-7zM821 281h8v1h-8zM824 246h1v1h-1z"/>
<path fill="#2a7d00" d="M723 611h1v1h-1zM723 610h2v1h-2zM723 612h2v4h-2zM724 606h1v4h-1zM724 604h2v2h-2zM724 616h2v1h-2zM724 617h3v1h-3zM725 603h1v1h-1zM725 601h2v2h-2zM725 618h8v1h-8zM726 600h2v1h-2zM727 281h5v1h-5zM727 282h6v2h-6zM727 599h6v1h-6zM727 284h7v1h-7zM728 269h3v4h-3zM728 268h4v1h-4zM728 278h4v3h-4zM728 285h8v1h-8zM729 267h3v1h-3zM729 273h3v5h-3zM729 265h4v2h-4zM729 286h11v1h-11zM730 264h3v1h-3zM730 252h4v5h-4zM730 262h4v2h-4zM730 287h13v2h-13zM731 250h3v2h-3zM731 257h3v5h-3zM731 249h4v1h-4zM731 289h12v1h-12zM732 600h2v1h-2zM732 617h2v1h-2zM732 290h10v1h-10zM733 601h2v1h-2zM733 615h2v2h-2zM733 291h8v1h-8zM734 602h1v2h-1zM734 604h2v1h-2zM734 612h2v3h-2zM734 292h5v1h-5zM735 605h1v7h-1zM735 300h2v2h-2zM735 294h3v2h-3zM735 299h3v1h-3zM735 293h4v1h-4zM736 302h1v6h-1zM736 296h2v3h-2zM736 308h2v2h-2zM736 310h3v1h-3zM737 311h2v1h-2zM737 312h3v2h-3zM738 314h2v2h-2zM738 655h4v1h-4zM738 650h5v1h-5zM738 654h5v1h-5zM738 651h6v3h-6zM739 316h2v1h-2zM739 317h4v1h-4zM739 649h4v1h-4zM740 318h5v1h-5zM741 319h6v1h-6zM743 320h6v1h-6zM744 321h6v1h-6zM746 322h6v1h-6zM747 290h2v1h-2zM748 323h5v1h-5zM749 324h5v1h-5zM750 325h6v1h-6zM751 326h6v1h-6zM753 327h4v1h-4zM754 328h3v1h-3zM756 329h9v1h-9zM757 331h28v1h-28zM757 330h31v1h-31zM758 332h22v1h-22zM762 333h10v1h-10zM769 329h22v1h-22zM773 328h21v1h-21zM776 327h21v1h-21zM780 326h18v1h-18zM783 325h17v1h-17zM785 324h16v1h-16zM786 323h17v1h-17zM787 322h17v1h-17zM789 321h16v1h-16zM790 320h16v1h-16zM792 319h15v1h-15zM793 318h15v1h-15zM795 317h14v1h-14zM796 315h14v2h-14zM797 314h14v1h-14zM798 313h14v1h-14zM799 312h13v1h-13zM799 311h14v1h-14zM800 310h13v1h-13zM801 309h13v1h-13zM802 308h12v1h-12zM803 307h12v1h-12zM804 306h11v1h-11zM804 305h12v1h-12zM805 303h11v2h-11zM806 302h10v1h-10zM806 299h11v3h-11zM806 298h12v1h-12zM807 296h11v2h-11zM807 295h12v1h-12zM808 292h11v3h-11zM809 285h11v7h-11zM809 284h12v1h-12zM810 279h10v2h-10zM810 281h11v3h-11zM811 254h5v15h-5zM811 248h6v6h-6zM811 269h6v4h-6zM811 247h7v1h-7zM811 273h7v3h-7zM811 276h8v2h-8zM811 278h9v1h-9z"/>
<path fill="#82b400" d="M724 611h2v1h-2zM725 606h1v5h-1zM725 612h1v1h-1zM725 613h2v2h-2zM725 615h3v1h-3zM726 604h1v2h-1zM726 603h2v1h-2zM726 616h2v1h-2zM727 602h1v1h-1zM727 601h2v1h-2zM727 617h5v1h-5zM728 600h4v1h-4zM731 601h2v1h-2zM731 615h2v2h-2zM731 269h4v4h-4zM732 602h2v2h-2zM732 614h2v1h-2zM732 273h3v2h-3zM732 267h4v2h-4zM732 275h4v6h-4zM732 281h14v1h-14zM733 604h1v1h-1zM733 612h1v2h-1zM733 605h2v1h-2zM733 611h2v1h-2zM733 265h3v2h-3zM733 264h4v1h-4zM733 282h15v1h-15zM733 283h17v1h-17zM734 606h1v5h-1zM734 254h3v10h-3zM734 251h4v3h-4zM734 250h5v1h-5zM734 284h18v1h-18zM735 249h4v1h-4zM736 285h17v1h-17zM737 301h2v7h-2zM737 300h3v1h-3zM738 296h2v4h-2zM738 308h2v2h-2zM738 295h4v1h-4zM738 294h19v1h-19zM739 310h2v1h-2zM739 311h3v1h-3zM739 292h18v2h-18zM740 312h2v1h-2zM740 313h3v1h-3zM740 314h4v1h-4zM740 315h7v1h-7zM740 286h14v1h-14zM741 316h8v1h-8zM741 291h16v1h-16zM742 290h5v1h-5zM743 317h9v1h-9zM743 287h12v1h-12zM743 288h13v1h-13zM743 289h14v1h-14zM745 318h9v1h-9zM747 319h10v1h-10zM749 290h8v1h-8zM749 295h8v1h-8zM749 320h8v1h-8zM750 321h7v1h-7zM752 322h5v1h-5zM753 323h4v1h-4zM754 324h3v1h-3zM756 325h2v1h-2zM757 328h16v1h-16zM757 327h19v1h-19zM757 326h23v1h-23zM765 329h4v1h-4zM769 325h14v1h-14zM772 324h13v1h-13zM775 323h11v1h-11zM777 322h10v1h-10zM780 321h9v1h-9zM782 320h8v1h-8zM783 319h9v1h-9zM785 318h8v1h-8zM786 317h9v1h-9zM787 316h9v1h-9zM788 315h8v1h-8zM789 314h8v1h-8zM791 313h7v1h-7zM792 312h7v1h-7zM793 311h6v1h-6zM793 310h7v1h-7zM794 309h7v1h-7zM795 308h7v1h-7zM796 307h7v1h-7zM796 306h8v1h-8zM797 305h7v1h-7zM798 303h7v2h-7zM799 301h7v2h-7zM800 298h6v3h-6zM801 295h6v3h-6zM802 292h6v3h-6zM802 291h7v1h-7zM803 288h6v3h-6zM804 284h5v4h-5zM804 283h6v1h-6zM805 279h5v4h-5zM805 276h6v3h-6zM806 248h5v28h-5zM809 247h2v1h-2z"/>
<path fill="#d6e600" d="M726 608h1v3h-1zM726 606h2v2h-2zM726 611h2v1h-2zM726 612h3v1h-3zM727 614h5v1h-5zM727 604h6v2h-6zM727 613h6v1h-6zM728 615h3v2h-3zM728 602h4v2h-4zM729 601h2v1h-2zM730 612h3v1h-3zM731 606h3v1h-3zM732 611h1v1h-1zM732 607h2v1h-2zM732 610h2v1h-2zM733 608h1v2h-1zM735 269h5v4h-5zM735 273h6v1h-6zM735 274h7v1h-7zM736 265h4v4h-4zM736 275h10v1h-10zM736 276h14v1h-14zM736 277h16v1h-16zM736 278h17v1h-17zM736 279h19v1h-19zM736 280h21v1h-21zM737 263h3v2h-3zM737 254h4v9h-4zM738 252h4v2h-4zM738 251h5v1h-5zM739 302h2v5h-2zM739 249h3v1h-3zM739 301h3v1h-3zM739 307h3v1h-3zM739 250h6v1h-6zM740 300h3v1h-3zM740 308h3v1h-3zM740 309h5v1h-5zM740 296h17v4h-17zM741 310h16v1h-16zM742 295h7v1h-7zM742 311h15v2h-15zM743 313h14v1h-14zM744 314h13v1h-13zM746 281h11v1h-11zM747 315h10v1h-10zM748 282h9v1h-9zM749 316h8v1h-8zM750 283h7v1h-7zM750 300h7v1h-7zM752 284h5v1h-5zM752 317h5v1h-5zM753 285h4v1h-4zM754 286h3v1h-3zM754 301h3v1h-3zM754 318h3v1h-3zM755 287h2v1h-2zM755 309h2v1h-2zM756 288h1v1h-1zM756 302h1v1h-1zM756 308h1v1h-1zM757 320h2v1h-2zM757 321h5v1h-5zM757 324h15v1h-15zM757 323h18v1h-18zM757 322h20v1h-20zM758 325h11v1h-11zM766 321h14v1h-14zM770 320h12v1h-12zM772 319h11v1h-11zM774 318h11v1h-11zM776 317h10v1h-10zM778 316h9v1h-9zM780 315h8v1h-8zM781 314h8v1h-8zM782 313h9v1h-9zM783 312h9v1h-9zM784 311h9v1h-9zM785 310h8v1h-8zM786 309h8v1h-8zM787 308h8v1h-8zM788 307h8v1h-8zM789 306h7v1h-7zM789 305h8v1h-8zM790 304h8v1h-8zM791 303h7v1h-7zM791 302h8v1h-8zM792 301h7v1h-7zM792 300h8v1h-8zM793 298h7v2h-7zM794 296h7v2h-7zM795 295h6v1h-6zM795 292h7v3h-7zM796 291h6v1h-6zM796 289h7v2h-7zM797 288h6v1h-6zM797 285h7v3h-7zM798 283h6v2h-6zM798 280h7v3h-7zM799 276h6v4h-6zM799 248h7v1h-7zM799 271h7v5h-7zM800 249h6v5h-6zM800 256h6v15h-6zM801 254h5v2h-5z"/>
<path fill="#ffee00" d="M727 610h5v1h-5zM727 608h6v2h-6zM728 606h3v1h-3zM728 607h4v1h-4zM728 611h4v1h-4zM729 612h1v1h-1zM740 263h17v10h-17zM741 302h15v1h-15zM741 254h16v9h-16zM741 273h16v1h-16zM741 303h16v1h-16zM741 304h21v1h-21zM741 305h23v1h-23zM741 306h48v1h-48zM742 301h12v1h-12zM742 252h15v2h-15zM742 274h15v1h-15zM742 307h46v1h-46zM743 300h7v1h-7zM743 308h13v1h-13zM743 251h14v1h-14zM745 309h10v1h-10zM745 250h16v1h-16zM746 275h11v1h-11zM750 276h7v1h-7zM752 277h5v1h-5zM753 278h4v1h-4zM755 279h2v1h-2zM757 319h15v1h-15zM757 318h17v1h-17zM757 317h19v1h-19zM757 316h21v1h-21zM757 315h23v1h-23zM757 314h24v1h-24zM757 313h25v1h-25zM757 312h26v1h-26zM757 311h27v1h-27zM757 310h28v1h-28zM757 309h29v1h-29zM757 308h30v1h-30zM759 320h11v1h-11zM762 321h4v1h-4zM770 305h19v1h-19zM772 304h18v1h-18zM773 303h18v1h-18zM774 302h17v1h-17zM774 301h18v1h-18zM776 300h16v1h-16zM777 299h16v1h-16zM778 298h15v1h-15zM780 297h14v1h-14zM781 296h13v1h-13zM782 294h13v2h-13zM783 292h12v2h-12zM784 290h12v2h-12zM785 289h11v1h-11zM785 285h12v4h-12zM785 281h13v4h-13zM785 249h15v4h-15zM786 280h12v1h-12zM786 276h13v4h-13zM786 253h14v1h-14zM786 256h14v1h-14zM786 254h15v2h-15zM787 271h12v5h-12zM787 257h13v4h-13zM787 270h13v1h-13zM788 261h12v9h-12zM794 248h5v1h-5z"/>
<path fill="#ffcb00" d="M757 303h16v1h-16zM757 301h17v2h-17zM757 300h19v1h-19zM757 299h20v1h-20zM757 298h21v1h-21zM757 297h23v1h-23zM757 296h24v1h-24zM757 294h25v2h-25zM757 292h26v2h-26zM757 290h27v2h-27zM757 251h28v2h-28zM757 281h28v9h-28zM757 253h29v4h-29zM757 276h29v5h-29zM757 257h30v4h-30zM757 270h30v6h-30zM757 261h31v9h-31zM762 304h10v1h-10zM764 305h6v1h-6zM765 250h20v1h-20zM780 249h5v1h-5z"/>
</g>
<clipPath id="clp2"><polygon points="757,251 888.5,241.5 893,290 896.6,333.6 899.5,351 757,345"/><polygon points="722,249 759.5,250 759.3,260 759,270 758.7,280 758.5,290 758.2,300 757.9,310 757.6,320 757.4,330 757.1,340 756.8,350 756.4,360 755.9,370 755.4,380 754.9,390 754.4,400 754,410 753.5,420 753,430 752.5,440 752,450 751.5,460 751,470 750.5,480 750,490 749.5,500 749.1,510 748.7,520 748.3,530 747.9,540 747.5,550 747.1,560 746.7,570 746.3,580 745.9,590 745.5,600 745.1,610 744.7,620 744.4,630 744,640 742.5,640 705.7,672 706.1,662 706.4,652 706.8,642 707.1,632 707.5,622 707.8,612 708.2,602 708.5,592 708.9,582 709.2,572 709.6,562 709.9,552 710.4,542 710.8,532 711.3,522 711.8,512 712.2,502 712.7,492 713.2,482 713.6,472 714.1,462 714.6,452 715,442 715.5,432 716,422 716.4,412 716.9,402 717.3,392 717.6,382 717.9,372 718.3,362 718.6,352 718.9,342 719.3,332 719.6,322 719.9,312 720.3,302 720.6,292 720.9,282 721.3,272 721.6,262 721.9,252"/><polygon points="706.6,640 705.7,672.4 775.1,649 775.1,630 742,634"/></clipPath>
<path fill="none" stroke="#000" stroke-width="1.0" stroke-linejoin="round" clip-path="url(#clp2)" shape-rendering="crispEdges" d="M762 238.6L887.9 243.2M761.5 253L889.5 258M761 267.4L891.1 272.8M760.5 281.8L892.7 287.6M760 296.2L894.2 302.4M759.5 310.6L895.8 317.2M759 325L897.4 332M758.5 339.4L899 346.8M758 353.8L900.6 361.6M762 238.6L761.5 253L761 267.4L760.5 281.8L760 296.2L759.5 310.6L759 325L758.5 339.4L758 353.8M773.4 239L773.1 253.5L772.8 267.9L772.5 282.3L772.2 296.8L771.9 311.2L771.6 325.6L771.3 340.1L771 354.5M784.9 239.4L784.8 253.9L784.7 268.4L784.5 282.9L784.4 297.3L784.3 311.8L784.2 326.3L784 340.7L783.9 355.2M796.3 239.9L796.4 254.4L796.5 268.9L796.5 283.4L796.6 297.9L796.7 312.4L796.8 326.9L796.8 341.4L796.9 355.9M807.8 240.3L808 254.8L808.3 269.4L808.6 283.9L808.8 298.5L809.1 313L809.3 327.5L809.6 342.1L809.8 356.6M819.2 240.7L819.7 255.3L820.1 269.9L820.6 284.4L821 299L821.5 313.6L821.9 328.2L822.4 342.8L822.8 357.3M830.7 241.1L831.3 255.7L832 270.3L832.6 285L833.2 299.6L833.9 314.2L834.5 328.8L835.1 343.4L835.8 358.1M842.1 241.5L843 256.2L843.8 270.8L844.6 285.5L845.4 300.1L846.3 314.8L847.1 329.5L847.9 344.1L848.7 358.8M853.6 241.9L854.6 256.6L855.6 271.3L856.6 286L857.6 300.7L858.7 315.4L859.7 330.1L860.7 344.8L861.7 359.5M865 242.4L866.2 257.1L867.4 271.8L868.6 286.5L869.8 301.3L871 316L872.2 330.7L873.5 345.5L874.7 360.2M876.5 242.8L877.9 257.5L879.3 272.3L880.7 287.1L882 301.8L883.4 316.6L884.8 331.4L886.2 346.1L887.6 360.9M887.9 243.2L889.5 258L891.1 272.8L892.7 287.6L894.2 302.4L895.8 317.2L897.4 332L899 346.8L900.6 361.6M718.2 365L755.3 352M717.5 384.3L754.4 371.3M716.8 403.6L753.4 390.6M715.9 422.9L752.5 409.9M715 442.2L751.5 429.2M714.1 461.5L750.5 448.5M713.2 480.8L749.6 467.8M712.3 500.1L748.6 487.1M711.4 519.4L747.7 506.4M710.5 538.7L747 525.7M709.7 558L746.2 545M736.7 358.5L735.9 377.8L735.1 397.1L734.2 416.4L733.3 435.7L732.3 455L731.4 474.3L730.5 493.6L729.6 512.9L728.7 532.2L728 551.5M722 250L721.3 270L720.7 290L720 310L719.3 330L718.7 350L718 370L717.3 390L716.5 410L715.6 430L714.7 450L713.7 470L712.8 490L711.9 510L710.9 530L710 550L709.3 570L708.6 590L707.9 610L707.2 630L706.5 650L705.8 670L705.7 672.4M758 252L757.5 272L756.9 292L756.4 312L755.8 332L755.3 352L754.3 372L753.3 392L752.4 412L751.4 432L750.4 452L749.4 472L748.4 492L747.5 512L746.7 532L745.9 552L745.1 572L744.3 592L743.5 612L742.8 632M706.6 645L705.7 672.4L775.1 649L775.1 636"/>
<path fill="none" stroke="#000" stroke-width="1.0" stroke-linejoin="round" clip-path="url(#clp2)" shape-rendering="crispEdges" d="M738.5 258.3L746.9 254.5L754.5 259.9L756 270.6L749.9 278.2L740.7 279.8L735.4 272.9L736.2 264.5L738.5 258.3M739.2 296.6L746.1 293.5L752.2 297.3L753 307.3L747.6 313.4L740 312.6L736.2 305.7L739.2 296.6M738.5 258.3L727.8 249.9M746.9 254.5L745.3 247.6M754.5 259.9L758.3 253.8M756 270.6L758.3 270.6M749.9 278.2L758.3 285.9M749.9 278.2L746.9 290.5M740.7 279.8L736.2 284.3M735.4 272.9L721.6 288.9M736.2 264.5L733.9 270.6L720.9 266M733.9 270.6L721.6 288.9M727.8 249.9L733.9 270.6M727.8 249.9L720.9 255.3M746.1 293.5L746.9 290.5M752.2 297.3L758.3 292.8M753 307.3L758.3 305.7M747.6 313.4L754.5 325.6M740 312.6L737.7 322.6M736.2 305.7L721.6 314.9M739.2 296.6L736.2 284.3M736.2 284.3L721.6 288.9M736.2 284.3L746.9 290.5L758.3 285.9M737.7 322.6L754.5 325.6M737.7 322.6L721.6 345.5M721.6 314.9L737.7 322.6M721.6 345.5L757.6 334.8"/>
<path fill="none" stroke="#000" stroke-width="1.0" stroke-linejoin="round" clip-path="url(#clp2)" shape-rendering="crispEdges" d="M734.8 611.7L742.8 615.9M732.8 617.1L737.8 628.5M729.5 619.3L729.6 633.5M726.1 617.3L721.3 628.9M724 612L716.1 616.6M724 605.3L716 601.1M726 599.9L721 588.5M729.3 597.7L729.2 583.5M732.7 599.7L737.5 588.1M734.8 605L742.7 600.4M735.1 608.5L733.4 616.1L729.4 619.3L725.4 616.1L723.7 608.5L725.4 600.9L729.4 597.7L733.4 600.9L735.1 608.5"/>
<path fill="none" stroke="#000" stroke-width="1.0" stroke-linejoin="round" clip-path="url(#clp2)" shape-rendering="crispEdges" d="M720 667.6L720 640M734 662.9L734 640M748 658.1L748 640M762 653.4L762 640"/>
<path d="M759 252L759.4 295" stroke="#ee0000" stroke-width="1.9" fill="none"/>
<g transform="rotate(14 744.6 265.2)"><ellipse cx="744.6" cy="265.2" rx="3.9" ry="7" fill="#ffee00" stroke="#000" stroke-width=".8"/><ellipse cx="744.6" cy="265.2" rx="2.15" ry="4.34" fill="none" stroke="#000" stroke-width=".6"/><path d="M740.7 265.2H742.46M746.75 265.2H748.5M744.6 258.2V260.86M744.6 269.54V272.2" stroke="#000" stroke-width=".5"/></g>
<g transform="rotate(14 743 303.5)"><ellipse cx="743" cy="303.5" rx="3.4" ry="5.8" fill="#ffee00" stroke="#000" stroke-width=".8"/><ellipse cx="743" cy="303.5" rx="1.87" ry="3.60" fill="none" stroke="#000" stroke-width=".6"/><path d="M739.6 303.5H741.13M744.87 303.5H746.4M743 297.7V299.90M743 307.10V309.3" stroke="#000" stroke-width=".5"/></g>
<g transform="rotate(6 729.4 608.5)"><ellipse cx="729.4" cy="608.5" rx="3.8" ry="7.2" fill="#ffee00" stroke="#000" stroke-width=".8"/><ellipse cx="729.4" cy="608.5" rx="2.09" ry="4.46" fill="none" stroke="#000" stroke-width=".6"/><path d="M725.6 608.5H727.31M731.49 608.5H733.1999999999999M729.4 601.3V604.04M729.4 612.96V615.7" stroke="#000" stroke-width=".5"/></g>
<g shape-rendering="crispEdges">
<path fill="#4f008c" d="M801 508h38v2h-38zM801 505h39v3h-39zM801 501h40v4h-40zM801 499h41v2h-41zM801 498h42v1h-42zM801 496h43v2h-43zM801 494h44v2h-44zM802 514h34v1h-34zM802 513h35v1h-35zM802 511h36v2h-36zM802 510h37v1h-37zM802 493h44v1h-44zM802 491h45v2h-45zM802 489h46v2h-46zM802 488h47v1h-47zM803 516h20v1h-20zM803 515h23v1h-23zM803 486h47v2h-47zM803 485h48v1h-48zM804 517h16v1h-16zM804 484h48v1h-48zM804 483h49v1h-49zM804 482h50v1h-50zM805 519h6v1h-6zM805 518h12v1h-12zM805 481h49v1h-49zM805 480h50v1h-50zM805 479h51v1h-51zM806 478h50v1h-50zM806 477h51v1h-51zM806 476h52v1h-52zM807 475h51v1h-51zM807 473h52v2h-52zM808 471h52v2h-52zM808 469h53v2h-53zM808 467h54v2h-54zM808 465h55v2h-55zM808 462h56v3h-56zM809 460h56v2h-56zM809 459h57v1h-57zM810 457h56v2h-56zM811 456h55v1h-55zM811 455h56v1h-56zM812 454h55v1h-55zM813 452h54v2h-54zM814 451h53v1h-53zM815 450h52v1h-52zM816 449h51v1h-51zM817 447h50v2h-50zM818 445h49v2h-49zM819 425h43v2h-43zM819 427h44v3h-44zM819 430h45v3h-45zM819 433h46v5h-46zM819 438h47v5h-47zM819 443h48v2h-48zM820 422h41v2h-41zM820 424h42v1h-42zM821 420h38v1h-38zM821 421h39v1h-39zM822 418h36v1h-36zM822 419h37v1h-37zM823 416h33v1h-33zM823 417h34v1h-34zM824 415h31v1h-31zM825 414h30v1h-30zM826 413h28v1h-28zM827 412h26v1h-26zM828 410h23v1h-23zM828 411h24v1h-24zM829 409h21v1h-21zM831 408h19v1h-19zM832 407h17v1h-17zM833 406h15v1h-15zM834 405h13v1h-13zM835 404h11v1h-11zM837 403h8v1h-8zM839 402h5v1h-5z"/>
<path fill="#3200b4" d="M745 565h9v1h-9zM746 564h10v1h-10zM746 563h12v1h-12zM746 562h15v1h-15zM746 561h19v1h-19zM746 559h30v2h-30zM746 558h32v1h-32zM746 557h33v1h-33zM746 556h34v1h-34zM746 555h35v1h-35zM746 554h37v1h-37zM746 553h38v1h-38zM746 552h40v1h-40zM746 551h42v1h-42zM746 550h45v1h-45zM746 549h48v1h-48zM746 548h53v1h-53zM746 547h59v1h-59zM746 546h62v1h-62zM746 545h63v1h-63zM746 544h65v1h-65zM746 543h67v1h-67zM746 542h68v1h-68zM746 541h70v1h-70zM746 540h72v1h-72zM746 539h74v1h-74zM746 538h75v1h-75zM746 537h77v1h-77zM746 536h79v1h-79zM746 535h81v1h-81zM747 566h5v1h-5zM747 515h56v2h-56zM747 517h57v1h-57zM747 518h58v2h-58zM747 534h82v1h-82zM747 533h84v1h-84zM747 532h85v1h-85zM747 531h87v1h-87zM747 530h89v1h-89zM747 529h95v1h-95zM747 528h98v1h-98zM747 527h100v1h-100zM747 526h102v1h-102zM747 525h104v1h-104zM747 524h105v1h-105zM747 523h107v1h-107zM747 522h108v1h-108zM747 521h109v1h-109zM747 520h110v1h-110zM748 567h3v1h-3zM748 513h54v2h-54zM749 512h53v1h-53zM750 511h52v1h-52zM751 510h51v1h-51zM752 509h49v1h-49zM753 508h48v1h-48zM754 506h47v2h-47zM755 504h46v2h-46zM756 501h45v3h-45zM757 498h44v3h-44zM758 496h43v2h-43zM759 494h42v2h-42zM759 493h43v1h-43zM760 490h42v3h-42zM761 488h41v2h-41zM761 487h42v1h-42zM762 485h41v2h-41zM762 484h42v1h-42zM763 482h41v2h-41zM763 480h42v2h-42zM764 479h41v1h-41zM764 477h42v2h-42zM765 476h41v1h-41zM765 474h42v2h-42zM766 473h41v1h-41zM766 471h42v2h-42zM767 468h41v3h-41zM768 465h40v3h-40zM769 462h39v3h-39zM770 459h39v3h-39zM771 457h39v2h-39zM771 455h40v2h-40zM772 454h40v1h-40zM772 452h41v2h-41zM772 451h42v1h-42zM772 450h43v1h-43zM773 449h43v1h-43zM773 447h44v2h-44zM773 446h45v1h-45zM774 445h44v1h-44zM774 443h45v2h-45zM775 441h44v2h-44zM776 439h43v2h-43zM777 437h42v2h-42zM778 435h41v2h-41zM779 432h40v3h-40zM780 430h39v2h-39zM781 426h38v4h-38zM782 425h37v1h-37zM782 422h38v3h-38zM782 420h39v2h-39zM782 419h40v1h-40zM783 418h39v1h-39zM783 416h40v2h-40zM783 415h41v1h-41zM783 414h42v1h-42zM784 413h42v1h-42zM784 412h43v1h-43zM784 410h44v2h-44zM784 409h45v1h-45zM785 408h46v1h-46zM785 407h47v1h-47zM785 406h48v1h-48zM786 405h48v1h-48zM786 404h49v1h-49zM787 403h50v1h-50zM787 402h52v1h-52zM788 400h97v2h-97zM789 399h95v1h-95zM790 397h93v1h-93zM790 398h94v1h-94zM791 396h91v1h-91zM792 394h89v2h-89zM793 393h87v1h-87zM794 392h85v1h-85zM795 390h81v1h-81zM795 391h82v1h-82zM796 388h78v1h-78zM796 389h79v1h-79zM797 386h74v1h-74zM797 387h75v1h-75zM798 384h71v1h-71zM798 385h72v1h-72zM799 382h67v1h-67zM799 383h69v1h-69zM800 379h62v1h-62zM800 380h64v1h-64zM800 381h65v1h-65zM805 378h55v1h-55zM807 377h52v1h-52zM808 376h50v1h-50zM809 375h47v1h-47zM810 374h45v1h-45zM811 373h42v1h-42zM811 519h47v1h-47zM812 372h40v1h-40zM813 370h11v1h-11zM813 371h37v1h-37zM814 368h3v1h-3zM814 369h6v1h-6zM817 518h42v1h-42zM820 517h40v1h-40zM823 516h38v1h-38zM826 515h36v1h-36zM835 370h13v1h-13zM836 514h28v1h-28zM837 369h8v1h-8zM837 513h31v1h-31zM838 512h34v1h-34zM838 511h37v1h-37zM839 510h39v1h-39zM839 509h42v1h-42zM839 508h44v1h-44zM840 507h46v1h-46zM840 506h51v1h-51zM840 505h55v1h-55zM841 504h56v1h-56zM841 503h58v1h-58zM841 502h61v1h-61zM841 501h63v1h-63zM842 500h64v1h-64zM842 499h65v1h-65zM843 498h63v1h-63zM844 402h42v1h-42zM844 496h59v1h-59zM844 497h61v1h-61zM845 403h41v1h-41zM845 494h56v1h-56zM845 495h57v1h-57zM846 404h41v1h-41zM846 493h54v1h-54zM847 405h40v1h-40zM847 491h52v1h-52zM847 492h53v1h-53zM848 406h39v1h-39zM848 489h50v1h-50zM848 490h51v1h-51zM849 407h39v1h-39zM849 488h49v1h-49zM850 408h38v1h-38zM850 409h39v1h-39zM850 486h47v1h-47zM850 487h48v1h-48zM851 410h38v1h-38zM851 485h46v1h-46zM852 411h37v1h-37zM852 484h44v1h-44zM853 412h37v1h-37zM853 483h43v1h-43zM854 413h36v1h-36zM854 481h41v1h-41zM854 482h42v1h-42zM855 414h35v1h-35zM855 415h36v1h-36zM855 480h40v1h-40zM856 416h35v1h-35zM856 478h38v1h-38zM856 479h39v1h-39zM857 417h34v1h-34zM857 477h37v1h-37zM858 418h33v1h-33zM858 475h36v2h-36zM859 419h32v2h-32zM859 473h35v2h-35zM860 421h31v1h-31zM860 471h34v2h-34zM861 422h31v2h-31zM861 469h32v1h-32zM861 470h33v1h-33zM862 424h30v3h-30zM862 468h31v1h-31zM862 467h32v1h-32zM863 427h29v3h-29zM863 465h31v2h-31zM864 430h28v3h-28zM864 462h30v3h-30zM865 433h27v5h-27zM865 460h29v2h-29zM866 438h26v3h-26zM866 441h27v2h-27zM866 456h28v4h-28zM867 443h26v4h-26zM867 447h27v9h-27z"/>
<path fill="#1a00dc" d="M745 566h2v1h-2zM745 567h3v1h-3zM745 581h3v1h-3zM745 580h7v1h-7zM745 579h10v1h-10zM745 578h13v1h-13zM745 577h15v1h-15zM745 576h17v1h-17zM745 575h19v1h-19zM745 574h22v1h-22zM745 573h24v1h-24zM745 572h27v1h-27zM745 571h29v1h-29zM745 570h32v1h-32zM745 569h34v1h-34zM745 568h36v1h-36zM748 512h1v1h-1zM748 511h2v1h-2zM748 510h3v1h-3zM748 509h4v1h-4zM748 508h5v1h-5zM748 506h6v2h-6zM748 504h7v2h-7zM748 501h8v3h-8zM748 498h9v3h-9zM748 496h10v2h-10zM748 495h11v1h-11zM749 493h10v2h-10zM749 490h11v3h-11zM749 487h12v3h-12zM749 484h13v3h-13zM749 480h14v4h-14zM749 477h15v3h-15zM749 475h16v2h-16zM750 474h15v1h-15zM750 471h16v3h-16zM750 468h17v3h-17zM750 465h18v3h-18zM750 462h19v3h-19zM750 459h20v3h-20zM750 455h21v4h-21zM751 450h21v5h-21zM751 446h22v4h-22zM751 443h23v3h-23zM751 441h24v2h-24zM751 439h25v2h-25zM751 437h26v2h-26zM751 435h27v2h-27zM751 432h28v3h-28zM751 430h29v2h-29zM751 426h30v4h-30zM751 425h31v1h-31zM751 567h33v1h-33zM752 419h30v6h-30zM752 414h31v5h-31zM752 409h32v5h-32zM752 406h33v3h-33zM752 405h34v1h-34zM752 566h34v1h-34zM753 404h33v1h-33zM753 402h34v2h-34zM753 400h35v2h-35zM753 399h36v1h-36zM753 397h37v2h-37zM753 396h38v1h-38zM753 394h39v2h-39zM753 393h40v1h-40zM753 392h41v1h-41zM753 390h42v2h-42zM753 388h43v2h-43zM753 386h44v2h-44zM753 385h45v1h-45zM754 365h13v3h-13zM754 368h14v1h-14zM754 369h15v1h-15zM754 370h16v1h-16zM754 371h17v1h-17zM754 372h18v1h-18zM754 373h20v1h-20zM754 374h23v1h-23zM754 565h34v1h-34zM754 384h44v1h-44zM754 382h45v2h-45zM754 379h46v3h-46zM754 378h51v1h-51zM754 377h53v1h-53zM754 376h54v1h-54zM754 375h55v1h-55zM755 350h6v1h-6zM755 351h7v2h-7zM755 353h8v2h-8zM755 355h9v2h-9zM755 357h10v4h-10zM755 361h11v4h-11zM756 564h34v1h-34zM758 563h34v1h-34zM761 562h34v1h-34zM765 561h34v1h-34zM776 560h29v1h-29zM776 559h33v1h-33zM778 558h33v1h-33zM779 557h35v1h-35zM780 556h37v1h-37zM781 555h38v1h-38zM783 374h27v1h-27zM783 554h38v1h-38zM784 553h40v1h-40zM786 552h40v1h-40zM788 551h40v1h-40zM791 550h39v1h-39zM794 549h39v1h-39zM797 373h14v1h-14zM798 372h14v1h-14zM799 370h14v2h-14zM799 369h15v1h-15zM799 548h36v1h-36zM800 368h14v1h-14zM800 365h102v3h-102zM801 360h100v5h-100zM802 357h99v3h-99zM803 354h98v3h-98zM804 352h97v2h-97zM805 547h33v1h-33zM805 350h96v2h-96zM808 546h32v1h-32zM809 545h33v1h-33zM811 544h34v1h-34zM813 543h34v1h-34zM814 542h36v1h-36zM816 541h36v1h-36zM817 368h85v1h-85zM818 540h36v1h-36zM820 369h17v1h-17zM820 539h36v1h-36zM821 538h37v1h-37zM823 537h37v1h-37zM824 370h11v1h-11zM825 536h37v1h-37zM827 535h38v1h-38zM829 534h40v1h-40zM831 533h43v1h-43zM832 532h46v1h-46zM834 531h49v1h-49zM836 530h52v1h-52zM842 529h50v1h-50zM845 528h51v1h-51zM845 369h57v1h-57zM847 527h52v1h-52zM848 370h54v1h-54zM849 526h53v1h-53zM850 371h52v1h-52zM851 525h53v1h-53zM852 372h50v1h-50zM852 524h54v1h-54zM853 373h49v1h-49zM854 523h54v1h-54zM855 374h47v1h-47zM855 522h55v1h-55zM856 375h46v1h-46zM856 521h55v1h-55zM857 520h55v1h-55zM858 376h44v1h-44zM858 519h56v1h-56zM859 377h43v1h-43zM859 518h55v1h-55zM860 378h42v1h-42zM860 517h54v1h-54zM861 516h53v1h-53zM862 379h40v1h-40zM862 515h52v1h-52zM864 380h38v1h-38zM864 514h49v1h-49zM865 381h37v1h-37zM866 382h36v1h-36zM868 383h34v1h-34zM868 513h45v1h-45zM869 384h33v1h-33zM870 385h33v1h-33zM871 386h32v1h-32zM872 387h31v1h-31zM872 512h41v1h-41zM874 388h29v1h-29zM875 389h28v1h-28zM875 511h38v1h-38zM876 390h27v1h-27zM877 391h26v1h-26zM878 510h35v1h-35zM879 392h24v1h-24zM880 393h23v1h-23zM881 394h22v2h-22zM881 509h32v1h-32zM882 396h21v1h-21zM883 397h20v1h-20zM883 508h30v1h-30zM884 398h19v2h-19zM885 400h18v2h-18zM886 402h17v2h-17zM886 507h27v1h-27zM887 404h16v1h-16zM887 405h17v2h-17zM888 407h16v2h-16zM889 409h15v3h-15zM890 412h14v3h-14zM891 415h14v7h-14zM891 506h22v1h-22zM892 422h13v3h-13zM892 425h14v10h-14zM892 435h15v6h-15zM893 441h14v4h-14zM893 445h15v2h-15zM893 468h16v2h-16zM894 447h14v8h-14zM894 455h15v13h-15zM894 470h15v5h-15zM894 475h16v4h-16zM895 479h15v3h-15zM895 505h18v1h-18zM896 482h14v3h-14zM897 485h14v2h-14zM897 504h15v1h-15zM898 487h13v3h-13zM899 490h12v2h-12zM899 503h13v1h-13zM900 492h11v2h-11zM901 494h10v1h-10zM902 495h10v1h-10zM902 502h10v1h-10zM903 496h9v1h-9zM904 501h8v1h-8zM905 497h7v1h-7zM906 498h6v1h-6zM906 500h6v1h-6zM907 499h5v1h-5z"/>
<path fill="#0000ff" d="M744 596h1v1h-1zM744 595h3v1h-3zM744 594h5v1h-5zM744 593h7v1h-7zM744 592h9v1h-9zM744 591h11v1h-11zM744 590h13v1h-13zM744 589h15v1h-15zM744 588h17v1h-17zM744 587h19v1h-19zM744 586h20v1h-20zM744 585h22v1h-22zM745 584h23v1h-23zM745 583h25v1h-25zM745 582h27v1h-27zM748 581h26v1h-26zM752 580h24v1h-24zM755 579h24v1h-24zM758 578h23v1h-23zM760 577h24v1h-24zM761 350h44v1h-44zM762 576h24v1h-24zM762 352h42v1h-42zM762 351h43v1h-43zM763 354h40v1h-40zM763 353h41v1h-41zM764 575h24v1h-24zM764 355h39v2h-39zM765 360h36v1h-36zM765 357h37v3h-37zM766 361h35v4h-35zM767 574h24v1h-24zM767 365h33v3h-33zM768 368h32v1h-32zM769 573h24v1h-24zM769 369h30v1h-30zM770 370h29v1h-29zM771 371h28v1h-28zM772 572h23v1h-23zM772 372h26v1h-26zM774 373h23v1h-23zM774 571h23v1h-23zM777 374h6v1h-6zM777 570h22v1h-22zM779 569h31v1h-31zM781 568h34v1h-34zM784 567h36v1h-36zM786 566h37v1h-37zM788 565h39v1h-39zM790 564h40v1h-40zM792 563h41v1h-41zM795 562h43v1h-43zM799 561h42v1h-42zM805 560h40v1h-40zM809 559h40v1h-40zM811 558h42v1h-42zM814 557h42v1h-42zM817 556h43v1h-43zM819 555h44v1h-44zM821 554h46v1h-46zM824 553h47v1h-47zM826 552h50v1h-50zM828 551h52v1h-52zM830 550h55v1h-55zM833 549h56v1h-56zM835 548h58v1h-58zM838 547h59v1h-59zM840 546h61v1h-61zM842 545h63v1h-63zM845 544h65v1h-65zM847 543h69v1h-69zM850 542h66v1h-66zM852 541h64v1h-64zM854 540h62v1h-62zM856 539h60v1h-60zM858 538h58v1h-58zM860 537h56v1h-56zM862 536h54v1h-54zM865 535h51v1h-51zM869 534h46v1h-46zM874 533h41v1h-41zM878 532h37v1h-37zM883 531h32v1h-32zM888 530h27v1h-27zM892 529h23v1h-23zM896 528h19v1h-19zM899 527h16v1h-16zM902 526h13v1h-13zM904 525h11v1h-11zM906 524h8v1h-8zM908 523h6v1h-6zM910 522h4v1h-4zM911 521h3v1h-3zM912 520h2v1h-2z"/>
<path fill="#0069ff" d="M744 605h1v1h-1zM744 604h6v1h-6zM744 603h9v1h-9zM744 602h11v1h-11zM744 601h14v1h-14zM744 600h16v1h-16zM744 599h18v1h-18zM744 598h19v1h-19zM744 597h21v1h-21zM745 596h22v1h-22zM747 595h21v1h-21zM749 594h21v1h-21zM751 593h20v1h-20zM753 592h20v1h-20zM755 591h19v1h-19zM757 590h20v1h-20zM759 589h21v1h-21zM761 588h21v1h-21zM763 587h22v1h-22zM764 586h23v1h-23zM766 585h24v1h-24zM768 584h25v1h-25zM770 583h25v1h-25zM772 582h26v1h-26zM774 581h27v1h-27zM776 580h33v1h-33zM779 579h41v1h-41zM781 578h45v1h-45zM784 577h47v1h-47zM786 576h53v1h-53zM788 575h59v1h-59zM791 574h62v1h-62zM793 573h66v1h-66zM795 572h69v1h-69zM797 571h74v1h-74zM799 570h79v1h-79zM810 569h73v1h-73zM815 568h72v1h-72zM820 567h71v1h-71zM823 566h71v1h-71zM827 565h70v1h-70zM830 564h70v1h-70zM833 563h69v1h-69zM838 562h67v1h-67zM841 561h66v1h-66zM845 560h64v1h-64zM849 559h62v1h-62zM853 558h59v1h-59zM856 557h58v1h-58zM860 556h55v1h-55zM863 555h55v1h-55zM867 554h50v1h-50zM871 553h46v1h-46zM876 552h41v1h-41zM880 551h37v1h-37zM885 550h32v1h-32zM889 549h28v1h-28zM893 548h24v1h-24zM897 547h20v1h-20zM901 546h16v1h-16zM905 545h12v1h-12zM910 544h6v1h-6z"/>
<path fill="#00b9ff" d="M743 617h2v1h-2zM743 616h5v1h-5zM743 615h7v1h-7zM744 614h8v1h-8zM744 613h11v1h-11zM744 612h13v1h-13zM744 611h15v1h-15zM744 610h18v1h-18zM744 609h20v1h-20zM744 608h22v1h-22zM744 607h24v1h-24zM744 606h26v1h-26zM745 605h27v1h-27zM750 604h23v1h-23zM753 603h22v1h-22zM755 602h22v1h-22zM758 601h20v1h-20zM760 600h20v1h-20zM762 599h20v1h-20zM763 598h22v1h-22zM765 597h22v1h-22zM767 596h23v1h-23zM768 595h26v1h-26zM770 594h28v1h-28zM771 593h31v1h-31zM773 592h56v1h-56zM774 591h63v1h-63zM777 590h66v1h-66zM780 589h73v1h-73zM782 588h88v1h-88zM785 587h94v1h-94zM787 586h99v1h-99zM790 585h101v1h-101zM793 584h101v1h-101zM795 583h102v1h-102zM798 582h102v1h-102zM801 581h102v1h-102zM809 580h98v1h-98zM820 579h91v1h-91zM826 578h90v1h-90zM831 577h90v1h-90zM839 576h82v1h-82zM847 575h74v1h-74zM853 574h67v1h-67zM859 573h61v1h-61zM864 572h56v1h-56zM871 571h49v1h-49zM878 570h42v1h-42zM883 569h37v1h-37zM887 568h33v1h-33zM891 567h29v1h-29zM894 566h25v1h-25zM897 565h22v1h-22zM900 564h19v1h-19zM902 563h17v1h-17zM905 562h14v1h-14zM907 561h11v1h-11zM909 560h9v1h-9zM911 559h7v1h-7zM912 558h6v1h-6zM914 557h4v1h-4zM915 556h3v1h-3z"/>
<path fill="#00ecdc" d="M743 628h2v1h-2zM743 627h4v1h-4zM743 626h7v1h-7zM743 625h9v1h-9zM743 624h11v1h-11zM743 623h13v1h-13zM743 622h15v1h-15zM743 621h17v1h-17zM743 620h20v1h-20zM743 619h22v1h-22zM743 618h24v1h-24zM745 617h24v1h-24zM748 616h24v1h-24zM750 615h25v1h-25zM752 614h24v1h-24zM755 613h22v1h-22zM757 612h21v1h-21zM759 611h20v1h-20zM762 610h19v1h-19zM764 609h18v1h-18zM766 608h18v1h-18zM768 607h19v1h-19zM770 606h19v1h-19zM772 605h22v1h-22zM773 604h33v1h-33zM775 603h65v1h-65zM777 602h67v1h-67zM778 601h97v1h-97zM780 600h103v1h-103zM782 599h111v1h-111zM785 598h110v1h-110zM787 597h110v1h-110zM790 596h109v1h-109zM794 595h108v1h-108zM798 594h107v1h-107zM802 605h1v1h-1zM802 593h108v1h-108zM821 604h16v1h-16zM825 605h9v1h-9zM828 606h4v1h-4zM829 592h93v1h-93zM837 591h85v1h-85zM843 590h79v1h-79zM853 589h69v1h-69zM861 602h9v1h-9zM865 603h1v1h-1zM870 588h52v1h-52zM879 587h43v1h-43zM886 586h36v1h-36zM891 585h31v1h-31zM894 584h27v1h-27zM897 583h24v1h-24zM900 582h21v1h-21zM903 581h18v1h-18zM907 580h14v1h-14zM911 579h10v1h-10zM916 578h5v1h-5z"/>
<path fill="#00b48c" d="M743 634h2v1h-2zM743 633h5v1h-5zM743 632h11v1h-11zM743 631h17v1h-17zM743 630h22v1h-22zM743 629h23v1h-23zM745 628h23v1h-23zM747 627h22v1h-22zM750 626h20v1h-20zM752 625h20v1h-20zM754 624h19v1h-19zM756 623h18v1h-18zM758 622h17v1h-17zM760 621h16v1h-16zM763 620h15v1h-15zM765 619h15v1h-15zM767 618h15v1h-15zM769 617h14v1h-14zM772 616h13v1h-13zM775 615h12v1h-12zM776 614h13v1h-13zM777 613h15v1h-15zM778 612h20v1h-20zM779 611h68v1h-68zM781 610h103v1h-103zM782 609h106v1h-106zM784 608h107v1h-107zM787 607h107v1h-107zM789 606h39v1h-39zM794 605h8v1h-8zM802 612h1v1h-1zM803 605h22v1h-22zM806 604h15v1h-15zM814 612h29v1h-29zM821 613h18v1h-18zM832 606h65v1h-65zM834 605h66v1h-66zM837 604h68v1h-68zM840 603h25v1h-25zM844 602h17v1h-17zM860 611h5v1h-5zM866 611h13v1h-13zM866 603h45v1h-45zM870 602h53v1h-53zM875 601h48v1h-48zM883 600h40v1h-40zM893 599h30v1h-30zM895 598h28v1h-28zM897 597h26v1h-26zM899 596h24v1h-24zM902 595h21v1h-21zM905 594h17v1h-17zM910 593h12v1h-12z"/>
<path fill="#00803a" d="M765 630h1v1h-1zM766 629h6v1h-6zM768 628h10v1h-10zM769 627h15v1h-15zM770 626h15v1h-15zM772 625h14v1h-14zM773 624h14v1h-14zM774 623h14v1h-14zM775 622h15v1h-15zM776 621h16v1h-16zM778 620h16v1h-16zM780 619h17v1h-17zM782 618h69v1h-69zM783 617h76v1h-76zM785 616h83v1h-83zM787 615h89v1h-89zM789 614h96v1h-96zM792 613h29v1h-29zM798 612h4v1h-4zM803 612h11v1h-11zM807 619h35v1h-35zM812 620h22v1h-22zM817 621h9v1h-9zM839 613h54v1h-54zM843 612h58v1h-58zM847 611h13v1h-13zM865 611h1v1h-1zM879 611h31v1h-31zM884 610h34v1h-34zM888 609h36v1h-36zM891 608h33v1h-33zM894 607h30v1h-30zM897 606h27v1h-27zM900 605h24v1h-24zM905 604h18v1h-18zM911 603h12v1h-12z"/>
<path fill="#2a7d00" d="M785 626h5v1h-5zM786 625h10v1h-10zM787 624h15v1h-15zM788 623h21v1h-21zM790 622h27v1h-27zM792 621h25v1h-25zM794 620h18v1h-18zM797 619h10v1h-10z"/>
</g>
<path fill="none" stroke="#000" stroke-width="1.0" stroke-linejoin="round" shape-rendering="crispEdges" d="M785.3 356.8L784.5 380.4L784.5 416.1L781.2 451.1L779.6 486.8L778 524.1L775.6 559.9L774.7 594L773.9 624.9M813.7 358.4L813.7 382L813.7 417.7L812.1 453.5L810.5 488.4L806.4 522.5L804 559.9L803.2 594L802.4 618.4M843 360.9L843 384.4L843 421L841.4 458.4L839.7 494.1L836.5 530.6L831.6 559.9L830 592.4L832.4 615.1M871.4 358.4L871.4 386.1L872.2 425.9L862.5 464.9L860.9 506.2L860.1 555L858.4 578.6L862.5 613.5M886.1 481.1L886.9 507.9L886.1 545.2L890.1 577.7L892.6 610.2M756.1 378.7L784.5 380.4L813.7 382L843 384.4L871.4 386.1L900.7 388.5M754.4 416.1L784.5 416.1L813.7 417.7L843 421L872.2 425.9L904.7 425.9M752.8 451.1L781.2 451.1L812.1 453.5L841.4 458.4L862.5 464.9L886.9 455.1L908 463.2M872.2 425.9L886.9 455.1M862.5 464.9L886.1 481.1L908 463.2M750.4 487.6L779.6 486.8L810.5 488.4L839.7 494.1L860.9 506.2L886.9 507.9L911.2 499.7M748.7 524.1L778 523.3L806.4 522.5L836.5 530.6L886.1 545.2L912.9 537.1M747.1 559.9L775.6 559.9L804 559.9L831.6 559.9L860.1 555L886.1 545.2M831.6 559.9L858.4 578.6L890.1 577.7L917.7 572.9M745.5 595.6L774.7 594L803.2 594L830 592.4L858.4 578.6M755.2 354L754.2 374L753.2 394L752.3 414L751.3 434L750.3 454L749.3 474L748.3 494L747.4 514L746.6 534L745.8 554L745 574L744.2 594L743.4 614L743 634M899.5 352L900.7 372L901.8 392L903.4 412L905.1 432L906.9 452L908.7 472L910.5 492L912.5 512L914.6 532L916.7 552L918.8 572L921 592L922.5 609.4"/>
<g shape-rendering="crispEdges">
<path fill="#1a00dc" d="M778 356h105v1h-105zM779 355h108v1h-108zM780 353h110v2h-110zM781 352h108v1h-108zM782 351h107v1h-107zM783 350h106v1h-106zM784 348h104v2h-104zM785 346h102v1h-102zM785 347h103v1h-103zM786 343h79v1h-79zM786 344h100v1h-100zM786 345h101v1h-101zM787 341h8v1h-8zM787 342h55v1h-55zM789 357h90v1h-90zM811 358h64v1h-64zM832 359h39v1h-39zM854 360h13v1h-13z"/>
<path fill="#0000ff" d="M724 352h57v1h-57zM724 351h58v1h-58zM724 350h59v1h-59zM724 348h60v2h-60zM727 347h58v1h-58zM730 353h50v1h-50zM732 346h53v1h-53zM737 345h49v1h-49zM741 354h39v1h-39zM742 344h44v1h-44zM747 343h39v1h-39zM751 355h28v1h-28zM752 342h35v1h-35zM757 341h30v1h-30zM767 356h11v1h-11zM886 344h1v1h-1zM887 346h25v1h-25zM887 345h27v1h-27zM888 349h18v1h-18zM888 348h20v1h-20zM888 347h22v1h-22zM889 352h10v1h-10zM889 351h13v1h-13zM889 350h15v1h-15zM890 354h1v1h-1zM890 353h5v1h-5zM897 334h18v1h-18zM897 339h29v1h-29zM897 338h31v1h-31zM897 337h33v1h-33zM897 336h35v1h-35zM897 335h36v1h-36zM898 344h18v1h-18zM898 343h20v1h-20zM898 342h22v1h-22zM898 341h24v1h-24zM898 340h26v1h-26z"/>
<path fill="#0069ff" d="M851 246h2v1h-2zM856 245h11v1h-11zM862 244h19v1h-19zM863 243h27v1h-27zM864 242h28v1h-28zM865 241h30v1h-30zM866 240h31v1h-31zM868 239h32v1h-32zM869 238h33v1h-33zM871 237h34v1h-34zM872 236h35v1h-35zM874 235h36v1h-36zM875 234h37v1h-37zM877 233h38v1h-38zM879 232h38v1h-38zM881 231h39v1h-39zM883 230h39v1h-39zM885 229h39v1h-39zM886 228h28v1h-28zM888 227h6v1h-6z"/>
<path fill="#00b9ff" d="M786 250h10v1h-10zM796 249h14v1h-14zM802 248h23v1h-23zM805 247h34v1h-34zM808 246h43v1h-43zM816 245h40v1h-40zM821 244h41v1h-41zM823 243h40v1h-40zM824 242h40v1h-40zM826 241h39v1h-39zM828 240h38v1h-38zM831 239h37v1h-37zM833 238h36v1h-36zM836 237h35v1h-35zM837 236h35v1h-35zM838 235h36v1h-36zM838 234h37v1h-37zM839 233h38v1h-38zM840 232h39v1h-39zM841 231h40v1h-40zM842 230h41v1h-41zM844 229h41v1h-41zM845 228h41v1h-41zM847 227h41v1h-41zM849 226h25v1h-25zM851 225h3v1h-3z"/>
<path fill="#00ecdc" d="M764 252h4v1h-4zM767 251h15v1h-15zM769 250h17v1h-17zM771 249h25v1h-25zM779 248h23v1h-23zM783 247h22v1h-22zM785 246h23v1h-23zM787 245h29v1h-29zM798 244h23v1h-23zM800 243h23v1h-23zM802 242h22v1h-22zM804 241h22v1h-22zM811 240h17v1h-17zM814 239h17v1h-17zM816 238h17v1h-17zM820 237h16v1h-16zM822 236h15v1h-15zM824 235h14v1h-14zM825 234h13v1h-13zM827 233h12v1h-12zM828 232h12v1h-12zM828 231h13v1h-13zM829 230h13v1h-13zM830 229h14v1h-14zM830 228h15v1h-15zM831 227h16v1h-16zM832 226h17v1h-17zM834 225h17v1h-17zM836 224h3v1h-3z"/>
<path fill="#00b48c" d="M753 251h14v1h-14zM756 252h8v1h-8zM761 250h8v1h-8zM765 249h6v1h-6zM767 248h12v1h-12zM769 247h14v1h-14zM774 246h11v1h-11zM780 245h7v1h-7zM783 244h15v1h-15zM785 243h15v1h-15zM788 242h14v1h-14zM796 241h8v1h-8zM799 240h12v1h-12zM801 239h13v1h-13zM803 238h13v1h-13zM810 237h10v1h-10zM812 236h10v1h-10zM814 235h10v1h-10zM817 234h8v1h-8zM820 233h7v1h-7zM821 232h7v1h-7zM823 231h5v1h-5zM824 230h5v1h-5zM825 229h5v1h-5zM826 228h4v1h-4zM826 227h5v1h-5zM827 226h5v1h-5zM828 225h6v1h-6zM829 224h7v1h-7zM954 600h1v1h-1z"/>
<path fill="#00803a" d="M749 251h4v1h-4zM752 250h9v1h-9zM754 249h11v1h-11zM760 248h7v1h-7zM764 247h5v1h-5zM767 246h7v1h-7zM769 245h11v1h-11zM774 244h9v1h-9zM778 243h7v1h-7zM782 242h6v1h-6zM784 241h12v1h-12zM788 240h11v1h-11zM793 239h8v1h-8zM797 238h6v1h-6zM800 237h10v1h-10zM802 236h10v1h-10zM807 235h7v1h-7zM811 234h6v1h-6zM813 233h7v1h-7zM816 232h5v1h-5zM818 231h5v1h-5zM819 230h5v1h-5zM820 229h5v1h-5zM821 228h5v1h-5zM822 227h4v1h-4zM823 226h4v1h-4zM824 225h4v1h-4zM825 223h3v1h-3zM825 224h4v1h-4zM866 624h2v1h-2zM866 623h9v1h-9zM867 622h15v1h-15zM874 621h15v1h-15zM881 620h14v1h-14zM888 619h11v1h-11zM895 618h7v1h-7zM899 617h6v1h-6zM903 616h6v1h-6zM907 615h5v1h-5zM911 614h4v1h-4zM915 613h3v1h-3zM919 612h3v1h-3zM923 611h2v1h-2zM925 610h2v1h-2zM928 609h2v1h-2zM931 608h2v1h-2zM934 607h1v1h-1zM937 606h1v1h-1zM940 605h1v1h-1zM943 604h1v1h-1zM948 602h1v1h-1zM951 601h1v1h-1z"/>
<path fill="#2a7d00" d="M710 649h2v1h-2zM710 653h4v1h-4zM710 648h6v1h-6zM710 652h10v1h-10zM710 651h16v1h-16zM713 647h7v1h-7zM715 650h18v1h-18zM717 646h7v1h-7zM720 649h19v1h-19zM721 645h8v1h-8zM724 644h9v1h-9zM725 648h20v1h-20zM728 643h9v1h-9zM731 647h21v1h-21zM732 642h9v1h-9zM735 641h11v1h-11zM736 646h22v1h-22zM739 640h14v1h-14zM741 645h23v1h-23zM743 639h16v1h-16zM746 250h6v1h-6zM746 644h24v1h-24zM747 251h2v1h-2zM748 638h18v1h-18zM750 249h4v1h-4zM753 248h7v1h-7zM753 643h24v1h-24zM754 637h18v1h-18zM756 247h8v1h-8zM759 642h24v1h-24zM760 246h7v1h-7zM761 636h18v1h-18zM764 245h5v1h-5zM766 641h23v1h-23zM767 244h7v1h-7zM768 635h17v1h-17zM771 243h7v1h-7zM772 640h24v1h-24zM774 242h8v1h-8zM774 634h18v1h-18zM778 241h6v1h-6zM779 639h24v1h-24zM781 240h7v1h-7zM781 633h18v1h-18zM785 239h8v1h-8zM785 638h25v1h-25zM787 632h19v1h-19zM788 238h9v1h-9zM792 237h8v1h-8zM792 637h25v1h-25zM794 631h20v1h-20zM796 236h6v1h-6zM799 235h8v1h-8zM799 636h24v1h-24zM801 630h20v1h-20zM802 234h9v1h-9zM806 635h24v1h-24zM807 233h6v1h-6zM809 629h62v1h-62zM810 232h6v1h-6zM813 231h5v1h-5zM813 634h24v1h-24zM815 230h4v1h-4zM816 229h4v1h-4zM817 628h61v1h-61zM818 228h3v1h-3zM819 227h3v1h-3zM819 226h4v1h-4zM820 225h4v1h-4zM820 633h24v1h-24zM821 224h4v1h-4zM822 223h3v1h-3zM825 627h60v1h-60zM827 632h24v1h-24zM827 631h31v1h-31zM827 630h38v1h-38zM834 626h58v1h-58zM842 625h55v1h-55zM851 624h15v1h-15zM859 623h7v1h-7zM868 624h31v1h-31zM875 623h26v1h-26zM882 622h22v1h-22zM886 619h2v1h-2zM886 618h9v1h-9zM886 617h13v1h-13zM886 616h17v1h-17zM886 615h21v1h-21zM886 614h25v1h-25zM889 621h17v1h-17zM890 613h25v1h-25zM895 620h14v1h-14zM898 612h21v1h-21zM899 619h12v1h-12zM902 618h11v1h-11zM905 617h11v1h-11zM905 611h18v1h-18zM909 616h9v1h-9zM912 615h9v1h-9zM912 610h13v1h-13zM915 614h8v1h-8zM918 613h7v1h-7zM919 609h9v1h-9zM922 612h6v1h-6zM924 608h7v1h-7zM925 611h5v1h-5zM927 610h5v1h-5zM928 607h6v1h-6zM930 609h5v1h-5zM931 606h6v1h-6zM933 608h4v1h-4zM935 605h5v1h-5zM935 607h5v1h-5zM938 606h4v1h-4zM938 604h5v1h-5zM941 605h3v1h-3zM942 603h7v1h-7zM944 604h3v1h-3zM945 602h3v1h-3zM949 601h2v1h-2zM949 602h3v1h-3zM952 600h2v2h-2zM955 600h1v1h-1zM956 599h2v1h-2z"/>
<path fill="#82b400" d="M740 250h6v1h-6zM743 249h7v1h-7zM746 248h7v1h-7zM751 247h5v1h-5zM755 246h5v1h-5zM757 245h7v1h-7zM760 244h7v1h-7zM763 243h8v1h-8zM769 242h5v1h-5zM771 241h7v1h-7zM774 240h7v1h-7zM777 239h8v1h-8zM781 238h7v1h-7zM786 237h6v1h-6zM788 236h8v1h-8zM791 235h8v1h-8zM794 234h8v1h-8zM796 636h3v1h-3zM796 635h10v1h-10zM796 634h17v1h-17zM799 233h8v1h-8zM799 633h21v1h-21zM803 232h7v1h-7zM806 231h7v1h-7zM806 632h21v1h-21zM810 230h5v1h-5zM813 229h3v1h-3zM814 228h4v1h-4zM814 631h13v1h-13zM815 227h4v1h-4zM816 226h3v1h-3zM817 225h3v1h-3zM818 224h3v1h-3zM818 223h4v1h-4zM821 630h6v1h-6zM828 626h6v1h-6zM828 625h14v1h-14zM828 624h23v1h-23zM828 623h31v1h-31zM828 622h39v1h-39zM828 621h46v1h-46zM829 620h52v1h-52zM839 619h47v1h-47zM850 618h36v1h-36zM860 617h26v1h-26zM869 616h17v1h-17zM876 615h10v1h-10zM883 614h3v1h-3z"/>
<path fill="#d6e600" d="M722 648h3v1h-3zM722 647h9v1h-9zM724 646h12v1h-12zM729 645h12v1h-12zM733 644h13v1h-13zM737 250h3v1h-3zM737 643h16v1h-16zM739 249h4v1h-4zM740 248h6v1h-6zM741 642h18v1h-18zM742 247h9v1h-9zM745 246h10v1h-10zM746 641h20v1h-20zM753 640h19v1h-19zM754 245h3v1h-3zM755 244h5v1h-5zM756 243h7v1h-7zM758 242h11v1h-11zM759 639h20v1h-20zM761 241h10v1h-10zM766 638h19v1h-19zM770 240h4v1h-4zM771 239h6v1h-6zM772 637h20v1h-20zM773 238h8v1h-8zM775 237h11v1h-11zM778 236h10v1h-10zM779 636h17v1h-17zM785 635h11v1h-11zM786 235h5v1h-5zM787 234h7v1h-7zM789 233h10v1h-10zM791 232h12v1h-12zM792 634h4v1h-4zM795 231h11v1h-11zM796 630h5v1h-5zM796 629h13v1h-13zM796 628h21v1h-21zM796 627h29v1h-29zM796 624h32v3h-32zM799 623h29v1h-29zM802 230h8v1h-8zM804 229h9v1h-9zM808 228h6v1h-6zM808 622h20v1h-20zM812 227h3v1h-3zM813 226h3v1h-3zM814 225h3v1h-3zM814 224h4v1h-4zM815 222h1v1h-1zM815 223h3v1h-3zM818 621h10v1h-10z"/>
<path fill="#ffee00" d="M710 647h3v1h-3zM710 650h5v1h-5zM710 646h7v1h-7zM710 645h11v1h-11zM710 644h14v1h-14zM712 649h8v1h-8zM712 643h16v1h-16zM715 642h17v1h-17zM716 648h6v1h-6zM718 641h17v1h-17zM720 647h2v1h-2zM720 640h19v1h-19zM723 639h20v1h-20zM726 638h22v1h-22zM729 637h25v1h-25zM732 249h7v1h-7zM732 636h29v1h-29zM734 248h6v1h-6zM735 635h33v1h-33zM737 247h5v1h-5zM737 634h37v1h-37zM740 246h5v1h-5zM740 633h41v1h-41zM743 245h11v1h-11zM743 632h44v1h-44zM746 244h9v1h-9zM748 243h8v1h-8zM748 631h46v1h-46zM751 242h7v1h-7zM754 241h7v1h-7zM754 630h42v1h-42zM757 240h13v1h-13zM760 239h11v1h-11zM761 629h35v1h-35zM763 238h10v1h-10zM766 237h9v1h-9zM767 628h29v1h-29zM769 236h9v1h-9zM772 235h14v1h-14zM774 234h13v1h-13zM774 627h22v1h-22zM777 233h12v1h-12zM780 626h16v1h-16zM781 232h10v1h-10zM784 231h11v1h-11zM786 625h10v1h-10zM787 230h15v1h-15zM789 229h15v1h-15zM792 228h16v1h-16zM793 624h3v1h-3zM795 227h17v1h-17zM798 226h15v1h-15zM803 225h11v1h-11zM807 224h7v1h-7zM809 223h6v1h-6zM810 222h5v1h-5z"/>
<path fill="#ffcb00" d="M780 232h1v1h-1zM783 231h1v1h-1zM786 230h1v1h-1zM800 225h3v1h-3zM803 224h4v1h-4zM806 223h3v1h-3zM809 222h1v1h-1z"/>
</g>
<clipPath id="clp4"><polygon points="724.4,348.2 758.5,340.9 830,341.5 897.8,345 896.6,333.6 931.6,335.2 900.7,350.6 864,360.4 756,354.7 724.4,352.2"/><polygon points="709.7,644.4 744.3,632.1 802,623.4 865,617.3 921.9,609.4 956.9,598.9 894.8,624.6 791.5,640 709.7,652.6"/><polygon points="731.5,248.6 760.4,252 888.3,242.5 923.4,228.7 844,224.6 810,221.8"/></clipPath>
<path fill="none" stroke="#000" stroke-width="1.0" stroke-linejoin="round" clip-path="url(#clp4)" shape-rendering="crispEdges" d="M756.6 351.2L872.5 356.5L908.4 346.8M757.2 347.8L880.9 352.7L916.2 342.9M757.9 344.3L889.3 348.9L923.9 339.1M731 353L765 340.5M741.6 353.6L775.6 340.8M752.2 354.1L786.2 341.1M762.8 354.7L796.8 341.5M773.4 355.2L807.4 341.8M784 355.8L818 342.1M794.6 356.3L828.6 342.4M805.2 356.9L839.2 342.7M815.8 357.4L849.8 343M826.4 358L860.4 343.4M837 358.5L871 343.7M847.6 359.1L881.6 344M858.2 359.6L892.2 344.3M868.8 360.2L902.8 344.6M879.4 360.7L913.4 345M890 361.3L924 345.3M724.4 348.2L758.5 340.9M724.4 352.2L756 354.7L864 360.4L900.7 350.6L931.6 335.2L896.6 333.6M709.7 652.6L791.5 640L894.8 624.6L956.9 598.9M731.5 248.6L810 221.8"/>
<path fill="none" stroke="#000" stroke-width="1.0" stroke-linejoin="round" clip-path="url(#clp4)" shape-rendering="crispEdges" d="M712 649.3L800 631.2L900 617.2L952 600.6M712 646.8L790 629L890 615.6L930 607.5"/>
<path fill="none" stroke="#000" stroke-width="1.0" stroke-linejoin="round" clip-path="url(#clp4)" shape-rendering="crispEdges" d="M744.3 633L921.9 610.3L956.9 598.9"/>
<path fill="none" stroke="#000" stroke-width="1.0" stroke-linejoin="round" clip-path="url(#clp4)" shape-rendering="crispEdges" d="M751.1 241.9L897.1 239.1M770.8 235.2L905.8 235.6M790.4 228.5L914.6 232.1M737.1 249.3L814.1 222M748.8 250.6L822.5 222.6M760.4 252L830.9 223.1M772 251.1L839.3 223.6M783.7 250.3L847.7 224.1M795.3 249.4L856.1 224.6M806.9 248.5L864.5 225.1M818.5 247.7L872.9 225.6M830.2 246.8L881.4 226.1M841.8 246L889.8 226.7M853.4 245.1L898.2 227.2M865 244.2L906.6 227.7M876.7 243.4L915 228.2M731.5 248.6L760.4 252L888.3 242.5L923.4 228.7L844 224.6"/>
<path d="M724.6 347L758 336.3" stroke="#1a00dc" stroke-width="1.8" fill="none"/><path d="M724.6 358L748 353.5" stroke="#1a00dc" stroke-width="1.4" fill="none"/>
<path d="M710.5 645.5L745 633" stroke="#ff3000" stroke-width="1.6" fill="none"/><path d="M745 633L760 630" stroke="#ee0000" stroke-width="1.2" fill="none"/><path d="M760 630L790 625.6" stroke="#0069ff" stroke-width="1.2" fill="none"/><path d="M790 625.6L880 615.4" stroke="#1a00dc" stroke-width="1.2" fill="none"/><path d="M880 615.4L900 612.8" stroke="#00ecdc" stroke-width="1.2" fill="none"/><path d="M900 612.8L921 609.8" stroke="#ee0000" stroke-width="1.4" fill="none"/><path d="M710 655L727 649.4" stroke="#ff9000" stroke-width="1.3" fill="none"/>
<polygon points="779.6,221 804.4,215.6 805,219.5 782,226" fill="#5ff0e8" stroke="#000" stroke-width=".5"/><polygon points="800,216.5 804.4,215.6 805,219.5 801,220.5" fill="#1a00dc"/>
<polygon points="729,246 731.5,248.6 810,221.8 806,217 799,213.6" fill="#2a7d00"/><polygon points="730.6,247.6 731.5,248.6 810,221.8 808.4,219.6" fill="#a8cc00"/><path d="M745 240.5L752 243.5M760 234.5L768 237M775 228.5L784 231M790 222.5L798 225" stroke="#000" stroke-width=".5"/><path d="M716 247.8L792 220" stroke="#00ecdc" stroke-width="2.4" fill="none"/><path d="M716 247.8L792 220" stroke="#0a3cf0" stroke-width="2.4" stroke-dasharray="10 14" fill="none"/>
<polygon points="728,240.4 797.5,210.1 799,213.6 730,244.5" fill="#00ecdc" stroke="#000" stroke-width=".6"/><polygon points="763,225.2 780,217.8 781.5,221.3 764.5,229" fill="#00a070"/><polygon points="783,216.4 797.5,210.1 799,213.6 784.5,220" fill="#00b9ff"/>
<path d="M745 233L746.5 237M763 225.2L764.5 229M780 217.8L781.5 221.3" stroke="#000" stroke-width=".5"/>
<polygon points="727,243 729.5,252 736,241.5" fill="#00ecdc" stroke="#000" stroke-width=".4"/>
<polygon points="807.2,212.2 816.8,208 821.6,236.3 814,239" fill="#7ff000" stroke="#1a3a00" stroke-width=".5"/>
<path d="M811.3 221.8 Q825 217 836 224.6 Q843 230 845.7 237.6 L839.5 240.4 Q838 234 834.7 230.8 Q828 223.5 819.5 224.6 Z" fill="#7ff000" stroke="#1a3a00" stroke-width=".5"/>
<polygon points="814.2,254 818.3,254 819.8,268.6 815.2,269.1" fill="#00803a" stroke="#003a10" stroke-width=".4"/>
<polygon points="818.3,254 822.3,255 829.3,285.7 813.5,268.8 819.8,268.6" fill="#7ff000" stroke="#1a3a00" stroke-width=".5"/>
<path d="M843.3 255 Q842.5 264 837.3 269.5 Q833 272.5 829.5 275.5" fill="none" stroke="#1a3a00" stroke-width="2.6"/><path d="M843.3 255 Q842.5 264 837.3 269.5 Q833 272.5 829.5 275.5" fill="none" stroke="#a8e800" stroke-width="1.6"/>
<rect x="840.8" y="257" width="25.2" height="11.0" fill="#8fb4bc" fill-opacity="0.85"/><text x="842.0" y="265.8" font-size="10" fill="#222" textLength="22.8" lengthAdjust="spacingAndGlyphs">125,0</text>
<rect x="808.5" y="184.2" width="24.3" height="11.7" fill="#c8c8c8" fill-opacity="1"/><text x="809.7" y="193.7" font-size="10" fill="#222" textLength="21.9" lengthAdjust="spacingAndGlyphs">-52,0</text>
<path d="M614.5 902.9L625.2 900.6L634.3 901.4L635.1 899.6L639.7 899.9L640.5 901.7L680.2 905.2L677.9 908.3L626.7 905.2Z" fill="#ff0000" stroke="#200" stroke-width=".7"/>
<path d="M619.8 905.2Q619.6 919.8 629.8 930.5Q636 936 643.5 935.8Q651 935.6 657.3 932L651.2 932.8Q645 932 640.5 928.9Q634.5 924.5 632.8 919.8Q629.5 913 628.2 906Z" fill="#ff0000" stroke="#200" stroke-width=".7"/>
<path d="M656.8 925.9L669.5 909.4L675.9 920.5L661.9 926.6L664.8 923.4Z" fill="#ff0000" stroke="#200" stroke-width=".6"/>
<rect x="629" y="910.6" width="28.3" height="11.0" fill="#c8c8c8" fill-opacity="1"/><text x="630.2" y="919.4" font-size="10" fill="#222" textLength="25.9" lengthAdjust="spacingAndGlyphs">-125,0</text>
<polygon points="649.8,946 644.2,967 649.6,967 653.4,1017 658.4,1017 654.4,967 659,967" fill="#ff0000"/>
<rect x="657.3" y="1021" width="23.7" height="11.4" fill="#c8c8c8" fill-opacity="1"/><text x="658.5" y="1030.2" font-size="10" fill="#222" textLength="21.3" lengthAdjust="spacingAndGlyphs">-55,0</text>
<rect x="1330.5" y="279.5" width="22" height="246.5" fill="#000"/>
<rect x="1331.5" y="280.00" width="20" height="12.58" fill="#b40000"/>
<rect x="1331.5" y="292.27" width="20" height="12.58" fill="#d80000"/>
<rect x="1331.5" y="304.55" width="20" height="12.58" fill="#ff0000"/>
<rect x="1331.5" y="316.82" width="20" height="12.58" fill="#ff4600"/>
<rect x="1331.5" y="329.10" width="20" height="12.58" fill="#ff7d00"/>
<rect x="1331.5" y="341.38" width="20" height="12.58" fill="#ffaa00"/>
<rect x="1331.5" y="353.65" width="20" height="12.58" fill="#ffcb00"/>
<rect x="1331.5" y="365.93" width="20" height="12.58" fill="#ffee00"/>
<rect x="1331.5" y="378.20" width="20" height="12.58" fill="#d6e600"/>
<rect x="1331.5" y="390.48" width="20" height="12.58" fill="#82b400"/>
<rect x="1331.5" y="402.75" width="20" height="12.58" fill="#2a7d00"/>
<rect x="1331.5" y="415.02" width="20" height="12.58" fill="#00803a"/>
<rect x="1331.5" y="427.30" width="20" height="12.58" fill="#00b48c"/>
<rect x="1331.5" y="439.58" width="20" height="12.58" fill="#00ecdc"/>
<rect x="1331.5" y="451.85" width="20" height="12.58" fill="#00b9ff"/>
<rect x="1331.5" y="464.12" width="20" height="12.58" fill="#0069ff"/>
<rect x="1331.5" y="476.40" width="20" height="12.58" fill="#0000ff"/>
<rect x="1331.5" y="488.68" width="20" height="12.58" fill="#1a00dc"/>
<rect x="1331.5" y="500.95" width="20" height="12.58" fill="#3200b4"/>
<rect x="1331.5" y="513.23" width="20" height="12.58" fill="#4f008c"/>
<rect x="1324.5" y="279.50" width="6.5" height="1" fill="#333"/>
<text x="1318.6" y="277.7" font-size="9.7" fill="#111" text-anchor="end">355,0</text>
<rect x="1324.5" y="300.25" width="6.5" height="1" fill="#333"/>
<text x="1318.6" y="298.4" font-size="9.7" fill="#111" text-anchor="end">325</text>
<rect x="1324.5" y="317.54" width="6.5" height="1" fill="#333"/>
<text x="1318.6" y="315.7" font-size="9.7" fill="#111" text-anchor="end">300</text>
<rect x="1324.5" y="334.82" width="6.5" height="1" fill="#333"/>
<text x="1318.6" y="333.0" font-size="9.7" fill="#111" text-anchor="end">275</text>
<rect x="1324.5" y="352.11" width="6.5" height="1" fill="#333"/>
<text x="1318.6" y="350.3" font-size="9.7" fill="#111" text-anchor="end">250</text>
<rect x="1324.5" y="369.40" width="6.5" height="1" fill="#333"/>
<text x="1318.6" y="367.6" font-size="9.7" fill="#111" text-anchor="end">225</text>
<rect x="1324.5" y="386.69" width="6.5" height="1" fill="#333"/>
<text x="1318.6" y="384.9" font-size="9.7" fill="#111" text-anchor="end">200</text>
<rect x="1324.5" y="403.98" width="6.5" height="1" fill="#333"/>
<text x="1318.6" y="402.2" font-size="9.7" fill="#111" text-anchor="end">175</text>
<rect x="1324.5" y="421.27" width="6.5" height="1" fill="#333"/>
<text x="1318.6" y="419.5" font-size="9.7" fill="#111" text-anchor="end">150</text>
<rect x="1324.5" y="438.56" width="6.5" height="1" fill="#333"/>
<text x="1318.6" y="436.8" font-size="9.7" fill="#111" text-anchor="end">125</text>
<rect x="1324.5" y="455.85" width="6.5" height="1" fill="#333"/>
<text x="1318.6" y="454.0" font-size="9.7" fill="#111" text-anchor="end">100</text>
<rect x="1324.5" y="473.13" width="6.5" height="1" fill="#333"/>
<text x="1318.6" y="471.3" font-size="9.7" fill="#111" text-anchor="end">75</text>
<rect x="1324.5" y="490.42" width="6.5" height="1" fill="#333"/>
<text x="1318.6" y="488.6" font-size="9.7" fill="#111" text-anchor="end">50</text>
<rect x="1324.5" y="507.71" width="6.5" height="1" fill="#333"/>
<text x="1318.6" y="505.9" font-size="9.7" fill="#111" text-anchor="end">25</text>
<rect x="1324.5" y="525.00" width="6.5" height="1" fill="#333"/>
<text x="1318.6" y="533.8" font-size="9.7" fill="#111" text-anchor="end">0,0</text>
<text x="1319.4" y="253" font-size="12.5" fill="#111" textLength="32.6" lengthAdjust="spacingAndGlyphs">[MPa]</text>
<defs><radialGradient id="shd" cx="50%" cy="50%" r="50%"><stop offset="0" stop-color="#999" stop-opacity=".9"/><stop offset=".7" stop-color="#bbb" stop-opacity=".5"/><stop offset="1" stop-color="#fff" stop-opacity="0"/></radialGradient></defs>
<ellipse cx="1330" cy="213.5" rx="36" ry="9.5" fill="url(#shd)"/>
<ellipse cx="1329" cy="210.5" rx="31" ry="8.2" fill="none" stroke="#c6c6c6" stroke-width="7"/>
<polygon points="1304,182.5 1322,178.5 1348,178 1331.5,181" fill="#3a3a3a" stroke="#111" stroke-width="1"/>
<polygon points="1304,182.5 1331.5,181 1334,217.5 1309,212" fill="#6a6a6a" stroke="#151515" stroke-width="1.2"/>
<polygon points="1331.5,181 1348,178 1349.5,206 1334,217.5" fill="#707070" stroke="#151515" stroke-width="1.2"/>
<polygon points="1309,212 1326,205 1349.5,206 1334,217.5" fill="#5c5c5c" opacity=".6"/>
<path d="M1326 205 L1325 181.5 M1326 205 L1309 212 M1326 205 L1349.5 206" stroke="#7d7d7d" stroke-width=".6" fill="none"/>
<text x="1314.5" y="203" font-size="5.5" fill="#eee" font-weight="bold" transform="rotate(8 1318 200)">+Y</text>
<text x="1339" y="200" font-size="5.5" fill="#eee" font-weight="bold" transform="rotate(-14 1341 198)">-X</text>
<path d="M1299 222 l8 -4 l-1 2.5 l5 -1" stroke="#222" stroke-width="1.3" fill="none"/>
<path d="M1355 211 l6 1.5 l4 1.5" stroke="#555" stroke-width="1" fill="none"/>
<path d="M1301 205 l5 -1.5" stroke="#555" stroke-width="1" fill="none"/>
</svg>
</div></body></html>
